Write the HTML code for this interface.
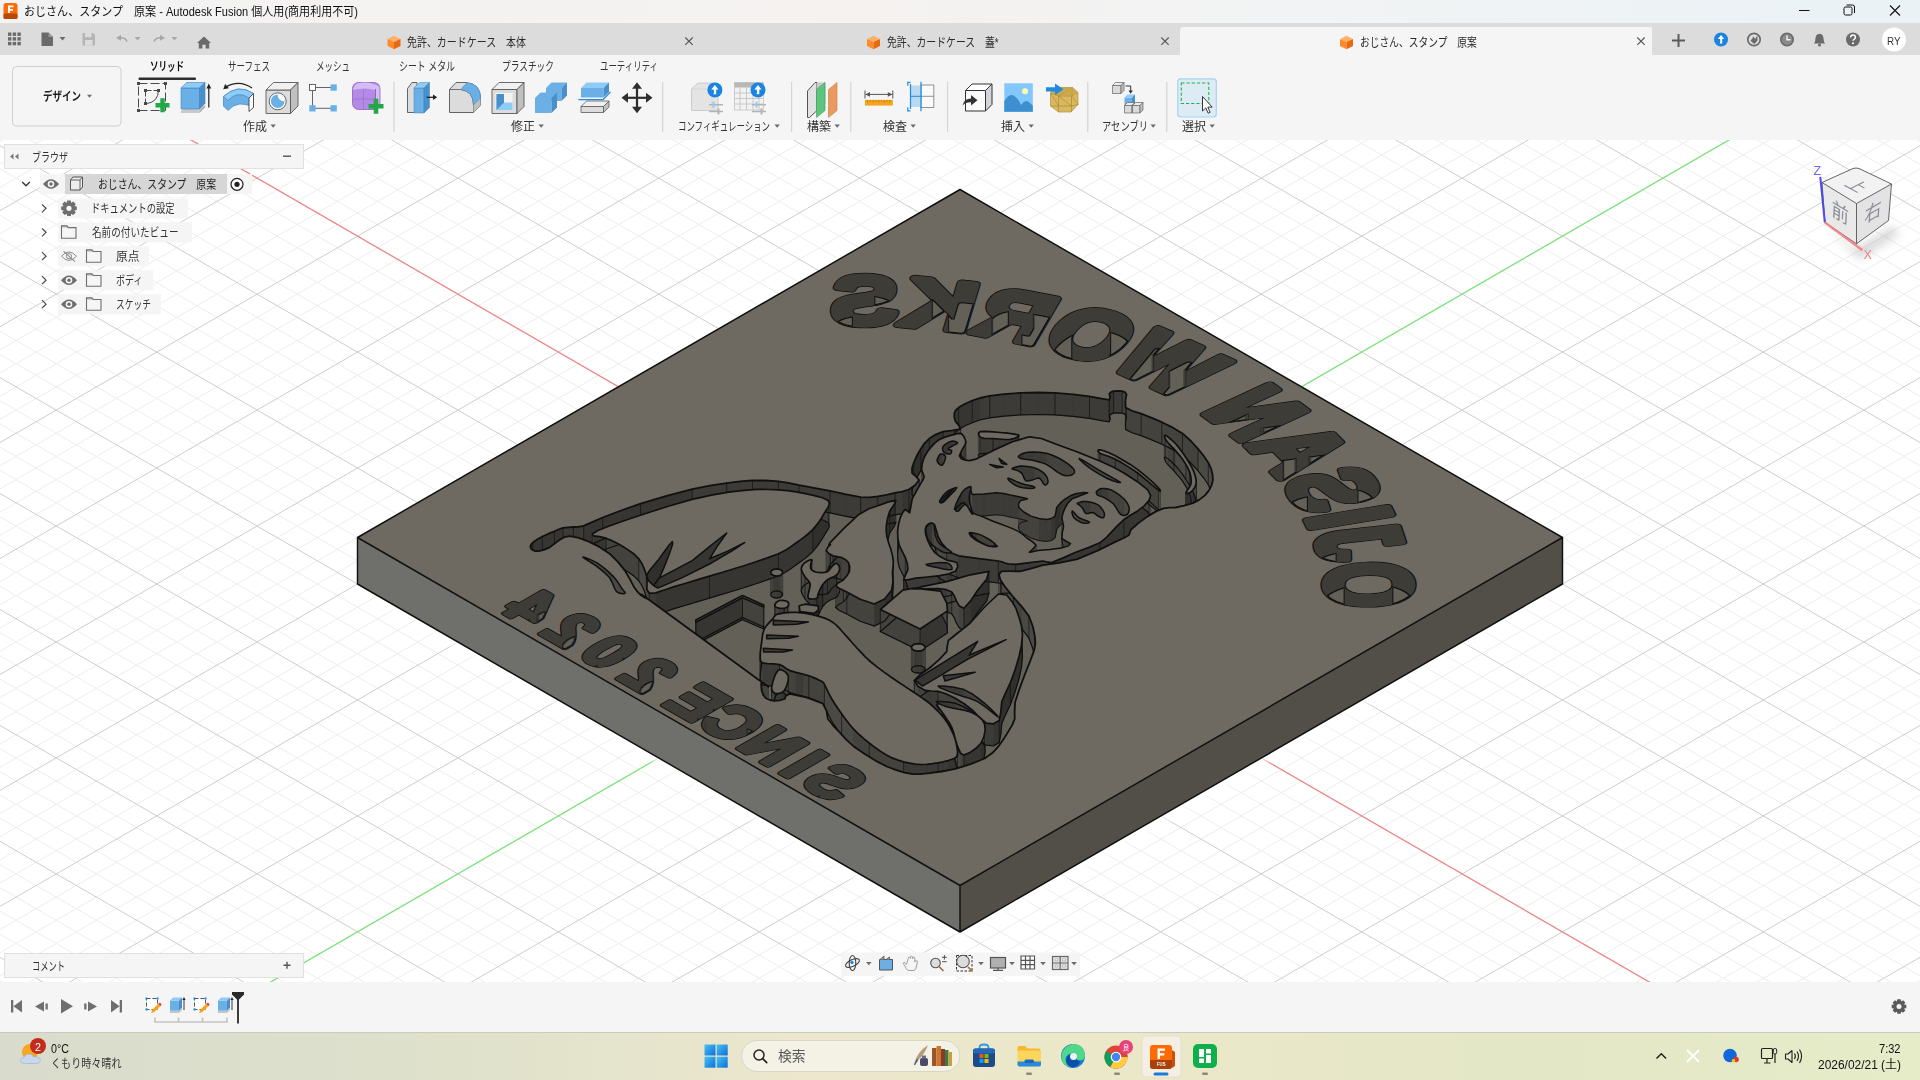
<!DOCTYPE html><html lang="ja"><head><meta charset="utf-8"><title>Autodesk Fusion</title><style>html,body{margin:0;padding:0}body{width:1920px;height:1080px;position:relative;overflow:hidden;background:#f5f5f5;font-family:"Liberation Sans","Noto Sans CJK JP",sans-serif}span{position:absolute;white-space:pre;height:20px;line-height:20px;transform-origin:0 50%;display:block}</style></head><body>
<svg width="1920" height="140" viewBox="0 0 1920 140" style="position:absolute;left:0;top:0">
<defs><linearGradient id="tb" x1="0" x2="1"><stop offset="0" stop-color="#f3f3f3"/><stop offset=".45" stop-color="#f5f2f0"/><stop offset=".7" stop-color="#f1f3f4"/><stop offset="1" stop-color="#eaf2f6"/></linearGradient></defs>
<rect width="1920" height="23" fill="url(#tb)"/>
<rect y="23" width="1920" height="32" fill="#dcdcdc"/>
<rect y="55" width="1920" height="85" fill="#f5f5f5"/>
<path d="M1180 55V31q0-4 4-4H1652V55z" fill="#f5f5f5"/>
<rect x="3.5" y="3" width="14" height="16" rx="2.5" fill="#ff6b00"/><rect x="3.5" y="13.5" width="14" height="5.5" rx="1.5" fill="#b8480a"/><path d="M8 5.5h5.5v1.8H10v1.8h3v1.7h-3v2.2H8z" fill="#fff"/>
<path d="M1799 10.5h10.5" stroke="#111" stroke-width="1"/>
<rect x="1844" y="7" width="8" height="8" rx="1.5" fill="none" stroke="#111" stroke-width="1"/><path d="M1846.5 5H1852.5q2 0 2 2V13" fill="none" stroke="#111" stroke-width="1"/>
<path d="M1890 5.5l10 10M1900 5.5l-10 10" stroke="#111" stroke-width="1.1"/>
<g fill="#6a6a6a"><rect x="8" y="32.5" width="3.4" height="3.4"/><rect x="8" y="37.2" width="3.4" height="3.4"/><rect x="8" y="41.9" width="3.4" height="3.4"/><rect x="12.7" y="32.5" width="3.4" height="3.4"/><rect x="12.7" y="37.2" width="3.4" height="3.4"/><rect x="12.7" y="41.9" width="3.4" height="3.4"/><rect x="17.4" y="32.5" width="3.4" height="3.4"/><rect x="17.4" y="37.2" width="3.4" height="3.4"/><rect x="17.4" y="41.9" width="3.4" height="3.4"/></g>
<path d="M41.5 32.5h7l4.5 4.5v9h-11.5z" fill="#6a6a6a"/><path d="M48.5 32.5v4.5h4.5z" fill="#9a9a9a"/>
<path d="M59.5 37h6l-3 3.5z" fill="#6a6a6a"/>
<path d="M82.5 33h10.5l2 2v10.5h-12.5z" fill="#b5b5b5"/><rect x="85" y="33" width="6.5" height="4.2" fill="#dcdcdc"/><rect x="85" y="40" width="7.5" height="5.5" fill="#dcdcdc"/>
<path d="M127 41.5q-2-4.5-8-3.5" fill="none" stroke="#a8a8a8" stroke-width="1.6"/><path d="M116 38l5-3.2v6z" fill="#a8a8a8"/><path d="M134.5 37h6l-3 3.5z" fill="#a8a8a8"/>
<path d="M154 41.5q2-4.5 8-3.5" fill="none" stroke="#a8a8a8" stroke-width="1.6"/><path d="M165 38l-5-3.2v6z" fill="#a8a8a8"/><path d="M171.5 37h6l-3 3.5z" fill="#a8a8a8"/>
<path d="M197 43l7-6.5l7 6.5h-1.8v5.5h-3.6v-3.8h-3.2v3.8h-3.6v-5.5z" fill="#6a6a6a"/>
<path d="M387.5 38.9l6.5 -3.2l6.5 3.2l-6.5 3.2z" fill="#ffb066"/><path d="M387.5 38.9l6.5 3.2v7.2l-6.5 -3.2z" fill="#ff8a2a"/><path d="M394 42.1l6.5 -3.2v7.2l-6.5 3.2z" fill="#e86a10"/>
<path d="M867 38.9l6.5 -3.2l6.5 3.2l-6.5 3.2z" fill="#ffb066"/><path d="M867 38.9l6.5 3.2v7.2l-6.5 -3.2z" fill="#ff8a2a"/><path d="M873.5 42.1l6.5 -3.2v7.2l-6.5 3.2z" fill="#e86a10"/>
<path d="M1340 38.9l6.5 -3.2l6.5 3.2l-6.5 3.2z" fill="#ffb066"/><path d="M1340 38.9l6.5 3.2v7.2l-6.5 -3.2z" fill="#ff8a2a"/><path d="M1346.5 42.1l6.5 -3.2v7.2l-6.5 3.2z" fill="#e86a10"/>
<path d="M685.3 37.5l7.4 7.4M692.7 37.5l-7.4 7.4" stroke="#5a5a5a" stroke-width="1.2"/>
<path d="M1161.3 37.5l7.4 7.4M1168.7 37.5l-7.4 7.4" stroke="#5a5a5a" stroke-width="1.2"/>
<path d="M1637.3 37.5l7.4 7.4M1644.7 37.5l-7.4 7.4" stroke="#5a5a5a" stroke-width="1.2"/>
<path d="M1672 40.5h13M1678.5 34v13" stroke="#5a5a5a" stroke-width="2"/>
<circle cx="1721" cy="39.5" r="7" fill="#1a84e0"/><path d="M1721 35l3.2 4h-2v4.5h-2.4q1-2 .2-4.5h-2.2z" fill="#fff"/>
<circle cx="1754" cy="39.5" r="6.2" fill="none" stroke="#6a6a6a" stroke-width="1.7"/><path d="M1750.5 41l3-4.5 1.5 2.5 2.5-3.5v5l-3 3.5z" fill="#6a6a6a"/>
<circle cx="1787" cy="39.5" r="6.2" fill="#8a8a8a" stroke="#6a6a6a" stroke-width="1.6"/><path d="M1787 35.5v4.3h3.6" fill="none" stroke="#f0f0f0" stroke-width="1.5"/>
<path d="M1813.8 43.5q1.6-1.4 1.6-4.5 0-4.6 4.1-5.2 4.1 .6 4.1 5.2 0 3.1 1.6 4.5z" fill="#6a6a6a"/><circle cx="1819.5" cy="45" r="1.5" fill="#6a6a6a"/>
<circle cx="1853" cy="39.5" r="7" fill="#6a6a6a"/><path d="M1850.6 37.5q0-2.4 2.4-2.4 2.4 0 2.4 2.2 0 1.3-1.3 2-1 .5-1 1.5" fill="none" stroke="#fff" stroke-width="1.5"/><circle cx="1853" cy="43.3" r="1" fill="#fff"/>
<circle cx="1894" cy="39.5" r="12" fill="#fff"/>
<rect x="12.5" y="66.5" width="108.5" height="59.5" rx="4" fill="#f5f5f5" stroke="#cfcfcf"/>
<path d="M87 94.7h5l-2.5 3z" fill="#6a6a6a"/>
<rect x="138.5" y="77.4" width="57.5" height="2.6" rx="1" fill="#2e2e2e"/>
<rect x="393.4" y="82" width="1.2" height="50" fill="#d4d4d4"/>
<rect x="662.1" y="82" width="1.2" height="50" fill="#d4d4d4"/>
<rect x="791" y="82" width="1.2" height="50" fill="#d4d4d4"/>
<rect x="850.1999999999999" y="82" width="1.2" height="50" fill="#d4d4d4"/>
<rect x="947" y="82" width="1.2" height="50" fill="#d4d4d4"/>
<rect x="1087.2" y="82" width="1.2" height="50" fill="#d4d4d4"/>
<rect x="1166.2" y="82" width="1.2" height="50" fill="#d4d4d4"/>
<path d="M270.5 124.5h5.4l-2.7 3.2z" fill="#6a6a6a"/>
<path d="M538.5 124.5h5.4l-2.7 3.2z" fill="#6a6a6a"/>
<path d="M774.5 124.5h5.4l-2.7 3.2z" fill="#6a6a6a"/>
<path d="M834.5 124.5h5.4l-2.7 3.2z" fill="#6a6a6a"/>
<path d="M910.5 124.5h5.4l-2.7 3.2z" fill="#6a6a6a"/>
<path d="M1028.5 124.5h5.4l-2.7 3.2z" fill="#6a6a6a"/>
<path d="M1150.5 124.5h5.4l-2.7 3.2z" fill="#6a6a6a"/>
<path d="M1209.5 124.5h5.4l-2.7 3.2z" fill="#6a6a6a"/>
<g transform="translate(136 81)"><rect x="2.5" y="2.5" width="27" height="27" fill="none" stroke="#4a4a4a" stroke-width="1" stroke-dasharray="9 3"/><g fill="#4a4a4a"><rect x="1" y="1" width="3" height="3"/><rect x="28" y="1" width="3" height="3"/><rect x="1" y="28" width="3" height="3"/></g><path d="M9.5 9.5H22.5M9.5 9.5V22.5" stroke="#4a4a4a" stroke-width="1" stroke-dasharray="6 2" fill="none"/><path d="M22.5 9.5Q22 21 11 22.5" fill="none" stroke="#4a4a4a" stroke-width="1"/><g fill="#4a4a4a"><rect x="8" y="8" width="3" height="3"/><rect x="21" y="8" width="3" height="3"/><rect x="8" y="21" width="3" height="3"/></g><path d="M19.5 24.2h14M26.5 17.2v14" stroke="#22a846" stroke-width="4.4"/></g>
<g transform="translate(180 81)"><path d="M1 30h18.5v2h-18.5z" fill="#c9c9c9"/><path d="M1 30l5.5 -5.5h18.5l-5.5 5.5z" fill="#c9c9c9"/><path d="M19.5 30l5.5 -5.5v2l-5.5 5.5z" fill="#a9a9a9"/><path d="M1 7h18.5v21h-18.5z" fill="#6ab0e6" stroke="#3f85bd" stroke-width="0.6" stroke-linejoin="round"/><path d="M1 7l5.5 -5.5h18.5l-5.5 5.5z" fill="#8fcbf7" stroke="#3f85bd" stroke-width="0.6" stroke-linejoin="round"/><path d="M19.5 7l5.5 -5.5v21l-5.5 5.5z" fill="#4a90c8" stroke="#3f85bd" stroke-width="0.6" stroke-linejoin="round"/><path d="M28.8 26.5V5" stroke="#222" stroke-width="1.2"/><path d="M26.4 7.5l2.4-5 2.4 5z" fill="#222"/></g>
<g transform="translate(222 81)"><path d="M1.5 15.5Q16 2 31.5 12.5V26.5Q16 18 6 29.5L1.5 25z" fill="#6ab0e6" stroke="#3f85bd" stroke-width=".7"/><path d="M1.5 15.5Q16 2 31.5 12.5L27 17Q16 9 6 19.5z" fill="#8fcbf7" stroke="#3f85bd" stroke-width=".7"/><path d="M27 17l4.5-4.5V26.5L27 30.5z" fill="#fff" stroke="#444" stroke-width=".9"/><path d="M30 7Q17 -2 3 6.5" fill="none" stroke="#222" stroke-width="1.1"/><path d="M1.2 8.3l2-5.3 3.7 4.3z" fill="#222"/></g>
<g transform="translate(265 81)"><path d="M1 9h24.5v23.5h-24.5z" fill="#dcdcdc" stroke="#5a5a5a" stroke-width="0.9" stroke-linejoin="round"/><path d="M1 9l7.5 -7.5h24.5l-7.5 7.5z" fill="#f0f0f0" stroke="#5a5a5a" stroke-width="0.9" stroke-linejoin="round"/><path d="M25.5 9l7.5 -7.5v23.5l-7.5 7.5z" fill="#c0c0c0" stroke="#5a5a5a" stroke-width="0.9" stroke-linejoin="round"/><circle cx="12.7" cy="20.3" r="8.5" fill="#fff" stroke="#555" stroke-width=".9"/><circle cx="12.7" cy="20.3" r="6.8" fill="#6ab0e6"/><path d="M12.7 13.5a6.8 6.8 0 0 1 6.8 6.8q-7-.5-6.8-6.8z" fill="#fff"/></g>
<g transform="translate(307 81)"><path d="M5.5 9.5v17M5.5 6.5h21M5.5 27.3h21" stroke="#555" stroke-width=".9"/><rect x="2.5" y="3.5" width="6" height="6" fill="#fff" stroke="#555" stroke-width=".9"/><rect x="23.5" y="3.4" width="6.3" height="6.3" fill="#6ab0e6"/><rect x="2.3" y="24.2" width="6.3" height="6.3" fill="#6ab0e6"/><rect x="23.5" y="24.2" width="6.3" height="6.3" fill="#6ab0e6"/></g>
<g transform="translate(351 81)"><rect x="1.5" y="1.5" width="27.5" height="27" rx="6" fill="#b48ae6" stroke="#8a62c0" stroke-width=".8"/><path d="M8 2Q20 0 28.5 6V22L24 28V9Q14 6 2 9Q3 3 8 2z" fill="#dcc4f7" opacity=".85"/><path d="M12.5 9v19M2 18h22" stroke="#9a72d0" stroke-width=".8"/><path d="M24.5 8V28" stroke="#7a52b0" stroke-width=".8"/><path d="M17.5 25.2h15M25 17.7v15" stroke="#22a846" stroke-width="4.6"/></g>
<g transform="translate(406 81)"><path d="M1.5 7.5l4.5-6h5v30H1.5z" fill="#dcdcdc" stroke="#555" stroke-width=".9"/><path d="M8 7h10v25h-10z" fill="#6ab0e6" stroke="#3f85bd" stroke-width="0.5" stroke-linejoin="round"/><path d="M8 7l5.5 -5.5h10l-5.5 5.5z" fill="#8fcbf7" stroke="#3f85bd" stroke-width="0.5" stroke-linejoin="round"/><path d="M18 7l5.5 -5.5v25l-5.5 5.5z" fill="#4a90c8" stroke="#3f85bd" stroke-width="0.5" stroke-linejoin="round"/><path d="M20.5 16.3h8" stroke="#222" stroke-width="1.3"/><path d="M27 13.5l4.2 2.8-4.2 2.8z" fill="#222"/></g>
<g transform="translate(448 81)"><path d="M1.5 31.5V8.5L8 1.5H18Q32.5 3 32.5 17V24.5L25.5 31.5z" fill="#dcdcdc" stroke="#555" stroke-width=".9"/><path d="M25.5 31.5V24Q25.5 10 12.5 8.5H1.5" fill="none" stroke="#555" stroke-width=".8"/><path d="M25.5 31.5l7-7V17l-7 7z" fill="#c0c0c0"/><path d="M12.5 8.5L19 1.6Q32.5 3 32.5 17L25.5 24Q25.5 10 12.5 8.5z" fill="#6ab0e6" stroke="#3f85bd" stroke-width=".5"/></g>
<g transform="translate(491 81)"><path d="M1 8.5h25v24h-25z" fill="#dcdcdc" stroke="#5a5a5a" stroke-width="0.9" stroke-linejoin="round"/><path d="M1 8.5l7 -7h25l-7 7z" fill="#f0f0f0" stroke="#5a5a5a" stroke-width="0.9" stroke-linejoin="round"/><path d="M26 8.5l7 -7v24l-7 7z" fill="#c0c0c0" stroke="#5a5a5a" stroke-width="0.9" stroke-linejoin="round"/><rect x="4.5" y="12" width="17" height="17" fill="#f3f3f3"/><path d="M5.5 13h7.5v8.5h8.5v7.5h-16z" fill="#8fcbf7"/><path d="M5.5 13h7.5v8.5l-7.5 7.5z" fill="#4a90c8"/></g>
<g transform="translate(534 81)"><path d="M12 7h15.5v13h-15.5z" fill="#6ab0e6"/><path d="M12 7l5.5 -5.5h15.5l-5.5 5.5z" fill="#6ab0e6"/><path d="M27.5 7l5.5 -5.5v13l-5.5 5.5z" fill="#4a90c8"/><path d="M1 17h16.5v15h-16.5z" fill="#6ab0e6"/><path d="M1 17l5.5 -5.5h16.5l-5.5 5.5z" fill="#6ab0e6"/><path d="M17.5 17l5.5 -5.5v15l-5.5 5.5z" fill="#4a90c8"/><path d="M12 7v10.5M17.5 17.5h10" stroke="#4a90c8" stroke-width="0"/></g>
<g transform="translate(579 81)"><path d="M2 25.5h22.5v6h-22.5z" fill="#dcdcdc" stroke="#5a5a5a" stroke-width="0.8" stroke-linejoin="round"/><path d="M2 25.5l5.5 -5.5h22.5l-5.5 5.5z" fill="#f0f0f0" stroke="#5a5a5a" stroke-width="0.8" stroke-linejoin="round"/><path d="M24.5 25.5l5.5 -5.5v6l-5.5 5.5z" fill="#c0c0c0" stroke="#5a5a5a" stroke-width="0.8" stroke-linejoin="round"/><path d="M2 7h22.5v9.5h-22.5z" fill="#6ab0e6"/><path d="M2 7l5.5 -5.5h22.5l-5.5 5.5z" fill="#8fcbf7"/><path d="M24.5 7l5.5 -5.5v9.5l-5.5 5.5z" fill="#4a90c8"/><path d="M-.5 18.7h24.5l7.5-7.8" fill="none" stroke="#1f8ae0" stroke-width="1.3"/></g>
<g transform="translate(637 97.8)" fill="#2e2e2e"><rect x="-11" y="-1.1" width="22" height="2.2"/><rect x="-1.1" y="-11" width="2.2" height="22"/><path d="M-15.5 0l6.5-5v10zM15.5 0l-6.5-5v10zM0 -15.5l-5 6.5h10zM0 15.5l-5-6.5h10z"/></g>
<g transform="translate(690 81)"><path d="M1.5 8l6.5-6h20v27.5h-26.5z" fill="#e4e4e4" stroke="#c4c4c4" stroke-width=".8"/><path d="M1.5 8h20.5v21.5M22 8l6-6" fill="none" stroke="#d0d0d0" stroke-width=".8"/><circle cx="24.9" cy="8.9" r="7.5" fill="#1a84e0"/><path d="M24.9 3.9000000000000004l3.5 4.6h-2.2v4.8h-2.8q1.2-2.2.2-4.8h-2.4z" fill="#fff"/><path d="M19 23.7h14M19 30.5h14" stroke="#b4b4b4" stroke-width="1.5"/><rect x="22.5" y="20.7" width="2" height="6" fill="#8fcbf7"/><rect x="27.5" y="27.5" width="2" height="6" fill="#b4b4b4"/></g>
<g transform="translate(733 81)"><rect x="1.5" y="1.5" width="29" height="27.5" fill="#f2f2f2" stroke="#c4c4c4" stroke-width=".8"/><rect x="1.5" y="1.5" width="29" height="5" fill="#b8b8b8"/><path d="M1.5 12h29M1.5 17.5h29M1.5 23h29M7 6.5v22.5M13.5 6.5v22.5M20 6.5v22.5M26 6.5v22.5" stroke="#c4c4c4" stroke-width=".9"/><circle cx="25" cy="8.9" r="7.5" fill="#1a84e0"/><path d="M25 3.9000000000000004l3.5 4.6h-2.2v4.8h-2.8q1.2-2.2.2-4.8h-2.4z" fill="#fff"/><path d="M19 23.7h14M19 30.5h14" stroke="#b4b4b4" stroke-width="1.5"/><rect x="22.5" y="20.7" width="2" height="6" fill="#8fcbf7"/><rect x="27.5" y="27.5" width="2" height="6" fill="#b4b4b4"/></g>
<g transform="translate(806 81)"><path d="M1.5 10l7.5-8.5h2v28l-7.5 7h-2z" fill="#e2e2e2" stroke="#444" stroke-width=".9"/><path d="M11 1.5v28l8.5-7V1.5z" fill="#c8c8c8" stroke="#444" stroke-width=".0"/><path d="M10.5 8.5l8.5-7v28l-8.5 7z" fill="#5cc47e" stroke="#3a9a58" stroke-width=".6"/><path d="M22.5 8.5l8.5-7v28l-8.5 7z" fill="#e89a60" stroke="#c87a40" stroke-width=".6"/></g>
<g transform="translate(862 81)"><path d="M3 9.5v8M30.8 9.5v8M3.5 13.4h27" stroke="#555" stroke-width="1"/><path d="M3.5 13.4l4.5-2.3v4.6zM30.3 13.4l-4.5-2.3v4.6z" fill="#555"/><rect x="3" y="18.9" width="27.8" height="5.7" fill="#f5a51d"/><path d="M5.5 18.9v3M8.3 18.9v2M11.1 18.9v3M13.899999999999999 18.9v2M16.7 18.9v3M19.5 18.9v2M22.299999999999997 18.9v3M25.099999999999998 18.9v2M27.9 18.9v3" stroke="#c47e08" stroke-width=".8"/></g>
<g transform="translate(906 81)"><rect x="15" y="4" width="12.8" height="22.5" fill="#fafafa" stroke="#888" stroke-width=".9"/><path d="M15 15.3h12.8" stroke="#888" stroke-width=".9"/><rect x="4.5" y="4.5" width="10.5" height="21.5" fill="#b9d9f3"/><path d="M4.5 15.3h10.5" stroke="#1f8ae0" stroke-width="1"/><path d="M15 .8v29.5M4.5 3v25" stroke="#1f8ae0" stroke-width="1.2"/><path d="M4.5 1.3h-2.7v3.5M4.5 29.8h-2.7v-3.5" fill="none" stroke="#1f8ae0" stroke-width="1.2"/></g>
<g transform="translate(961 81)"><path d="M4.5 9.5h20v20.5h-20z" fill="#fbfbfb" stroke="#333" stroke-width="1" stroke-linejoin="round"/><path d="M4.5 9.5l6.5 -6.5h20l-6.5 6.5z" fill="#fff" stroke="#333" stroke-width="1" stroke-linejoin="round"/><path d="M24.5 9.5l6.5 -6.5v20.5l-6.5 6.5z" fill="#d4d4d8" stroke="#333" stroke-width="1" stroke-linejoin="round"/><path d="M1.5 24.5Q3 17.5 10 17.5V14l6.5 5.3-6.5 5.3v-3.4Q5 21 1.5 24.5z" fill="#333"/></g>
<g transform="translate(1003 81)"><rect x="1.3" y="2.3" width="28.5" height="28.5" fill="#82c8ff"/><path d="M1.3 30.8V20Q6 12 10.5 14.5T18 24Q22 18.5 25 20.5T29.8 25V30.8z" fill="#3d8fcf"/><circle cx="22" cy="10.3" r="3" fill="#ffffb0"/></g>
<g transform="translate(1045 81)"><path d="M5.5 12l5-5.5h17l5.5 5v12l-7 7.5h-12.5l-8-6z" fill="#d9b862" stroke="#b89438" stroke-width=".7"/><path d="M5.5 12l8 3h13l6.5-3.5M13.5 15v16M26.5 15v16M5.5 12l8 13M13.5 15l13 10M26.5 15l6.5 8.5M13.5 25h13l6.5-1.5M5.5 25l8 0M10.5 6.5l3 8.5M27.5 6.5l-1 8.5M13.5 15l14-8.5" fill="none" stroke="#a88428" stroke-width=".6"/><path d="M10 6.5h17.5l5.5 5-6.5 3.5h-13l-8-3z" fill="#c4a248" opacity=".7"/><path d="M1 6.2h9V2.5l8.5 5.8-8.5 5.8v-3.7H1z" fill="#1f8ae0"/></g>
<g transform="translate(1111 81)"><path d="M1.5 4.5h8.5v8h-8.5z" fill="#dadada" stroke="#666" stroke-width="0.7" stroke-linejoin="round"/><path d="M1.5 4.5l3 -3h8.5l-3 3z" fill="#ececec" stroke="#666" stroke-width="0.7" stroke-linejoin="round"/><path d="M10 4.5l3 -3v8l-3 3z" fill="#bdbdbd" stroke="#666" stroke-width="0.7" stroke-linejoin="round"/><path d="M14.5 5h5.2v5" fill="none" stroke="#333" stroke-width="1"/><path d="M17.5 9.5l2.2 3.3 2.2-3.3z" fill="#333"/><path d="M13.5 16.5h7.5v7.5h-7.5z" fill="#6ab0e6"/><path d="M13.5 16.5l3 -3h7.5l-3 3z" fill="#8fcbf7"/><path d="M21 16.5l3 -3v7.5l-3 3z" fill="#4a90c8"/><path d="M13.5 24.5h7.5v7.5h-7.5z" fill="#dadada" stroke="#666" stroke-width="0.7" stroke-linejoin="round"/><path d="M13.5 24.5l3 -3h7.5l-3 3z" fill="#ececec" stroke="#666" stroke-width="0.7" stroke-linejoin="round"/><path d="M21 24.5l3 -3v7.5l-3 3z" fill="#bdbdbd" stroke="#666" stroke-width="0.7" stroke-linejoin="round"/><path d="M21.5 24.5h7.5v7.5h-7.5z" fill="#dadada" stroke="#666" stroke-width="0.7" stroke-linejoin="round"/><path d="M21.5 24.5l3 -3h7.5l-3 3z" fill="#ececec" stroke="#666" stroke-width="0.7" stroke-linejoin="round"/><path d="M29 24.5l3 -3v7.5l-3 3z" fill="#bdbdbd" stroke="#666" stroke-width="0.7" stroke-linejoin="round"/></g>
<rect x="1177.8" y="78.8" width="38.5" height="38.2" rx="3" fill="#ddebf5" stroke="#a6d3f0" stroke-width="1.2"/><rect x="1181.3" y="83" width="27.5" height="20.5" fill="none" stroke="#22b14c" stroke-width="1.1" stroke-dasharray="3.2 2"/><path d="M1202.5 96.5v14.5l3.3-3.1 2.3 5.3 2-.9-2.3-5.2h4.4z" fill="#fff" stroke="#222" stroke-width=".9"/>
</svg>
<svg id="cv" width="1920" height="842" viewBox="0 140 1920 842" style="position:absolute;left:0;top:140px">
<defs><path id="arcp" d="M78.4 312.6A560 560 0 0 1 920.4 308.9"/><filter id="ff" filterUnits="userSpaceOnUse" x="300" y="180" width="1320" height="720" color-interpolation-filters="sRGB"><feMorphology in="SourceAlpha" operator="erode" radius="0.01 11.00" result="e"/><feOffset in="e" dy="11.00" result="f"/><feMorphology in="f" operator="erode" radius="0.9 0.9" result="f2"/><feFlood flood-color="#101010"/><feComposite in2="f" operator="in" result="edge"/><feFlood flood-color="#636058"/><feComposite in2="f2" operator="in" result="fl"/><feMerge><feMergeNode in="edge"/><feMergeNode in="fl"/></feMerge></filter><filter id="sh" x="-10%" y="-10%" width="120%" height="120%"><feGaussianBlur stdDeviation="5"/></filter></defs>
<rect x="0" y="140" width="1920" height="842" fill="#fff"/>
<path d="M0 1096.5L1920 2205.0M0 71.5L1920 -1037.0M0 1050.1L1920 2158.6M0 117.9L1920 -990.6M0 1026.9L1920 2135.4M0 141.1L1920 -967.4M0 1003.7L1920 2112.2M0 164.3L1920 -944.2M0 980.5L1920 2089.0M0 187.5L1920 -921.0M0 934.2L1920 2042.7M0 233.8L1920 -874.7M0 911.0L1920 2019.5M0 257.0L1920 -851.5M0 887.8L1920 1996.3M0 280.2L1920 -828.3M0 864.6L1920 1973.1M0 303.4L1920 -805.1M0 818.2L1920 1926.7M0 349.8L1920 -758.7M0 795.0L1920 1903.5M0 373.0L1920 -735.5M0 771.8L1920 1880.3M0 396.2L1920 -712.3M0 748.6L1920 1857.1M0 419.4L1920 -689.1M0 702.3L1920 1810.8M0 465.7L1920 -642.8M0 679.1L1920 1787.6M0 488.9L1920 -619.6M0 655.9L1920 1764.4M0 512.1L1920 -596.4M0 632.7L1920 1741.2M0 535.3L1920 -573.2M0 586.3L1920 1694.8M0 581.7L1920 -526.8M0 563.1L1920 1671.6M0 604.9L1920 -503.6M0 539.9L1920 1648.4M0 628.1L1920 -480.4M0 516.7L1920 1625.2M0 651.3L1920 -457.2M0 470.4L1920 1578.9M0 697.6L1920 -410.9M0 447.2L1920 1555.7M0 720.8L1920 -387.7M0 424.0L1920 1532.5M0 744.0L1920 -364.5M0 400.8L1920 1509.3M0 767.2L1920 -341.3M0 354.4L1920 1462.9M0 813.6L1920 -294.9M0 331.2L1920 1439.7M0 836.8L1920 -271.7M0 308.0L1920 1416.5M0 860.0L1920 -248.5M0 284.8L1920 1393.3M0 883.2L1920 -225.3M0 238.5L1920 1347.0M0 929.5L1920 -179.0M0 215.3L1920 1323.8M0 952.7L1920 -155.8M0 192.1L1920 1300.6M0 975.9L1920 -132.6M0 168.9L1920 1277.4M0 999.1L1920 -109.4M0 122.5L1920 1231.0M0 1045.5L1920 -63.0M0 99.3L1920 1207.8M0 1068.7L1920 -39.8M0 76.1L1920 1184.6M0 1091.9L1920 -16.6M0 52.9L1920 1161.4M0 1115.1L1920 6.6M0 6.6L1920 1115.1M0 1161.4L1920 52.9M0 -16.6L1920 1091.9M0 1184.6L1920 76.1M0 -39.8L1920 1068.7M0 1207.8L1920 99.3M0 -63.0L1920 1045.5M0 1231.0L1920 122.5M0 -109.4L1920 999.1M0 1277.4L1920 168.9M0 -132.6L1920 975.9M0 1300.6L1920 192.1M0 -155.8L1920 952.7M0 1323.8L1920 215.3M0 -179.0L1920 929.5M0 1347.0L1920 238.5M0 -225.3L1920 883.2M0 1393.3L1920 284.8M0 -248.5L1920 860.0M0 1416.5L1920 308.0M0 -271.7L1920 836.8M0 1439.7L1920 331.2M0 -294.9L1920 813.6M0 1462.9L1920 354.4M0 -341.3L1920 767.2M0 1509.3L1920 400.8M0 -364.5L1920 744.0M0 1532.5L1920 424.0M0 -387.7L1920 720.8M0 1555.7L1920 447.2M0 -410.9L1920 697.6M0 1578.9L1920 470.4M0 -457.2L1920 651.3M0 1625.2L1920 516.7M0 -480.4L1920 628.1M0 1648.4L1920 539.9M0 -503.6L1920 604.9M0 1671.6L1920 563.1M0 -526.8L1920 581.7M0 1694.8L1920 586.3M0 -573.2L1920 535.3M0 1741.2L1920 632.7M0 -596.4L1920 512.1M0 1764.4L1920 655.9M0 -619.6L1920 488.9M0 1787.6L1920 679.1M0 -642.8L1920 465.7M0 1810.8L1920 702.3M0 -689.1L1920 419.4M0 1857.1L1920 748.6M0 -712.3L1920 396.2M0 1880.3L1920 771.8M0 -735.5L1920 373.0M0 1903.5L1920 795.0M0 -758.7L1920 349.8M0 1926.7L1920 818.2M0 -805.1L1920 303.4M0 1973.1L1920 864.6M0 -828.3L1920 280.2M0 1996.3L1920 887.8M0 -851.5L1920 257.0M0 2019.5L1920 911.0M0 -874.7L1920 233.8M0 2042.7L1920 934.2M0 -921.0L1920 187.5M0 2089.0L1920 980.5M0 -944.2L1920 164.3M0 2112.2L1920 1003.7M0 -967.4L1920 141.1M0 2135.4L1920 1026.9M0 -990.6L1920 117.9M0 2158.6L1920 1050.1M0 -1037.0L1920 71.5M0 2205.0L1920 1096.5M0 -1060.2L1920 48.3M0 2228.2L1920 1119.7" stroke="#ededed" stroke-width="1" fill="none"/>
<path d="M0 1073.3L1920 2181.8M0 94.7L1920 -1013.8M0 957.3L1920 2065.9M0 210.7L1920 -897.9M0 841.4L1920 1949.9M0 326.6L1920 -781.9M0 725.4L1920 1834.0M0 442.6L1920 -666.0M0 609.5L1920 1718.0M0 558.5L1920 -550.0M0 493.5L1920 1602.1M0 674.5L1920 -434.1M0 377.6L1920 1486.1M0 790.4L1920 -318.1M0 261.6L1920 1370.2M0 906.4L1920 -202.2M0 145.7L1920 1254.2M0 1022.3L1920 -86.2M0 29.7L1920 1138.3M0 1138.3L1920 29.7M0 -86.2L1920 1022.3M0 1254.2L1920 145.7M0 -202.2L1920 906.4M0 1370.2L1920 261.6M0 -318.1L1920 790.4M0 1486.1L1920 377.6M0 -434.1L1920 674.5M0 1602.1L1920 493.5M0 -550.0L1920 558.5M0 1718.0L1920 609.5M0 -666.0L1920 442.6M0 1834.0L1920 725.4M0 -781.9L1920 326.6M0 1949.9L1920 841.4M0 -897.9L1920 210.7M0 2065.9L1920 957.3M0 -1013.8L1920 94.7M0 2181.8L1920 1073.3" stroke="#cdcdcd" stroke-width="1" fill="none"/>
<path d="M0 29.7L1920 1138.3" stroke="#f08a8a" stroke-width="1.3"/>
<path d="M0 1138.3L1920 29.7" stroke="#7ee67e" stroke-width="1.3"/>
<polygon points="351.5,584.0 960.0,940.0 1568.5,584.0 960.0,872.0" fill="#fff" opacity=".9" filter="url(#sh)"/>
<polygon points="357.5,537.5 960.0,885.5 960.0,932.0 357.5,584.0" fill="#6f706b"/>
<polygon points="960.0,885.5 1562.5,537.5 1562.5,584.0 960.0,932.0" fill="#524f48"/>
<polygon points="960.0,189.5 1562.5,537.5 960.0,885.5 357.5,537.5" fill="#6e6a61"/>
<path d="M960.0 189.5 L1562.5 537.5 L960.0 885.5 L357.5 537.5 Z M357.5 537.5V584.0L960.0 932.0L1562.5 584.0V537.5 M960.0 885.5V932.0" fill="none" stroke="#101010" stroke-width="1.45" stroke-linejoin="round"/>
<g transform="matrix(-0.6025 -0.348 -0.6025 0.348 1562.5 537.5)" font-family="Liberation Sans, sans-serif" font-weight="bold" text-anchor="middle">
<g fill="#101010" stroke="#101010" stroke-linejoin="round"><g font-size="140" stroke-width="14.0"><text text-anchor="start"><textPath href="#arcp" startOffset="22.0" textLength="921.0" lengthAdjust="spacingAndGlyphs">OJISAN WORKS</textPath></text></g><g font-size="93" stroke-width="9.0"><text transform="scale(0.900 1)" x="280.7 338.0 395.9 469.1 534.2 578.7 623.4 696.7 766.2 837.4" y="987.0">SINCE 2024</text></g></g>
<g fill="#3d3c37" stroke="#3d3c37" stroke-linejoin="round"><g font-size="140" stroke-width="11.0"><text text-anchor="start"><textPath href="#arcp" startOffset="22.0" textLength="921.0" lengthAdjust="spacingAndGlyphs">OJISAN WORKS</textPath></text></g><g font-size="93" stroke-width="6.0"><text transform="scale(0.900 1)" x="280.7 338.0 395.9 469.1 534.2 578.7 623.4 696.7 766.2 837.4" y="987.0">SINCE 2024</text></g></g>
</g><g filter="url(#ff)"><g transform="matrix(-0.6025 -0.348 -0.6025 0.348 1562.5 537.5)" font-family="Liberation Sans, sans-serif" font-weight="bold" text-anchor="middle"><g fill="#fff" stroke="#fff" stroke-linejoin="round"><g font-size="140" stroke-width="11.0"><text text-anchor="start"><textPath href="#arcp" startOffset="22.0" textLength="921.0" lengthAdjust="spacingAndGlyphs">OJISAN WORKS</textPath></text></g><g font-size="93" stroke-width="6.0"><text transform="scale(0.900 1)" x="280.7 338.0 395.9 469.1 534.2 578.7 623.4 696.7 766.2 837.4" y="987.0">SINCE 2024</text></g></g></g>
</g>
<defs><clipPath id="fo"><path d="M532.9 550.2L531.1 548.7L530.3 546.8L530.9 544.8L532.9 542.5L537.1 539.5L542.4 536.5L548.5 533.7L554.4 531.3L558.9 529.3L563.1 527.8L568.1 527.3L573.4 527.0L578.0 526.8L583.7 525.8L591.5 522.4L602.7 517.5L619.6 511.0L640.6 503.7L666.6 495.9L692.2 489.1L711.1 485.3L726.7 483.1L740.1 481.3L752.5 480.5L765.8 480.5L778.4 481.3L788.4 482.9L799.0 485.1L813.9 487.8L830.0 490.8L846.2 494.4L860.6 497.2L870.0 497.4L877.8 496.4L886.6 494.8L895.0 492.9L902.3 491.6L908.8 489.5L915.3 485.0L919.1 480.0L916.1 476.6L912.1 473.0L912.0 468.3L913.8 462.7L916.8 455.8L920.7 448.9L924.5 443.3L929.3 438.6L935.6 434.6L943.1 431.7L952.8 430.4L960.3 429.1L959.0 425.5L955.5 421.3L954.3 417.4L954.3 413.6L955.5 410.5L958.6 407.6L964.6 404.0L972.3 400.7L979.9 398.0L989.6 395.8L1004.0 394.1L1020.6 392.9L1037.6 392.5L1055.0 392.9L1073.2 394.4L1089.5 396.4L1101.5 398.7L1109.3 399.8L1110.2 397.2L1109.3 393.8L1110.9 392.1L1113.6 391.2L1117.9 390.8L1122.2 391.2L1124.9 392.1L1126.5 394.6L1125.4 400.9L1125.6 407.6L1132.0 410.8L1141.1 413.6L1151.1 417.6L1161.8 422.2L1172.5 427.4L1182.5 433.4L1190.9 441.0L1198.0 448.9L1203.8 456.0L1208.3 462.7L1211.2 468.9L1212.6 474.7L1212.9 480.0L1211.7 485.1L1209.0 490.4L1204.9 495.4L1199.5 499.6L1192.8 503.1L1184.2 505.7L1175.6 507.5L1169.4 507.7L1163.5 508.3L1156.1 511.4L1148.0 516.1L1138.5 523.1L1130.8 529.8L1129.7 532.9L1129.1 535.0L1124.4 537.7L1115.3 541.9L1097.6 550.6L1077.4 559.1L1059.2 562.8L1043.0 565.2L1030.7 568.6L1020.3 571.3L1009.4 571.2L1001.3 571.3L998.9 574.6L1000.5 579.9L1005.9 587.9L1013.4 597.2L1021.6 606.4L1028.9 616.1L1032.9 626.8L1034.9 636.8L1035.4 643.6L1034.1 650.6L1030.3 660.8L1025.4 673.0L1019.8 688.0L1015.1 702.2L1014.6 711.6L1014.7 718.8L1012.3 724.9L1008.7 730.9L1004.0 738.6L998.4 746.4L992.6 752.8L984.6 758.5L970.7 764.1L955.3 768.8L941.6 771.5L929.5 773.1L920.3 774.1L912.2 774.0L903.6 772.3L895.0 769.7L886.8 766.5L877.8 761.9L865.5 754.5L853.7 746.4L846.0 739.4L839.9 732.6L833.3 725.8L827.8 718.8L826.5 710.8L822.7 703.3L806.3 697.3L789.9 693.9L786.0 695.8L784.8 699.0L779.8 700.4L774.4 700.8L769.8 700.0L765.8 698.2L763.2 694.9L761.7 690.8L761.2 685.8L761.3 681.7L761.3 681.1L761.3 681.7L768.4 686.8L761.3 681.7L704.8 640.5L648.3 599.3L641.3 594.2L648.3 599.3L648.8 599.6L648.3 599.3L644.9 597.7L640.6 595.0L637.2 591.4L633.7 586.4L629.9 579.2L625.1 570.9L618.1 562.1L609.6 553.7L599.4 546.9L588.9 541.6L578.8 537.9L569.9 536.1L564.2 537.2L559.6 539.9L554.4 543.8L549.3 547.6L543.8 549.9L538.9 551.1L535.4 551.1Z"/></clipPath></defs>
<path d="M532.9 550.2L531.1 548.7L530.3 546.8L530.9 544.8L532.9 542.5L537.1 539.5L542.4 536.5L548.5 533.7L554.4 531.3L558.9 529.3L563.1 527.8L568.1 527.3L573.4 527.0L578.0 526.8L583.7 525.8L591.5 522.4L602.7 517.5L619.6 511.0L640.6 503.7L666.6 495.9L692.2 489.1L711.1 485.3L726.7 483.1L740.1 481.3L752.5 480.5L765.8 480.5L778.4 481.3L788.4 482.9L799.0 485.1L813.9 487.8L830.0 490.8L846.2 494.4L860.6 497.2L870.0 497.4L877.8 496.4L886.6 494.8L895.0 492.9L902.3 491.6L908.8 489.5L915.3 485.0L919.1 480.0L916.1 476.6L912.1 473.0L912.0 468.3L913.8 462.7L916.8 455.8L920.7 448.9L924.5 443.3L929.3 438.6L935.6 434.6L943.1 431.7L952.8 430.4L960.3 429.1L959.0 425.5L955.5 421.3L954.3 417.4L954.3 413.6L955.5 410.5L958.6 407.6L964.6 404.0L972.3 400.7L979.9 398.0L989.6 395.8L1004.0 394.1L1020.6 392.9L1037.6 392.5L1055.0 392.9L1073.2 394.4L1089.5 396.4L1101.5 398.7L1109.3 399.8L1110.2 397.2L1109.3 393.8L1110.9 392.1L1113.6 391.2L1117.9 390.8L1122.2 391.2L1124.9 392.1L1126.5 394.6L1125.4 400.9L1125.6 407.6L1132.0 410.8L1141.1 413.6L1151.1 417.6L1161.8 422.2L1172.5 427.4L1182.5 433.4L1190.9 441.0L1198.0 448.9L1203.8 456.0L1208.3 462.7L1211.2 468.9L1212.6 474.7L1212.9 480.0L1211.7 485.1L1209.0 490.4L1204.9 495.4L1199.5 499.6L1192.8 503.1L1184.2 505.7L1175.6 507.5L1169.4 507.7L1163.5 508.3L1156.1 511.4L1148.0 516.1L1138.5 523.1L1130.8 529.8L1129.7 532.9L1129.1 535.0L1124.4 537.7L1115.3 541.9L1097.6 550.6L1077.4 559.1L1059.2 562.8L1043.0 565.2L1030.7 568.6L1020.3 571.3L1009.4 571.2L1001.3 571.3L998.9 574.6L1000.5 579.9L1005.9 587.9L1013.4 597.2L1021.6 606.4L1028.9 616.1L1032.9 626.8L1034.9 636.8L1035.4 643.6L1034.1 650.6L1030.3 660.8L1025.4 673.0L1019.8 688.0L1015.1 702.2L1014.6 711.6L1014.7 718.8L1012.3 724.9L1008.7 730.9L1004.0 738.6L998.4 746.4L992.6 752.8L984.6 758.5L970.7 764.1L955.3 768.8L941.6 771.5L929.5 773.1L920.3 774.1L912.2 774.0L903.6 772.3L895.0 769.7L886.8 766.5L877.8 761.9L865.5 754.5L853.7 746.4L846.0 739.4L839.9 732.6L833.3 725.8L827.8 718.8L826.5 710.8L822.7 703.3L806.3 697.3L789.9 693.9L786.0 695.8L784.8 699.0L779.8 700.4L774.4 700.8L769.8 700.0L765.8 698.2L763.2 694.9L761.7 690.8L761.2 685.8L761.3 681.7L761.3 681.1L761.3 681.7L768.4 686.8L761.3 681.7L704.8 640.5L648.3 599.3L641.3 594.2L648.3 599.3L648.8 599.6L648.3 599.3L644.9 597.7L640.6 595.0L637.2 591.4L633.7 586.4L629.9 579.2L625.1 570.9L618.1 562.1L609.6 553.7L599.4 546.9L588.9 541.6L578.8 537.9L569.9 536.1L564.2 537.2L559.6 539.9L554.4 543.8L549.3 547.6L543.8 549.9L538.9 551.1L535.4 551.1Z" fill="#636058"/>
<g clip-path="url(#fo)">
<path d="M592.3 555.9L598.0 552.5L608.5 548.2L623.3 543.0L644.1 536.0L669.1 528.0L692.2 521.4L711.4 517.1L728.6 514.2L743.9 512.3L757.0 511.4L768.1 511.5L778.4 511.9L787.7 512.7L796.0 513.8L804.2 515.4L813.4 517.4L822.4 519.7L828.3 522.6L829.5 526.0L827.7 529.9L824.9 534.3L821.7 539.8L817.5 545.9L812.8 551.6L807.4 556.5L801.5 561.1L795.6 565.3L790.5 569.0L785.4 572.2L778.4 575.7L768.1 579.6L756.0 583.8L743.9 587.7L732.4 591.3L720.9 594.7L709.5 598.1L697.7 601.6L685.9 605.2L675.0 608.4L664.9 611.8L655.7 614.9L649.2 615.3L646.8 611.3L647.0 604.7L646.6 598.1L644.7 592.1L642.2 586.2L638.8 580.8L634.3 576.3L628.9 572.4L623.3 568.8L617.6 565.5L611.7 562.6L606.1 560.2L599.6 558.7L593.5 557.8ZM695.8 642.0L742.5 617.5L763.7 627.0L763.7 629.0L742.5 619.7L695.8 644.2ZM782.7 594.5L781.9 596.3L779.7 597.7L776.7 598.2L773.7 597.7L771.5 596.3L770.7 594.5L771.5 592.7L773.7 591.3L776.7 590.8L779.7 591.3L781.9 592.7ZM775.0 626.2L776.1 624.7L777.9 623.2L780.0 622.3L782.6 622.3L785.4 622.8L787.5 623.7L788.5 624.9L788.7 626.5L788.3 627.8L787.4 628.9L786.0 629.8L784.2 630.3L781.7 630.4L778.9 630.1L776.7 629.5L775.4 628.6L774.8 627.4ZM801.3 591.2L801.6 589.0L802.6 587.1L804.2 585.3L806.6 583.6L809.6 582.1L811.7 581.7L811.8 582.8L811.0 584.9L810.5 587.0L810.5 588.8L810.8 590.5L811.7 592.0L813.4 593.1L815.7 594.0L818.3 594.5L821.4 594.6L824.7 594.4L827.5 593.7L829.2 592.2L830.4 590.4L831.7 588.7L833.3 587.1L835.1 585.8L836.7 585.3L838.0 586.3L839.2 588.2L839.7 590.3L839.3 592.5L838.3 594.9L836.7 597.0L834.2 598.5L831.1 599.7L828.3 601.2L826.1 602.9L824.2 604.8L822.5 607.0L820.9 609.7L819.5 612.7L818.3 615.3L817.8 617.4L817.6 619.2L816.7 620.3L814.0 621.0L810.7 621.1L808.3 620.3L807.9 618.1L808.5 615.0L809.2 612.0L809.7 609.7L810.2 607.5L810.0 605.3L808.7 603.1L806.8 601.0L805.0 598.7L803.4 596.2L802.0 593.6ZM799.2 627.8L805.0 626.2L818.3 627.8L818.3 632.0L814.2 635.3L800.0 633.7ZM771.7 708.7L773.0 703.0L775.5 696.3L778.3 692.0L781.9 691.9L785.9 694.4L788.3 697.8L788.2 702.6L786.5 708.4L784.2 712.8L781.3 714.9L777.8 715.6L775.0 715.3L773.1 714.2L771.8 712.0ZM772.7 640.9L774.2 638.8L775.3 637.3L777.9 636.1L783.1 635.1L789.8 634.4L796.8 634.4L804.4 635.2L812.3 636.7L819.2 638.4L824.6 640.1L829.0 642.0L833.0 644.4L836.6 647.3L839.8 650.7L843.3 654.7L847.7 659.6L852.4 665.0L857.1 670.2L861.5 674.9L865.8 679.3L870.9 684.0L877.3 689.1L884.4 694.4L891.6 699.5L898.6 704.3L905.6 708.9L912.2 713.3L918.4 717.4L924.1 721.3L929.5 725.3L934.5 729.8L939.2 734.5L943.2 739.1L946.7 743.8L949.5 748.4L951.8 752.9L953.7 757.0L955.1 761.0L956.2 765.0L957.0 769.3L957.6 773.6L957.4 777.0L956.3 779.1L954.5 780.2L951.8 781.3L948.0 782.6L943.2 783.8L938.1 784.8L932.6 785.6L926.7 786.3L920.8 786.5L915.1 786.1L909.4 785.2L903.6 783.9L897.9 782.1L892.1 779.9L886.4 777.0L880.6 773.4L874.8 769.3L869.2 765.0L863.8 760.6L858.5 756.0L853.7 751.2L849.3 746.1L845.4 740.9L841.6 735.7L837.9 730.4L834.4 725.2L831.3 720.2L828.6 715.1L826.3 710.2L824.4 706.4L823.3 704.5L822.6 703.8L821.0 703.0L817.8 701.4L813.7 699.6L808.9 697.8L802.8 696.1L795.9 694.4L789.9 692.6L786.1 690.5L783.3 688.3L779.6 686.6L773.8 685.9L767.3 685.7L762.4 684.9L760.5 682.9L760.2 680.2L760.3 677.1L760.4 673.5L760.9 669.4L761.5 665.1L762.1 660.5L762.8 655.7L764.1 651.3L766.7 647.4L769.9 643.9ZM830.4 564.3L843.4 550.8L858.8 536.4L869.0 530.7L877.8 527.8L888.4 523.9L895.9 522.3L894.2 526.5L889.8 533.0L887.7 539.8L886.4 546.8L886.2 552.9L886.9 558.8L888.7 564.9L890.7 570.9L892.3 576.9L893.3 583.0L893.1 588.7L892.4 595.0L893.0 603.5L891.6 612.2L884.6 621.0L874.3 626.0L860.2 621.3L846.8 614.0L839.0 610.3L835.6 607.4L838.4 604.8L843.3 601.9L846.9 597.8L849.4 593.3L849.7 588.8L848.5 584.7L845.5 581.7L841.6 579.5L837.3 578.6L833.0 577.8L828.8 575.5L826.1 572.6L827.8 569.4L830.4 566.6L828.9 566.8ZM880.4 631.5L902.8 612.2L914.0 610.2L940.7 613.1L946.7 625.1L947.5 632.9L920.0 651.0ZM925.2 669.4L924.2 671.3L921.7 672.7L918.3 673.2L914.8 672.7L912.3 671.3L911.4 669.4L912.3 667.5L914.8 666.1L918.3 665.6L921.7 666.1L924.2 667.5ZM913.1 610.9L925.7 607.9L946.7 603.6L970.6 596.8L988.9 593.3L986.8 601.0L977.7 612.2L970.6 622.9L963.9 630.3L959.4 628.1L956.2 622.6L954.4 618.0L951.8 614.0L946.3 611.7L938.1 610.5L922.6 610.9ZM914.3 702.6L920.1 696.7L929.5 690.0L938.9 681.8L946.7 673.7L947.3 668.1L948.4 662.5L957.0 655.5L969.1 646.1L984.1 629.5L998.4 616.0L1006.6 617.0L1012.1 623.7L1016.2 630.9L1019.0 639.2L1021.4 647.4L1022.5 656.4L1021.5 667.1L1019.0 678.8L1015.0 692.0L1010.4 704.7L1005.7 714.6L1001.8 723.6L1000.8 734.1L999.2 742.6L993.5 745.8L986.3 745.1L979.7 739.6L972.5 732.2L964.1 725.8L955.3 720.2L946.4 716.0L938.1 713.3L931.2 713.0L925.2 712.4L918.0 708.2ZM938.1 725.3L946.9 726.7L959.9 730.1L970.8 734.0L977.4 737.5L982.0 741.4L984.6 746.0L985.2 752.1L983.9 758.9L981.1 765.0L976.0 770.3L969.4 774.9L963.9 777.0L960.8 775.5L958.8 771.5L957.0 766.7L955.3 761.3L953.8 755.2L951.8 749.5L949.1 744.5L946.0 739.9L943.2 735.7L939.9 731.3L936.9 727.3ZM965.4 482.1L969.7 482.6L975.8 481.2L984.7 476.8L996.5 470.9L1012.5 463.8L1029.2 458.8L1041.3 460.5L1055.0 465.7L1077.5 474.0L1099.8 483.0L1113.1 489.0L1123.9 495.0L1137.4 503.7L1148.0 512.2L1150.7 517.8L1148.9 522.6L1144.2 527.8L1137.7 532.9L1130.8 537.1L1123.9 541.5L1117.8 547.4L1111.8 553.6L1106.6 559.3L1099.8 564.8L1088.5 569.6L1075.7 574.2L1062.6 580.1L1051.6 584.6L1047.6 584.2L1043.1 583.0L1029.6 584.7L1015.6 586.4L1008.1 585.9L1003.5 584.7L1002.7 584.0L998.4 583.0L979.0 580.7L958.7 577.8L950.8 574.8L946.7 570.9L941.8 565.2L938.1 558.8L936.2 552.1L934.6 546.8L931.6 545.2L928.6 545.9L926.3 548.2L925.2 551.9L925.8 556.7L927.7 562.3L930.6 568.5L934.6 574.3L940.4 578.8L946.7 582.1L952.7 583.3L957.0 584.7L957.8 588.9L955.3 593.3L948.9 595.8L939.8 597.6L927.5 599.0L915.7 600.2L907.9 601.8L903.6 601.9L905.2 597.6L907.9 591.6L907.3 585.6L905.3 579.5L902.3 573.6L899.3 567.4L897.9 560.7L897.6 553.7L898.5 546.5L900.2 539.9L902.7 534.5L905.3 531.3L907.7 533.3L909.7 534.7L910.7 529.0L912.2 520.9L916.5 512.8L920.8 505.4L923.2 501.4L924.1 498.5L922.9 495.3L921.5 491.6L922.2 485.7L924.1 479.5L927.2 474.1L931.0 469.2L935.0 464.9L939.6 461.4L945.6 458.9L951.7 457.1L956.9 455.6L961.1 455.4L963.9 458.5L965.4 462.3L965.9 464.2L965.1 466.6L961.9 472.2L959.4 477.8L961.4 480.7ZM980.1 453.7L985.2 453.4L992.6 453.9L999.9 454.5L1007.3 455.2L1014.6 456.1L1018.8 457.1L1018.3 458.6L1014.8 460.3L1010.2 461.4L1004.9 461.5L998.7 461.0L993.0 460.6L988.2 460.5L983.9 460.4L981.0 459.7L979.1 457.8L978.4 455.4ZM1165.2 457.1L1167.9 458.8L1171.7 462.0L1175.6 465.7L1179.1 469.9L1182.7 474.7L1185.9 479.5L1188.9 484.2L1191.6 488.8L1193.7 493.3L1195.2 497.6L1196.1 501.6L1196.2 505.3L1195.1 508.8L1193.1 511.8L1191.1 514.0L1189.0 515.2L1186.9 515.6L1185.9 514.8L1187.1 512.5L1189.5 509.1L1191.1 505.3L1191.2 501.5L1190.6 497.4L1189.4 493.3L1187.5 489.2L1185.1 485.1L1182.5 481.2L1179.7 477.6L1176.7 474.1L1173.9 470.9L1171.0 467.8L1168.1 464.8L1166.1 462.3L1164.9 459.8L1164.4 457.7ZM1099.8 471.8L1103.6 472.8L1109.0 474.8L1115.3 477.8L1122.3 481.7L1130.2 486.4L1137.7 491.6L1145.2 497.6L1152.4 503.9L1157.5 508.8L1160.0 511.7L1160.4 513.1L1158.4 512.2L1153.1 507.9L1145.5 501.3L1137.7 495.0L1130.1 489.9L1122.3 485.1L1115.3 481.2L1109.0 478.5L1103.6 476.7L1099.8 475.2L1098.1 473.5L1098.1 472.1Z" fill="#3c3b37"/>
<path d="M531.1 548.7L532.9 550.2L532.9 572.2L531.1 570.7ZM912.1 473.0L916.1 476.6L916.1 498.6L912.1 495.0ZM1122.2 391.2L1124.9 392.1L1124.9 414.1L1122.2 413.2ZM1125.6 407.6L1132.0 410.8L1132.0 432.8L1125.6 429.6ZM1132.0 410.8L1141.1 413.6L1141.1 435.6L1132.0 432.8ZM1141.1 413.6L1151.1 417.6L1151.1 439.6L1141.1 435.6ZM1151.1 417.6L1161.8 422.2L1161.8 444.2L1151.1 439.6ZM1161.8 422.2L1172.5 427.4L1172.5 449.4L1161.8 444.2ZM1172.5 427.4L1182.5 433.4L1182.5 455.4L1172.5 449.4ZM1182.5 433.4L1190.9 441.0L1190.9 463.0L1182.5 455.4ZM1190.9 441.0L1198.0 448.9L1198.0 470.9L1190.9 463.0ZM1013.4 597.2L1021.6 606.4L1021.6 628.4L1013.4 619.2ZM895.0 769.7L903.6 772.3L903.6 794.3L895.0 791.7ZM886.8 766.5L895.0 769.7L895.0 791.7L886.8 788.5ZM877.8 761.9L886.8 766.5L886.8 788.5L877.8 783.9ZM865.5 754.5L877.8 761.9L877.8 783.9L865.5 776.5ZM853.7 746.4L865.5 754.5L865.5 776.5L853.7 768.4ZM846.0 739.4L853.7 746.4L853.7 768.4L846.0 761.4ZM839.9 732.6L846.0 739.4L846.0 761.4L839.9 754.6ZM833.3 725.8L839.9 732.6L839.9 754.6L833.3 747.8ZM806.3 697.3L822.7 703.3L822.7 725.3L806.3 719.3ZM765.8 698.2L769.8 700.0L769.8 722.0L765.8 720.2ZM761.3 681.7L768.4 686.8L768.4 708.8L761.3 703.7ZM761.3 681.7L768.4 686.8L768.4 708.8L761.3 703.7ZM704.8 640.5L761.3 681.7L761.3 703.7L704.8 662.5ZM648.3 599.3L704.8 640.5L704.8 662.5L648.3 621.3ZM641.3 594.2L648.3 599.3L648.3 621.3L641.3 616.2ZM641.3 594.2L648.3 599.3L648.3 621.3L641.3 616.2ZM648.3 599.3L648.8 599.6L648.8 621.6L648.3 621.3ZM648.3 599.3L648.8 599.6L648.8 621.6L648.3 621.3ZM644.9 597.7L648.3 599.3L648.3 621.3L644.9 619.7ZM640.6 595.0L644.9 597.7L644.9 619.7L640.6 617.0ZM637.2 591.4L640.6 595.0L640.6 617.0L637.2 613.4ZM609.6 553.7L618.1 562.1L618.1 584.1L609.6 575.7ZM599.4 546.9L609.6 553.7L609.6 575.7L599.4 568.9ZM588.9 541.6L599.4 546.9L599.4 568.9L588.9 563.6ZM578.8 537.9L588.9 541.6L588.9 563.6L578.8 559.9ZM532.9 550.2L535.4 551.1L535.4 573.1L532.9 572.2ZM813.4 495.4L822.4 497.7L822.4 519.7L813.4 517.4ZM822.4 497.7L828.3 500.6L828.3 522.6L822.4 519.7ZM634.3 554.3L638.8 558.8L638.8 580.8L634.3 576.3ZM628.9 550.4L634.3 554.3L634.3 576.3L628.9 572.4ZM623.3 546.8L628.9 550.4L628.9 572.4L623.3 568.8ZM617.6 543.5L623.3 546.8L623.3 568.8L617.6 565.5ZM611.7 540.6L617.6 543.5L617.6 565.5L611.7 562.6ZM606.1 538.2L611.7 540.6L611.7 562.6L606.1 560.2ZM742.5 595.5L763.7 605.0L763.7 627.0L742.5 617.5ZM742.5 597.7L763.7 607.0L763.7 629.0L742.5 619.7ZM771.5 574.3L773.7 575.7L773.7 597.7L771.5 596.3ZM779.7 569.3L781.9 570.7L781.9 592.7L779.7 591.3ZM785.4 600.8L787.5 601.7L787.5 623.7L785.4 622.8ZM776.7 607.5L778.9 608.1L778.9 630.1L776.7 629.5ZM775.4 606.6L776.7 607.5L776.7 629.5L775.4 628.6ZM811.7 570.0L813.4 571.1L813.4 593.1L811.7 592.0ZM813.4 571.1L815.7 572.0L815.7 594.0L813.4 593.1ZM836.7 563.3L838.0 564.3L838.0 586.3L836.7 585.3ZM808.3 598.3L810.7 599.1L810.7 621.1L808.3 620.3ZM781.9 669.9L785.9 672.4L785.9 694.4L781.9 691.9ZM773.1 692.2L775.0 693.3L775.0 715.3L773.1 714.2ZM819.2 616.4L824.6 618.1L824.6 640.1L819.2 638.4ZM824.6 618.1L829.0 620.0L829.0 642.0L824.6 640.1ZM829.0 620.0L833.0 622.4L833.0 644.4L829.0 642.0ZM833.0 622.4L836.6 625.3L836.6 647.3L833.0 644.4ZM836.6 625.3L839.8 628.7L839.8 650.7L836.6 647.3ZM839.8 628.7L843.3 632.7L843.3 654.7L839.8 650.7ZM843.3 632.7L847.7 637.6L847.7 659.6L843.3 654.7ZM852.4 643.0L857.1 648.2L857.1 670.2L852.4 665.0ZM857.1 648.2L861.5 652.9L861.5 674.9L857.1 670.2ZM861.5 652.9L865.8 657.3L865.8 679.3L861.5 674.9ZM865.8 657.3L870.9 662.0L870.9 684.0L865.8 679.3ZM870.9 662.0L877.3 667.1L877.3 689.1L870.9 684.0ZM877.3 667.1L884.4 672.4L884.4 694.4L877.3 689.1ZM884.4 672.4L891.6 677.5L891.6 699.5L884.4 694.4ZM891.6 677.5L898.6 682.3L898.6 704.3L891.6 699.5ZM898.6 682.3L905.6 686.9L905.6 708.9L898.6 704.3ZM905.6 686.9L912.2 691.3L912.2 713.3L905.6 708.9ZM912.2 691.3L918.4 695.4L918.4 717.4L912.2 713.3ZM918.4 695.4L924.1 699.3L924.1 721.3L918.4 717.4ZM924.1 699.3L929.5 703.3L929.5 725.3L924.1 721.3ZM929.5 703.3L934.5 707.8L934.5 729.8L929.5 725.3ZM934.5 707.8L939.2 712.5L939.2 734.5L934.5 729.8ZM897.9 760.1L903.6 761.9L903.6 783.9L897.9 782.1ZM892.1 757.9L897.9 760.1L897.9 782.1L892.1 779.9ZM886.4 755.0L892.1 757.9L892.1 779.9L886.4 777.0ZM880.6 751.4L886.4 755.0L886.4 777.0L880.6 773.4ZM874.8 747.3L880.6 751.4L880.6 773.4L874.8 769.3ZM869.2 743.0L874.8 747.3L874.8 769.3L869.2 765.0ZM863.8 738.6L869.2 743.0L869.2 765.0L863.8 760.6ZM858.5 734.0L863.8 738.6L863.8 760.6L858.5 756.0ZM853.7 729.2L858.5 734.0L858.5 756.0L853.7 751.2ZM822.6 681.8L823.3 682.5L823.3 704.5L822.6 703.8ZM821.0 681.0L822.6 681.8L822.6 703.8L821.0 703.0ZM817.8 679.4L821.0 681.0L821.0 703.0L817.8 701.4ZM813.7 677.6L817.8 679.4L817.8 701.4L813.7 699.6ZM808.9 675.8L813.7 677.6L813.7 699.6L808.9 697.8ZM802.8 674.1L808.9 675.8L808.9 697.8L802.8 696.1ZM789.9 670.6L795.9 672.4L795.9 694.4L789.9 692.6ZM786.1 668.5L789.9 670.6L789.9 692.6L786.1 690.5ZM783.3 666.3L786.1 668.5L786.1 690.5L783.3 688.3ZM779.6 664.6L783.3 666.3L783.3 688.3L779.6 686.6ZM760.5 660.9L762.4 662.9L762.4 684.9L760.5 682.9ZM860.2 599.3L874.3 604.0L874.3 626.0L860.2 621.3ZM846.8 592.0L860.2 599.3L860.2 621.3L846.8 614.0ZM839.0 588.3L846.8 592.0L846.8 614.0L839.0 610.3ZM835.6 585.4L839.0 588.3L839.0 610.3L835.6 607.4ZM845.5 559.7L848.5 562.7L848.5 584.7L845.5 581.7ZM841.6 557.5L845.5 559.7L845.5 581.7L841.6 579.5ZM828.8 553.5L833.0 555.8L833.0 577.8L828.8 575.5ZM826.1 550.6L828.8 553.5L828.8 575.5L826.1 572.6ZM880.4 609.5L920.0 629.0L920.0 651.0L880.4 631.5ZM912.3 649.3L914.8 650.7L914.8 672.7L912.3 671.3ZM921.7 644.1L924.2 645.5L924.2 667.5L921.7 666.1ZM959.4 606.1L963.9 608.3L963.9 630.3L959.4 628.1ZM946.3 589.7L951.8 592.0L951.8 614.0L946.3 611.7ZM979.7 717.6L986.3 723.1L986.3 745.1L979.7 739.6ZM972.5 710.2L979.7 717.6L979.7 739.6L972.5 732.2ZM964.1 703.8L972.5 710.2L972.5 732.2L964.1 725.8ZM955.3 698.2L964.1 703.8L964.1 725.8L955.3 720.2ZM946.4 694.0L955.3 698.2L955.3 720.2L946.4 716.0ZM938.1 691.3L946.4 694.0L946.4 716.0L938.1 713.3ZM918.0 686.2L925.2 690.4L925.2 712.4L918.0 708.2ZM946.9 704.7L959.9 708.1L959.9 730.1L946.9 726.7ZM959.9 708.1L970.8 712.0L970.8 734.0L959.9 730.1ZM970.8 712.0L977.4 715.5L977.4 737.5L970.8 734.0ZM977.4 715.5L982.0 719.4L982.0 741.4L977.4 737.5ZM960.8 753.5L963.9 755.0L963.9 777.0L960.8 775.5ZM1041.3 438.5L1055.0 443.7L1055.0 465.7L1041.3 460.5ZM1055.0 443.7L1077.5 452.0L1077.5 474.0L1055.0 465.7ZM1077.5 452.0L1099.8 461.0L1099.8 483.0L1077.5 474.0ZM1099.8 461.0L1113.1 467.0L1113.1 489.0L1099.8 483.0ZM1113.1 467.0L1123.9 473.0L1123.9 495.0L1113.1 489.0ZM1123.9 473.0L1137.4 481.7L1137.4 503.7L1123.9 495.0ZM1137.4 481.7L1148.0 490.2L1148.0 512.2L1137.4 503.7ZM1043.1 561.0L1047.6 562.2L1047.6 584.2L1043.1 583.0ZM1002.7 562.0L1003.5 562.7L1003.5 584.7L1002.7 584.0ZM950.8 552.8L958.7 555.8L958.7 577.8L950.8 574.8ZM946.7 548.9L950.8 552.8L950.8 574.8L946.7 570.9ZM931.6 523.2L934.6 524.8L934.6 546.8L931.6 545.2ZM934.6 552.3L940.4 556.8L940.4 578.8L934.6 574.3ZM940.4 556.8L946.7 560.1L946.7 582.1L940.4 578.8ZM952.7 561.3L957.0 562.7L957.0 584.7L952.7 583.3ZM905.3 509.3L907.7 511.3L907.7 533.3L905.3 531.3ZM907.7 511.3L909.7 512.7L909.7 534.7L907.7 533.3ZM961.1 433.4L963.9 436.5L963.9 458.5L961.1 455.4ZM961.4 458.7L965.4 460.1L965.4 482.1L961.4 480.7ZM979.1 435.8L981.0 437.7L981.0 459.7L979.1 457.8ZM1165.2 435.1L1167.9 436.8L1167.9 458.8L1165.2 457.1ZM1167.9 436.8L1171.7 440.0L1171.7 462.0L1167.9 458.8ZM1171.7 440.0L1175.6 443.7L1175.6 465.7L1171.7 462.0ZM1185.9 492.8L1186.9 493.6L1186.9 515.6L1185.9 514.8ZM1173.9 448.9L1176.7 452.1L1176.7 474.1L1173.9 470.9ZM1171.0 445.8L1173.9 448.9L1173.9 470.9L1171.0 467.8ZM1168.1 442.8L1171.0 445.8L1171.0 467.8L1168.1 464.8ZM1099.8 449.8L1103.6 450.8L1103.6 472.8L1099.8 471.8ZM1103.6 450.8L1109.0 452.8L1109.0 474.8L1103.6 472.8ZM1109.0 452.8L1115.3 455.8L1115.3 477.8L1109.0 474.8ZM1115.3 455.8L1122.3 459.7L1122.3 481.7L1115.3 477.8ZM1122.3 459.7L1130.2 464.4L1130.2 486.4L1122.3 481.7ZM1130.2 464.4L1137.7 469.6L1137.7 491.6L1130.2 486.4ZM1137.7 469.6L1145.2 475.6L1145.2 497.6L1137.7 491.6ZM1145.2 475.6L1152.4 481.9L1152.4 503.9L1145.2 497.6ZM1152.4 481.9L1157.5 486.8L1157.5 508.8L1152.4 503.9ZM1158.4 490.2L1160.4 491.1L1160.4 513.1L1158.4 512.2ZM1153.1 485.9L1158.4 490.2L1158.4 512.2L1153.1 507.9ZM1145.5 479.3L1153.1 485.9L1153.1 507.9L1145.5 501.3ZM1137.7 473.0L1145.5 479.3L1145.5 501.3L1137.7 495.0ZM1130.1 467.9L1137.7 473.0L1137.7 495.0L1130.1 489.9ZM1122.3 463.1L1130.1 467.9L1130.1 489.9L1122.3 485.1ZM1115.3 459.2L1122.3 463.1L1122.3 485.1L1115.3 481.2ZM1109.0 456.5L1115.3 459.2L1115.3 481.2L1109.0 478.5ZM1103.6 454.7L1109.0 456.5L1109.0 478.5L1103.6 476.7ZM1099.8 453.2L1103.6 454.7L1103.6 476.7L1099.8 475.2ZM1098.1 451.5L1099.8 453.2L1099.8 475.2L1098.1 473.5ZM530.3 546.8L531.1 548.7L531.1 570.7L530.3 568.8ZM916.1 476.6L919.1 480.0L919.1 502.0L916.1 498.6ZM959.0 425.5L960.3 429.1L960.3 451.1L959.0 447.5ZM955.5 421.3L959.0 425.5L959.0 447.5L955.5 443.3ZM954.3 417.4L955.5 421.3L955.5 443.3L954.3 439.4ZM1109.3 393.8L1110.2 397.2L1110.2 419.2L1109.3 415.8ZM1124.9 392.1L1126.5 394.6L1126.5 416.6L1124.9 414.1ZM1125.4 400.9L1125.6 407.6L1125.6 429.6L1125.4 422.9ZM1198.0 448.9L1203.8 456.0L1203.8 478.0L1198.0 470.9ZM1203.8 456.0L1208.3 462.7L1208.3 484.7L1203.8 478.0ZM1208.3 462.7L1211.2 468.9L1211.2 490.9L1208.3 484.7ZM1211.2 468.9L1212.6 474.7L1212.6 496.7L1211.2 490.9ZM1212.6 474.7L1212.9 480.0L1212.9 502.0L1212.6 496.7ZM998.9 574.6L1000.5 579.9L1000.5 601.9L998.9 596.6ZM1000.5 579.9L1005.9 587.9L1005.9 609.9L1000.5 601.9ZM1005.9 587.9L1013.4 597.2L1013.4 619.2L1005.9 609.9ZM1021.6 606.4L1028.9 616.1L1028.9 638.1L1021.6 628.4ZM1028.9 616.1L1032.9 626.8L1032.9 648.8L1028.9 638.1ZM1032.9 626.8L1034.9 636.8L1034.9 658.8L1032.9 648.8ZM1034.9 636.8L1035.4 643.6L1035.4 665.6L1034.9 658.8ZM1014.6 711.6L1014.7 718.8L1014.7 740.8L1014.6 733.6ZM827.8 718.8L833.3 725.8L833.3 747.8L827.8 740.8ZM826.5 710.8L827.8 718.8L827.8 740.8L826.5 732.8ZM822.7 703.3L826.5 710.8L826.5 732.8L822.7 725.3ZM763.2 694.9L765.8 698.2L765.8 720.2L763.2 716.9ZM761.7 690.8L763.2 694.9L763.2 716.9L761.7 712.8ZM761.2 685.8L761.7 690.8L761.7 712.8L761.2 707.8ZM633.7 586.4L637.2 591.4L637.2 613.4L633.7 608.4ZM629.9 579.2L633.7 586.4L633.7 608.4L629.9 601.2ZM625.1 570.9L629.9 579.2L629.9 601.2L625.1 592.9ZM618.1 562.1L625.1 570.9L625.1 592.9L618.1 584.1ZM828.3 500.6L829.5 504.0L829.5 526.0L828.3 522.6ZM646.8 589.3L649.2 593.3L649.2 615.3L646.8 611.3ZM646.6 576.1L647.0 582.7L647.0 604.7L646.6 598.1ZM644.7 570.1L646.6 576.1L646.6 598.1L644.7 592.1ZM642.2 564.2L644.7 570.1L644.7 592.1L642.2 586.2ZM638.8 558.8L642.2 564.2L642.2 586.2L638.8 580.8ZM592.3 533.9L593.5 535.8L593.5 557.8L592.3 555.9ZM770.7 572.5L771.5 574.3L771.5 596.3L770.7 594.5ZM781.9 570.7L782.7 572.5L782.7 594.5L781.9 592.7ZM787.5 601.7L788.5 602.9L788.5 624.9L787.5 623.7ZM788.5 602.9L788.7 604.5L788.7 626.5L788.5 624.9ZM774.8 605.4L775.4 606.6L775.4 628.6L774.8 627.4ZM811.7 559.7L811.8 560.8L811.8 582.8L811.7 581.7ZM810.5 566.8L810.8 568.5L810.8 590.5L810.5 588.8ZM810.8 568.5L811.7 570.0L811.7 592.0L810.8 590.5ZM838.0 564.3L839.2 566.2L839.2 588.2L838.0 586.3ZM839.2 566.2L839.7 568.3L839.7 590.3L839.2 588.2ZM807.9 596.1L808.3 598.3L808.3 620.3L807.9 618.1ZM810.0 583.3L810.2 585.5L810.2 607.5L810.0 605.3ZM808.7 581.1L810.0 583.3L810.0 605.3L808.7 603.1ZM806.8 579.0L808.7 581.1L808.7 603.1L806.8 601.0ZM805.0 576.7L806.8 579.0L806.8 601.0L805.0 598.7ZM803.4 574.2L805.0 576.7L805.0 598.7L803.4 596.2ZM802.0 571.6L803.4 574.2L803.4 596.2L802.0 593.6ZM801.3 569.2L802.0 571.6L802.0 593.6L801.3 591.2ZM799.2 605.8L800.0 611.7L800.0 633.7L799.2 627.8ZM785.9 672.4L788.3 675.8L788.3 697.8L785.9 694.4ZM771.8 690.0L773.1 692.2L773.1 714.2L771.8 712.0ZM771.7 686.7L771.8 690.0L771.8 712.0L771.7 708.7ZM847.7 637.6L852.4 643.0L852.4 665.0L847.7 659.6ZM939.2 712.5L943.2 717.1L943.2 739.1L939.2 734.5ZM943.2 717.1L946.7 721.8L946.7 743.8L943.2 739.1ZM946.7 721.8L949.5 726.4L949.5 748.4L946.7 743.8ZM949.5 726.4L951.8 730.9L951.8 752.9L949.5 748.4ZM951.8 730.9L953.7 735.0L953.7 757.0L951.8 752.9ZM953.7 735.0L955.1 739.0L955.1 761.0L953.7 757.0ZM955.1 739.0L956.2 743.0L956.2 765.0L955.1 761.0ZM956.2 743.0L957.0 747.3L957.0 769.3L956.2 765.0ZM957.0 747.3L957.6 751.6L957.6 773.6L957.0 769.3ZM849.3 724.1L853.7 729.2L853.7 751.2L849.3 746.1ZM845.4 718.9L849.3 724.1L849.3 746.1L845.4 740.9ZM841.6 713.7L845.4 718.9L845.4 740.9L841.6 735.7ZM837.9 708.4L841.6 713.7L841.6 735.7L837.9 730.4ZM834.4 703.2L837.9 708.4L837.9 730.4L834.4 725.2ZM831.3 698.2L834.4 703.2L834.4 725.2L831.3 720.2ZM828.6 693.1L831.3 698.2L831.3 720.2L828.6 715.1ZM826.3 688.2L828.6 693.1L828.6 715.1L826.3 710.2ZM824.4 684.4L826.3 688.2L826.3 710.2L824.4 706.4ZM823.3 682.5L824.4 684.4L824.4 706.4L823.3 704.5ZM760.2 658.2L760.5 660.9L760.5 682.9L760.2 680.2ZM886.2 530.9L886.9 536.8L886.9 558.8L886.2 552.9ZM886.9 536.8L888.7 542.9L888.7 564.9L886.9 558.8ZM888.7 542.9L890.7 548.9L890.7 570.9L888.7 564.9ZM890.7 548.9L892.3 554.9L892.3 576.9L890.7 570.9ZM892.3 554.9L893.3 561.0L893.3 583.0L892.3 576.9ZM892.4 573.0L893.0 581.5L893.0 603.5L892.4 595.0ZM848.5 562.7L849.7 566.8L849.7 588.8L848.5 584.7ZM940.7 591.1L946.7 603.1L946.7 625.1L940.7 613.1ZM946.7 603.1L947.5 610.9L947.5 632.9L946.7 625.1ZM911.4 647.4L912.3 649.3L912.3 671.3L911.4 669.4ZM924.2 645.5L925.2 647.4L925.2 669.4L924.2 667.5ZM956.2 600.6L959.4 606.1L959.4 628.1L956.2 622.6ZM954.4 596.0L956.2 600.6L956.2 622.6L954.4 618.0ZM951.8 592.0L954.4 596.0L954.4 618.0L951.8 614.0ZM1006.6 595.0L1012.1 601.7L1012.1 623.7L1006.6 617.0ZM1012.1 601.7L1016.2 608.9L1016.2 630.9L1012.1 623.7ZM1016.2 608.9L1019.0 617.2L1019.0 639.2L1016.2 630.9ZM1019.0 617.2L1021.4 625.4L1021.4 647.4L1019.0 639.2ZM1021.4 625.4L1022.5 634.4L1022.5 656.4L1021.4 647.4ZM914.3 680.6L918.0 686.2L918.0 708.2L914.3 702.6ZM982.0 719.4L984.6 724.0L984.6 746.0L982.0 741.4ZM984.6 724.0L985.2 730.1L985.2 752.1L984.6 746.0ZM958.8 749.5L960.8 753.5L960.8 775.5L958.8 771.5ZM957.0 744.7L958.8 749.5L958.8 771.5L957.0 766.7ZM955.3 739.3L957.0 744.7L957.0 766.7L955.3 761.3ZM953.8 733.2L955.3 739.3L955.3 761.3L953.8 755.2ZM951.8 727.5L953.8 733.2L953.8 755.2L951.8 749.5ZM949.1 722.5L951.8 727.5L951.8 749.5L949.1 744.5ZM946.0 717.9L949.1 722.5L949.1 744.5L946.0 739.9ZM943.2 713.7L946.0 717.9L946.0 739.9L943.2 735.7ZM939.9 709.3L943.2 713.7L943.2 735.7L939.9 731.3ZM936.9 705.3L939.9 709.3L939.9 731.3L936.9 727.3ZM1148.0 490.2L1150.7 495.8L1150.7 517.8L1148.0 512.2ZM941.8 543.2L946.7 548.9L946.7 570.9L941.8 565.2ZM938.1 536.8L941.8 543.2L941.8 565.2L938.1 558.8ZM936.2 530.1L938.1 536.8L938.1 558.8L936.2 552.1ZM934.6 524.8L936.2 530.1L936.2 552.1L934.6 546.8ZM925.2 529.9L925.8 534.7L925.8 556.7L925.2 551.9ZM925.8 534.7L927.7 540.3L927.7 562.3L925.8 556.7ZM927.7 540.3L930.6 546.5L930.6 568.5L927.7 562.3ZM930.6 546.5L934.6 552.3L934.6 574.3L930.6 568.5ZM957.0 562.7L957.8 566.9L957.8 588.9L957.0 584.7ZM907.3 563.6L907.9 569.6L907.9 591.6L907.3 585.6ZM905.3 557.5L907.3 563.6L907.3 585.6L905.3 579.5ZM902.3 551.6L905.3 557.5L905.3 579.5L902.3 573.6ZM899.3 545.4L902.3 551.6L902.3 573.6L899.3 567.4ZM897.9 538.7L899.3 545.4L899.3 567.4L897.9 560.7ZM897.6 531.7L897.9 538.7L897.9 560.7L897.6 553.7ZM922.9 473.3L924.1 476.5L924.1 498.5L922.9 495.3ZM921.5 469.6L922.9 473.3L922.9 495.3L921.5 491.6ZM963.9 436.5L965.4 440.3L965.4 462.3L963.9 458.5ZM965.4 440.3L965.9 442.2L965.9 464.2L965.4 462.3ZM959.4 455.8L961.4 458.7L961.4 480.7L959.4 477.8ZM978.4 433.4L979.1 435.8L979.1 457.8L978.4 455.4ZM1175.6 443.7L1179.1 447.9L1179.1 469.9L1175.6 465.7ZM1179.1 447.9L1182.7 452.7L1182.7 474.7L1179.1 469.9ZM1182.7 452.7L1185.9 457.5L1185.9 479.5L1182.7 474.7ZM1185.9 457.5L1188.9 462.2L1188.9 484.2L1185.9 479.5ZM1188.9 462.2L1191.6 466.8L1191.6 488.8L1188.9 484.2ZM1191.6 466.8L1193.7 471.3L1193.7 493.3L1191.6 488.8ZM1193.7 471.3L1195.2 475.6L1195.2 497.6L1193.7 493.3ZM1195.2 475.6L1196.1 479.6L1196.1 501.6L1195.2 497.6ZM1196.1 479.6L1196.2 483.3L1196.2 505.3L1196.1 501.6ZM1190.6 475.4L1191.2 479.5L1191.2 501.5L1190.6 497.4ZM1189.4 471.3L1190.6 475.4L1190.6 497.4L1189.4 493.3ZM1187.5 467.2L1189.4 471.3L1189.4 493.3L1187.5 489.2ZM1185.1 463.1L1187.5 467.2L1187.5 489.2L1185.1 485.1ZM1182.5 459.2L1185.1 463.1L1185.1 485.1L1182.5 481.2ZM1179.7 455.6L1182.5 459.2L1182.5 481.2L1179.7 477.6ZM1176.7 452.1L1179.7 455.6L1179.7 477.6L1176.7 474.1ZM1166.1 440.3L1168.1 442.8L1168.1 464.8L1166.1 462.3ZM1164.9 437.8L1166.1 440.3L1166.1 462.3L1164.9 459.8ZM1164.4 435.7L1164.9 437.8L1164.9 459.8L1164.4 457.7ZM1157.5 486.8L1160.0 489.7L1160.0 511.7L1157.5 508.8ZM1160.0 489.7L1160.4 491.1L1160.4 513.1L1160.0 511.7ZM530.3 546.8L530.9 544.8L530.9 566.8L530.3 568.8ZM915.3 485.0L919.1 480.0L919.1 502.0L915.3 507.0ZM912.0 468.3L913.8 462.7L913.8 484.7L912.0 490.3ZM913.8 462.7L916.8 455.8L916.8 477.8L913.8 484.7ZM916.8 455.8L920.7 448.9L920.7 470.9L916.8 477.8ZM920.7 448.9L924.5 443.3L924.5 465.3L920.7 470.9ZM954.3 413.6L955.5 410.5L955.5 432.5L954.3 435.6ZM1109.3 399.8L1110.2 397.2L1110.2 419.2L1109.3 421.8ZM1125.4 400.9L1126.5 394.6L1126.5 416.6L1125.4 422.9ZM1211.7 485.1L1212.9 480.0L1212.9 502.0L1211.7 507.1ZM1209.0 490.4L1211.7 485.1L1211.7 507.1L1209.0 512.4ZM1204.9 495.4L1209.0 490.4L1209.0 512.4L1204.9 517.4ZM1129.7 532.9L1130.8 529.8L1130.8 551.8L1129.7 554.9ZM1129.1 535.0L1129.7 532.9L1129.7 554.9L1129.1 557.0ZM998.9 574.6L1001.3 571.3L1001.3 593.3L998.9 596.6ZM1034.1 650.6L1035.4 643.6L1035.4 665.6L1034.1 672.6ZM1030.3 660.8L1034.1 650.6L1034.1 672.6L1030.3 682.8ZM1025.4 673.0L1030.3 660.8L1030.3 682.8L1025.4 695.0ZM1019.8 688.0L1025.4 673.0L1025.4 695.0L1019.8 710.0ZM1015.1 702.2L1019.8 688.0L1019.8 710.0L1015.1 724.2ZM1014.6 711.6L1015.1 702.2L1015.1 724.2L1014.6 733.6ZM1012.3 724.9L1014.7 718.8L1014.7 740.8L1012.3 746.9ZM1008.7 730.9L1012.3 724.9L1012.3 746.9L1008.7 752.9ZM1004.0 738.6L1008.7 730.9L1008.7 752.9L1004.0 760.6ZM998.4 746.4L1004.0 738.6L1004.0 760.6L998.4 768.4ZM784.8 699.0L786.0 695.8L786.0 717.8L784.8 721.0ZM761.2 685.8L761.3 681.7L761.3 703.7L761.2 707.8ZM827.7 507.9L829.5 504.0L829.5 526.0L827.7 529.9ZM824.9 512.3L827.7 507.9L827.7 529.9L824.9 534.3ZM821.7 517.8L824.9 512.3L824.9 534.3L821.7 539.8ZM817.5 523.9L821.7 517.8L821.7 539.8L817.5 545.9ZM812.8 529.6L817.5 523.9L817.5 545.9L812.8 551.6ZM646.8 589.3L647.0 582.7L647.0 604.7L646.8 611.3ZM781.9 574.3L782.7 572.5L782.7 594.5L781.9 596.3ZM770.7 572.5L771.5 570.7L771.5 592.7L770.7 594.5ZM775.0 604.2L776.1 602.7L776.1 624.7L775.0 626.2ZM788.3 605.8L788.7 604.5L788.7 626.5L788.3 627.8ZM787.4 606.9L788.3 605.8L788.3 627.8L787.4 628.9ZM774.8 605.4L775.0 604.2L775.0 626.2L774.8 627.4ZM801.3 569.2L801.6 567.0L801.6 589.0L801.3 591.2ZM801.6 567.0L802.6 565.1L802.6 587.1L801.6 589.0ZM811.0 562.9L811.8 560.8L811.8 582.8L811.0 584.9ZM810.5 565.0L811.0 562.9L811.0 584.9L810.5 587.0ZM829.2 570.2L830.4 568.4L830.4 590.4L829.2 592.2ZM830.4 568.4L831.7 566.7L831.7 588.7L830.4 590.4ZM839.3 570.5L839.7 568.3L839.7 590.3L839.3 592.5ZM838.3 572.9L839.3 570.5L839.3 592.5L838.3 594.9ZM836.7 575.0L838.3 572.9L838.3 594.9L836.7 597.0ZM822.5 585.0L824.2 582.8L824.2 604.8L822.5 607.0ZM820.9 587.7L822.5 585.0L822.5 607.0L820.9 609.7ZM819.5 590.7L820.9 587.7L820.9 609.7L819.5 612.7ZM818.3 593.3L819.5 590.7L819.5 612.7L818.3 615.3ZM817.8 595.4L818.3 593.3L818.3 615.3L817.8 617.4ZM817.6 597.2L817.8 595.4L817.8 617.4L817.6 619.2ZM816.7 598.3L817.6 597.2L817.6 619.2L816.7 620.3ZM807.9 596.1L808.5 593.0L808.5 615.0L807.9 618.1ZM808.5 593.0L809.2 590.0L809.2 612.0L808.5 615.0ZM809.2 590.0L809.7 587.7L809.7 609.7L809.2 612.0ZM809.7 587.7L810.2 585.5L810.2 607.5L809.7 609.7ZM771.7 686.7L773.0 681.0L773.0 703.0L771.7 708.7ZM773.0 681.0L775.5 674.3L775.5 696.3L773.0 703.0ZM775.5 674.3L778.3 670.0L778.3 692.0L775.5 696.3ZM788.2 680.6L788.3 675.8L788.3 697.8L788.2 702.6ZM786.5 686.4L788.2 680.6L788.2 702.6L786.5 708.4ZM784.2 690.8L786.5 686.4L786.5 708.4L784.2 712.8ZM772.7 618.9L774.2 616.8L774.2 638.8L772.7 640.9ZM774.2 616.8L775.3 615.3L775.3 637.3L774.2 638.8ZM957.4 755.0L957.6 751.6L957.6 773.6L957.4 777.0ZM956.3 757.1L957.4 755.0L957.4 777.0L956.3 779.1ZM760.2 658.2L760.3 655.1L760.3 677.1L760.2 680.2ZM760.3 655.1L760.4 651.5L760.4 673.5L760.3 677.1ZM760.4 651.5L760.9 647.4L760.9 669.4L760.4 673.5ZM760.9 647.4L761.5 643.1L761.5 665.1L760.9 669.4ZM761.5 643.1L762.1 638.5L762.1 660.5L761.5 665.1ZM762.1 638.5L762.8 633.7L762.8 655.7L762.1 660.5ZM762.8 633.7L764.1 629.3L764.1 651.3L762.8 655.7ZM764.1 629.3L766.7 625.4L766.7 647.4L764.1 651.3ZM894.2 504.5L895.9 500.3L895.9 522.3L894.2 526.5ZM889.8 511.0L894.2 504.5L894.2 526.5L889.8 533.0ZM887.7 517.8L889.8 511.0L889.8 533.0L887.7 539.8ZM886.4 524.8L887.7 517.8L887.7 539.8L886.4 546.8ZM886.2 530.9L886.4 524.8L886.4 546.8L886.2 552.9ZM893.1 566.7L893.3 561.0L893.3 583.0L893.1 588.7ZM892.4 573.0L893.1 566.7L893.1 588.7L892.4 595.0ZM891.6 590.2L893.0 581.5L893.0 603.5L891.6 612.2ZM884.6 599.0L891.6 590.2L891.6 612.2L884.6 621.0ZM843.3 579.9L846.9 575.8L846.9 597.8L843.3 601.9ZM846.9 575.8L849.4 571.3L849.4 593.3L846.9 597.8ZM849.4 571.3L849.7 566.8L849.7 588.8L849.4 593.3ZM826.1 550.6L827.8 547.4L827.8 569.4L826.1 572.6ZM828.9 544.8L830.4 542.3L830.4 564.3L828.9 566.8ZM924.2 649.3L925.2 647.4L925.2 669.4L924.2 671.3ZM911.4 647.4L912.3 645.5L912.3 667.5L911.4 669.4ZM986.8 579.0L988.9 571.3L988.9 593.3L986.8 601.0ZM977.7 590.2L986.8 579.0L986.8 601.0L977.7 612.2ZM970.6 600.9L977.7 590.2L977.7 612.2L970.6 622.9ZM946.7 651.7L947.3 646.1L947.3 668.1L946.7 673.7ZM947.3 646.1L948.4 640.5L948.4 662.5L947.3 668.1ZM1021.5 645.1L1022.5 634.4L1022.5 656.4L1021.5 667.1ZM1019.0 656.8L1021.5 645.1L1021.5 667.1L1019.0 678.8ZM1015.0 670.0L1019.0 656.8L1019.0 678.8L1015.0 692.0ZM1010.4 682.7L1015.0 670.0L1015.0 692.0L1010.4 704.7ZM1005.7 692.6L1010.4 682.7L1010.4 704.7L1005.7 714.6ZM1001.8 701.6L1005.7 692.6L1005.7 714.6L1001.8 723.6ZM1000.8 712.1L1001.8 701.6L1001.8 723.6L1000.8 734.1ZM999.2 720.6L1000.8 712.1L1000.8 734.1L999.2 742.6ZM983.9 736.9L985.2 730.1L985.2 752.1L983.9 758.9ZM981.1 743.0L983.9 736.9L983.9 758.9L981.1 765.0ZM936.9 705.3L938.1 703.3L938.1 725.3L936.9 727.3ZM1148.9 500.6L1150.7 495.8L1150.7 517.8L1148.9 522.6ZM925.2 529.9L926.3 526.2L926.3 548.2L925.2 551.9ZM955.3 571.3L957.8 566.9L957.8 588.9L955.3 593.3ZM903.6 579.9L905.2 575.6L905.2 597.6L903.6 601.9ZM905.2 575.6L907.9 569.6L907.9 591.6L905.2 597.6ZM897.6 531.7L898.5 524.5L898.5 546.5L897.6 553.7ZM898.5 524.5L900.2 517.9L900.2 539.9L898.5 546.5ZM900.2 517.9L902.7 512.5L902.7 534.5L900.2 539.9ZM902.7 512.5L905.3 509.3L905.3 531.3L902.7 534.5ZM909.7 512.7L910.7 507.0L910.7 529.0L909.7 534.7ZM910.7 507.0L912.2 498.9L912.2 520.9L910.7 529.0ZM912.2 498.9L916.5 490.8L916.5 512.8L912.2 520.9ZM916.5 490.8L920.8 483.4L920.8 505.4L916.5 512.8ZM920.8 483.4L923.2 479.4L923.2 501.4L920.8 505.4ZM923.2 479.4L924.1 476.5L924.1 498.5L923.2 501.4ZM921.5 469.6L922.2 463.7L922.2 485.7L921.5 491.6ZM922.2 463.7L924.1 457.5L924.1 479.5L922.2 485.7ZM924.1 457.5L927.2 452.1L927.2 474.1L924.1 479.5ZM927.2 452.1L931.0 447.2L931.0 469.2L927.2 474.1ZM965.1 444.6L965.9 442.2L965.9 464.2L965.1 466.6ZM961.9 450.2L965.1 444.6L965.1 466.6L961.9 472.2ZM959.4 455.8L961.9 450.2L961.9 472.2L959.4 477.8ZM1018.3 436.6L1018.8 435.1L1018.8 457.1L1018.3 458.6ZM1195.1 486.8L1196.2 483.3L1196.2 505.3L1195.1 508.8ZM1193.1 489.8L1195.1 486.8L1195.1 508.8L1193.1 511.8ZM1185.9 492.8L1187.1 490.5L1187.1 512.5L1185.9 514.8ZM1187.1 490.5L1189.5 487.1L1189.5 509.1L1187.1 512.5ZM1189.5 487.1L1191.1 483.3L1191.1 505.3L1189.5 509.1ZM1191.1 483.3L1191.2 479.5L1191.2 501.5L1191.1 505.3ZM530.9 544.8L532.9 542.5L532.9 564.5L530.9 566.8ZM532.9 542.5L537.1 539.5L537.1 561.5L532.9 564.5ZM537.1 539.5L542.4 536.5L542.4 558.5L537.1 561.5ZM542.4 536.5L548.5 533.7L548.5 555.7L542.4 558.5ZM548.5 533.7L554.4 531.3L554.4 553.3L548.5 555.7ZM554.4 531.3L558.9 529.3L558.9 551.3L554.4 553.3ZM558.9 529.3L563.1 527.8L563.1 549.8L558.9 551.3ZM583.7 525.8L591.5 522.4L591.5 544.4L583.7 547.8ZM591.5 522.4L602.7 517.5L602.7 539.5L591.5 544.4ZM602.7 517.5L619.6 511.0L619.6 533.0L602.7 539.5ZM619.6 511.0L640.6 503.7L640.6 525.7L619.6 533.0ZM640.6 503.7L666.6 495.9L666.6 517.9L640.6 525.7ZM666.6 495.9L692.2 489.1L692.2 511.1L666.6 517.9ZM902.3 491.6L908.8 489.5L908.8 511.5L902.3 513.6ZM908.8 489.5L915.3 485.0L915.3 507.0L908.8 511.5ZM924.5 443.3L929.3 438.6L929.3 460.6L924.5 465.3ZM929.3 438.6L935.6 434.6L935.6 456.6L929.3 460.6ZM935.6 434.6L943.1 431.7L943.1 453.7L935.6 456.6ZM955.5 410.5L958.6 407.6L958.6 429.6L955.5 432.5ZM958.6 407.6L964.6 404.0L964.6 426.0L958.6 429.6ZM964.6 404.0L972.3 400.7L972.3 422.7L964.6 426.0ZM972.3 400.7L979.9 398.0L979.9 420.0L972.3 422.7ZM1109.3 393.8L1110.9 392.1L1110.9 414.1L1109.3 415.8ZM1110.9 392.1L1113.6 391.2L1113.6 413.2L1110.9 414.1ZM1199.5 499.6L1204.9 495.4L1204.9 517.4L1199.5 521.6ZM1192.8 503.1L1199.5 499.6L1199.5 521.6L1192.8 525.1ZM1184.2 505.7L1192.8 503.1L1192.8 525.1L1184.2 527.7ZM1156.1 511.4L1163.5 508.3L1163.5 530.3L1156.1 533.4ZM1148.0 516.1L1156.1 511.4L1156.1 533.4L1148.0 538.1ZM1138.5 523.1L1148.0 516.1L1148.0 538.1L1138.5 545.1ZM1130.8 529.8L1138.5 523.1L1138.5 545.1L1130.8 551.8ZM1124.4 537.7L1129.1 535.0L1129.1 557.0L1124.4 559.7ZM1115.3 541.9L1124.4 537.7L1124.4 559.7L1115.3 563.9ZM1097.6 550.6L1115.3 541.9L1115.3 563.9L1097.6 572.6ZM1077.4 559.1L1097.6 550.6L1097.6 572.6L1077.4 581.1ZM1030.7 568.6L1043.0 565.2L1043.0 587.2L1030.7 590.6ZM1020.3 571.3L1030.7 568.6L1030.7 590.6L1020.3 593.3ZM992.6 752.8L998.4 746.4L998.4 768.4L992.6 774.8ZM984.6 758.5L992.6 752.8L992.6 774.8L984.6 780.5ZM970.7 764.1L984.6 758.5L984.6 780.5L970.7 786.1ZM955.3 768.8L970.7 764.1L970.7 786.1L955.3 790.8ZM786.0 695.8L789.9 693.9L789.9 715.9L786.0 717.8ZM779.8 700.4L784.8 699.0L784.8 721.0L779.8 722.4ZM559.6 539.9L564.2 537.2L564.2 559.2L559.6 561.9ZM554.4 543.8L559.6 539.9L559.6 561.9L554.4 565.8ZM549.3 547.6L554.4 543.8L554.4 565.8L549.3 569.6ZM543.8 549.9L549.3 547.6L549.3 569.6L543.8 571.9ZM592.3 533.9L598.0 530.5L598.0 552.5L592.3 555.9ZM598.0 530.5L608.5 526.2L608.5 548.2L598.0 552.5ZM608.5 526.2L623.3 521.0L623.3 543.0L608.5 548.2ZM623.3 521.0L644.1 514.0L644.1 536.0L623.3 543.0ZM644.1 514.0L669.1 506.0L669.1 528.0L644.1 536.0ZM669.1 506.0L692.2 499.4L692.2 521.4L669.1 528.0ZM807.4 534.5L812.8 529.6L812.8 551.6L807.4 556.5ZM801.5 539.1L807.4 534.5L807.4 556.5L801.5 561.1ZM795.6 543.3L801.5 539.1L801.5 561.1L795.6 565.3ZM790.5 547.0L795.6 543.3L795.6 565.3L790.5 569.0ZM785.4 550.2L790.5 547.0L790.5 569.0L785.4 572.2ZM778.4 553.7L785.4 550.2L785.4 572.2L778.4 575.7ZM768.1 557.6L778.4 553.7L778.4 575.7L768.1 579.6ZM756.0 561.8L768.1 557.6L768.1 579.6L756.0 583.8ZM743.9 565.7L756.0 561.8L756.0 583.8L743.9 587.7ZM732.4 569.3L743.9 565.7L743.9 587.7L732.4 591.3ZM720.9 572.7L732.4 569.3L732.4 591.3L720.9 594.7ZM709.5 576.1L720.9 572.7L720.9 594.7L709.5 598.1ZM697.7 579.6L709.5 576.1L709.5 598.1L697.7 601.6ZM685.9 583.2L697.7 579.6L697.7 601.6L685.9 605.2ZM675.0 586.4L685.9 583.2L685.9 605.2L675.0 608.4ZM664.9 589.8L675.0 586.4L675.0 608.4L664.9 611.8ZM655.7 592.9L664.9 589.8L664.9 611.8L655.7 614.9ZM695.8 620.0L742.5 595.5L742.5 617.5L695.8 642.0ZM695.8 622.2L742.5 597.7L742.5 619.7L695.8 644.2ZM779.7 575.7L781.9 574.3L781.9 596.3L779.7 597.7ZM771.5 570.7L773.7 569.3L773.7 591.3L771.5 592.7ZM776.1 602.7L777.9 601.2L777.9 623.2L776.1 624.7ZM777.9 601.2L780.0 600.3L780.0 622.3L777.9 623.2ZM786.0 607.8L787.4 606.9L787.4 628.9L786.0 629.8ZM784.2 608.3L786.0 607.8L786.0 629.8L784.2 630.3ZM802.6 565.1L804.2 563.3L804.2 585.3L802.6 587.1ZM804.2 563.3L806.6 561.6L806.6 583.6L804.2 585.3ZM806.6 561.6L809.6 560.1L809.6 582.1L806.6 583.6ZM827.5 571.7L829.2 570.2L829.2 592.2L827.5 593.7ZM831.7 566.7L833.3 565.1L833.3 587.1L831.7 588.7ZM833.3 565.1L835.1 563.8L835.1 585.8L833.3 587.1ZM835.1 563.8L836.7 563.3L836.7 585.3L835.1 585.8ZM834.2 576.5L836.7 575.0L836.7 597.0L834.2 598.5ZM831.1 577.7L834.2 576.5L834.2 598.5L831.1 599.7ZM828.3 579.2L831.1 577.7L831.1 599.7L828.3 601.2ZM826.1 580.9L828.3 579.2L828.3 601.2L826.1 602.9ZM824.2 582.8L826.1 580.9L826.1 602.9L824.2 604.8ZM814.0 599.0L816.7 598.3L816.7 620.3L814.0 621.0ZM799.2 605.8L805.0 604.2L805.0 626.2L799.2 627.8ZM814.2 613.3L818.3 610.0L818.3 632.0L814.2 635.3ZM781.3 692.9L784.2 690.8L784.2 712.8L781.3 714.9ZM775.3 615.3L777.9 614.1L777.9 636.1L775.3 637.3ZM954.5 758.2L956.3 757.1L956.3 779.1L954.5 780.2ZM951.8 759.3L954.5 758.2L954.5 780.2L951.8 781.3ZM948.0 760.6L951.8 759.3L951.8 781.3L948.0 782.6ZM766.7 625.4L769.9 621.9L769.9 643.9L766.7 647.4ZM769.9 621.9L772.7 618.9L772.7 640.9L769.9 643.9ZM830.4 542.3L843.4 528.8L843.4 550.8L830.4 564.3ZM843.4 528.8L858.8 514.4L858.8 536.4L843.4 550.8ZM858.8 514.4L869.0 508.7L869.0 530.7L858.8 536.4ZM869.0 508.7L877.8 505.8L877.8 527.8L869.0 530.7ZM877.8 505.8L888.4 501.9L888.4 523.9L877.8 527.8ZM874.3 604.0L884.6 599.0L884.6 621.0L874.3 626.0ZM835.6 585.4L838.4 582.8L838.4 604.8L835.6 607.4ZM838.4 582.8L843.3 579.9L843.3 601.9L838.4 604.8ZM827.8 547.4L830.4 544.6L830.4 566.6L827.8 569.4ZM880.4 609.5L902.8 590.2L902.8 612.2L880.4 631.5ZM920.0 629.0L947.5 610.9L947.5 632.9L920.0 651.0ZM921.7 650.7L924.2 649.3L924.2 671.3L921.7 672.7ZM912.3 645.5L914.8 644.1L914.8 666.1L912.3 667.5ZM946.7 581.6L970.6 574.8L970.6 596.8L946.7 603.6ZM963.9 608.3L970.6 600.9L970.6 622.9L963.9 630.3ZM914.3 680.6L920.1 674.7L920.1 696.7L914.3 702.6ZM920.1 674.7L929.5 668.0L929.5 690.0L920.1 696.7ZM929.5 668.0L938.9 659.8L938.9 681.8L929.5 690.0ZM938.9 659.8L946.7 651.7L946.7 673.7L938.9 681.8ZM948.4 640.5L957.0 633.5L957.0 655.5L948.4 662.5ZM957.0 633.5L969.1 624.1L969.1 646.1L957.0 655.5ZM969.1 624.1L984.1 607.5L984.1 629.5L969.1 646.1ZM984.1 607.5L998.4 594.0L998.4 616.0L984.1 629.5ZM993.5 723.8L999.2 720.6L999.2 742.6L993.5 745.8ZM976.0 748.3L981.1 743.0L981.1 765.0L976.0 770.3ZM969.4 752.9L976.0 748.3L976.0 770.3L969.4 774.9ZM963.9 755.0L969.4 752.9L969.4 774.9L963.9 777.0ZM975.8 459.2L984.7 454.8L984.7 476.8L975.8 481.2ZM984.7 454.8L996.5 448.9L996.5 470.9L984.7 476.8ZM996.5 448.9L1012.5 441.8L1012.5 463.8L996.5 470.9ZM1012.5 441.8L1029.2 436.8L1029.2 458.8L1012.5 463.8ZM1144.2 505.8L1148.9 500.6L1148.9 522.6L1144.2 527.8ZM1137.7 510.9L1144.2 505.8L1144.2 527.8L1137.7 532.9ZM1130.8 515.1L1137.7 510.9L1137.7 532.9L1130.8 537.1ZM1123.9 519.5L1130.8 515.1L1130.8 537.1L1123.9 541.5ZM1117.8 525.4L1123.9 519.5L1123.9 541.5L1117.8 547.4ZM1111.8 531.6L1117.8 525.4L1117.8 547.4L1111.8 553.6ZM1106.6 537.3L1111.8 531.6L1111.8 553.6L1106.6 559.3ZM1099.8 542.8L1106.6 537.3L1106.6 559.3L1099.8 564.8ZM1088.5 547.6L1099.8 542.8L1099.8 564.8L1088.5 569.6ZM1075.7 552.2L1088.5 547.6L1088.5 569.6L1075.7 574.2ZM1062.6 558.1L1075.7 552.2L1075.7 574.2L1062.6 580.1ZM1051.6 562.6L1062.6 558.1L1062.6 580.1L1051.6 584.6ZM926.3 526.2L928.6 523.9L928.6 545.9L926.3 548.2ZM948.9 573.8L955.3 571.3L955.3 593.3L948.9 595.8ZM931.0 447.2L935.0 442.9L935.0 464.9L931.0 469.2ZM935.0 442.9L939.6 439.4L939.6 461.4L935.0 464.9ZM939.6 439.4L945.6 436.9L945.6 458.9L939.6 461.4ZM945.6 436.9L951.7 435.1L951.7 457.1L945.6 458.9ZM951.7 435.1L956.9 433.6L956.9 455.6L951.7 457.1ZM1014.8 438.3L1018.3 436.6L1018.3 458.6L1014.8 460.3ZM978.4 433.4L980.1 431.7L980.1 453.7L978.4 455.4ZM1191.1 492.0L1193.1 489.8L1193.1 511.8L1191.1 514.0ZM1189.0 493.2L1191.1 492.0L1191.1 514.0L1189.0 515.2ZM1164.4 435.7L1165.2 435.1L1165.2 457.1L1164.4 457.7ZM563.1 527.8L568.1 527.3L568.1 549.3L563.1 549.8ZM568.1 527.3L573.4 527.0L573.4 549.0L568.1 549.3ZM573.4 527.0L578.0 526.8L578.0 548.8L573.4 549.0ZM578.0 526.8L583.7 525.8L583.7 547.8L578.0 548.8ZM692.2 489.1L711.1 485.3L711.1 507.3L692.2 511.1ZM711.1 485.3L726.7 483.1L726.7 505.1L711.1 507.3ZM726.7 483.1L740.1 481.3L740.1 503.3L726.7 505.1ZM740.1 481.3L752.5 480.5L752.5 502.5L740.1 503.3ZM752.5 480.5L765.8 480.5L765.8 502.5L752.5 502.5ZM765.8 480.5L778.4 481.3L778.4 503.3L765.8 502.5ZM778.4 481.3L788.4 482.9L788.4 504.9L778.4 503.3ZM788.4 482.9L799.0 485.1L799.0 507.1L788.4 504.9ZM799.0 485.1L813.9 487.8L813.9 509.8L799.0 507.1ZM813.9 487.8L830.0 490.8L830.0 512.8L813.9 509.8ZM830.0 490.8L846.2 494.4L846.2 516.4L830.0 512.8ZM846.2 494.4L860.6 497.2L860.6 519.2L846.2 516.4ZM860.6 497.2L870.0 497.4L870.0 519.4L860.6 519.2ZM870.0 497.4L877.8 496.4L877.8 518.4L870.0 519.4ZM877.8 496.4L886.6 494.8L886.6 516.8L877.8 518.4ZM886.6 494.8L895.0 492.9L895.0 514.9L886.6 516.8ZM895.0 492.9L902.3 491.6L902.3 513.6L895.0 514.9ZM943.1 431.7L952.8 430.4L952.8 452.4L943.1 453.7ZM952.8 430.4L960.3 429.1L960.3 451.1L952.8 452.4ZM979.9 398.0L989.6 395.8L989.6 417.8L979.9 420.0ZM989.6 395.8L1004.0 394.1L1004.0 416.1L989.6 417.8ZM1004.0 394.1L1020.6 392.9L1020.6 414.9L1004.0 416.1ZM1020.6 392.9L1037.6 392.5L1037.6 414.5L1020.6 414.9ZM1037.6 392.5L1055.0 392.9L1055.0 414.9L1037.6 414.5ZM1055.0 392.9L1073.2 394.4L1073.2 416.4L1055.0 414.9ZM1073.2 394.4L1089.5 396.4L1089.5 418.4L1073.2 416.4ZM1089.5 396.4L1101.5 398.7L1101.5 420.7L1089.5 418.4ZM1101.5 398.7L1109.3 399.8L1109.3 421.8L1101.5 420.7ZM1113.6 391.2L1117.9 390.8L1117.9 412.8L1113.6 413.2ZM1117.9 390.8L1122.2 391.2L1122.2 413.2L1117.9 412.8ZM1175.6 507.5L1184.2 505.7L1184.2 527.7L1175.6 529.5ZM1169.4 507.7L1175.6 507.5L1175.6 529.5L1169.4 529.7ZM1163.5 508.3L1169.4 507.7L1169.4 529.7L1163.5 530.3ZM1059.2 562.8L1077.4 559.1L1077.4 581.1L1059.2 584.8ZM1043.0 565.2L1059.2 562.8L1059.2 584.8L1043.0 587.2ZM1009.4 571.2L1020.3 571.3L1020.3 593.3L1009.4 593.2ZM1001.3 571.3L1009.4 571.2L1009.4 593.2L1001.3 593.3ZM941.6 771.5L955.3 768.8L955.3 790.8L941.6 793.5ZM929.5 773.1L941.6 771.5L941.6 793.5L929.5 795.1ZM920.3 774.1L929.5 773.1L929.5 795.1L920.3 796.1ZM912.2 774.0L920.3 774.1L920.3 796.1L912.2 796.0ZM903.6 772.3L912.2 774.0L912.2 796.0L903.6 794.3ZM789.9 693.9L806.3 697.3L806.3 719.3L789.9 715.9ZM774.4 700.8L779.8 700.4L779.8 722.4L774.4 722.8ZM769.8 700.0L774.4 700.8L774.4 722.8L769.8 722.0ZM569.9 536.1L578.8 537.9L578.8 559.9L569.9 558.1ZM564.2 537.2L569.9 536.1L569.9 558.1L564.2 559.2ZM538.9 551.1L543.8 549.9L543.8 571.9L538.9 573.1ZM535.4 551.1L538.9 551.1L538.9 573.1L535.4 573.1ZM692.2 499.4L711.4 495.1L711.4 517.1L692.2 521.4ZM711.4 495.1L728.6 492.2L728.6 514.2L711.4 517.1ZM728.6 492.2L743.9 490.3L743.9 512.3L728.6 514.2ZM743.9 490.3L757.0 489.4L757.0 511.4L743.9 512.3ZM757.0 489.4L768.1 489.5L768.1 511.5L757.0 511.4ZM768.1 489.5L778.4 489.9L778.4 511.9L768.1 511.5ZM778.4 489.9L787.7 490.7L787.7 512.7L778.4 511.9ZM787.7 490.7L796.0 491.8L796.0 513.8L787.7 512.7ZM796.0 491.8L804.2 493.4L804.2 515.4L796.0 513.8ZM804.2 493.4L813.4 495.4L813.4 517.4L804.2 515.4ZM649.2 593.3L655.7 592.9L655.7 614.9L649.2 615.3ZM599.6 536.7L606.1 538.2L606.1 560.2L599.6 558.7ZM593.5 535.8L599.6 536.7L599.6 558.7L593.5 557.8ZM776.7 576.2L779.7 575.7L779.7 597.7L776.7 598.2ZM773.7 575.7L776.7 576.2L776.7 598.2L773.7 597.7ZM773.7 569.3L776.7 568.8L776.7 590.8L773.7 591.3ZM776.7 568.8L779.7 569.3L779.7 591.3L776.7 590.8ZM780.0 600.3L782.6 600.3L782.6 622.3L780.0 622.3ZM782.6 600.3L785.4 600.8L785.4 622.8L782.6 622.3ZM781.7 608.4L784.2 608.3L784.2 630.3L781.7 630.4ZM778.9 608.1L781.7 608.4L781.7 630.4L778.9 630.1ZM809.6 560.1L811.7 559.7L811.7 581.7L809.6 582.1ZM815.7 572.0L818.3 572.5L818.3 594.5L815.7 594.0ZM818.3 572.5L821.4 572.6L821.4 594.6L818.3 594.5ZM821.4 572.6L824.7 572.4L824.7 594.4L821.4 594.6ZM824.7 572.4L827.5 571.7L827.5 593.7L824.7 594.4ZM810.7 599.1L814.0 599.0L814.0 621.0L810.7 621.1ZM805.0 604.2L818.3 605.8L818.3 627.8L805.0 626.2ZM800.0 611.7L814.2 613.3L814.2 635.3L800.0 633.7ZM778.3 670.0L781.9 669.9L781.9 691.9L778.3 692.0ZM777.8 693.6L781.3 692.9L781.3 714.9L777.8 715.6ZM775.0 693.3L777.8 693.6L777.8 715.6L775.0 715.3ZM777.9 614.1L783.1 613.1L783.1 635.1L777.9 636.1ZM783.1 613.1L789.8 612.4L789.8 634.4L783.1 635.1ZM789.8 612.4L796.8 612.4L796.8 634.4L789.8 634.4ZM796.8 612.4L804.4 613.2L804.4 635.2L796.8 634.4ZM804.4 613.2L812.3 614.7L812.3 636.7L804.4 635.2ZM812.3 614.7L819.2 616.4L819.2 638.4L812.3 636.7ZM943.2 761.8L948.0 760.6L948.0 782.6L943.2 783.8ZM938.1 762.8L943.2 761.8L943.2 783.8L938.1 784.8ZM932.6 763.6L938.1 762.8L938.1 784.8L932.6 785.6ZM926.7 764.3L932.6 763.6L932.6 785.6L926.7 786.3ZM920.8 764.5L926.7 764.3L926.7 786.3L920.8 786.5ZM915.1 764.1L920.8 764.5L920.8 786.5L915.1 786.1ZM909.4 763.2L915.1 764.1L915.1 786.1L909.4 785.2ZM903.6 761.9L909.4 763.2L909.4 785.2L903.6 783.9ZM795.9 672.4L802.8 674.1L802.8 696.1L795.9 694.4ZM773.8 663.9L779.6 664.6L779.6 686.6L773.8 685.9ZM767.3 663.7L773.8 663.9L773.8 685.9L767.3 685.7ZM762.4 662.9L767.3 663.7L767.3 685.7L762.4 684.9ZM888.4 501.9L895.9 500.3L895.9 522.3L888.4 523.9ZM837.3 556.6L841.6 557.5L841.6 579.5L837.3 578.6ZM833.0 555.8L837.3 556.6L837.3 578.6L833.0 577.8ZM828.9 544.8L830.4 544.6L830.4 566.6L828.9 566.8ZM902.8 590.2L914.0 588.2L914.0 610.2L902.8 612.2ZM914.0 588.2L940.7 591.1L940.7 613.1L914.0 610.2ZM918.3 651.2L921.7 650.7L921.7 672.7L918.3 673.2ZM914.8 650.7L918.3 651.2L918.3 673.2L914.8 672.7ZM914.8 644.1L918.3 643.6L918.3 665.6L914.8 666.1ZM918.3 643.6L921.7 644.1L921.7 666.1L918.3 665.6ZM913.1 588.9L925.7 585.9L925.7 607.9L913.1 610.9ZM925.7 585.9L946.7 581.6L946.7 603.6L925.7 607.9ZM970.6 574.8L988.9 571.3L988.9 593.3L970.6 596.8ZM938.1 588.5L946.3 589.7L946.3 611.7L938.1 610.5ZM922.6 588.9L938.1 588.5L938.1 610.5L922.6 610.9ZM913.1 588.9L922.6 588.9L922.6 610.9L913.1 610.9ZM998.4 594.0L1006.6 595.0L1006.6 617.0L998.4 616.0ZM986.3 723.1L993.5 723.8L993.5 745.8L986.3 745.1ZM931.2 691.0L938.1 691.3L938.1 713.3L931.2 713.0ZM925.2 690.4L931.2 691.0L931.2 713.0L925.2 712.4ZM938.1 703.3L946.9 704.7L946.9 726.7L938.1 725.3ZM965.4 460.1L969.7 460.6L969.7 482.6L965.4 482.1ZM969.7 460.6L975.8 459.2L975.8 481.2L969.7 482.6ZM1029.2 436.8L1041.3 438.5L1041.3 460.5L1029.2 458.8ZM1047.6 562.2L1051.6 562.6L1051.6 584.6L1047.6 584.2ZM1029.6 562.7L1043.1 561.0L1043.1 583.0L1029.6 584.7ZM1015.6 564.4L1029.6 562.7L1029.6 584.7L1015.6 586.4ZM1008.1 563.9L1015.6 564.4L1015.6 586.4L1008.1 585.9ZM1003.5 562.7L1008.1 563.9L1008.1 585.9L1003.5 584.7ZM998.4 561.0L1002.7 562.0L1002.7 584.0L998.4 583.0ZM979.0 558.7L998.4 561.0L998.4 583.0L979.0 580.7ZM958.7 555.8L979.0 558.7L979.0 580.7L958.7 577.8ZM928.6 523.9L931.6 523.2L931.6 545.2L928.6 545.9ZM946.7 560.1L952.7 561.3L952.7 583.3L946.7 582.1ZM939.8 575.6L948.9 573.8L948.9 595.8L939.8 597.6ZM927.5 577.0L939.8 575.6L939.8 597.6L927.5 599.0ZM915.7 578.2L927.5 577.0L927.5 599.0L915.7 600.2ZM907.9 579.8L915.7 578.2L915.7 600.2L907.9 601.8ZM903.6 579.9L907.9 579.8L907.9 601.8L903.6 601.9ZM956.9 433.6L961.1 433.4L961.1 455.4L956.9 455.6ZM980.1 431.7L985.2 431.4L985.2 453.4L980.1 453.7ZM985.2 431.4L992.6 431.9L992.6 453.9L985.2 453.4ZM992.6 431.9L999.9 432.5L999.9 454.5L992.6 453.9ZM999.9 432.5L1007.3 433.2L1007.3 455.2L999.9 454.5ZM1007.3 433.2L1014.6 434.1L1014.6 456.1L1007.3 455.2ZM1014.6 434.1L1018.8 435.1L1018.8 457.1L1014.6 456.1ZM1010.2 439.4L1014.8 438.3L1014.8 460.3L1010.2 461.4ZM1004.9 439.5L1010.2 439.4L1010.2 461.4L1004.9 461.5ZM998.7 439.0L1004.9 439.5L1004.9 461.5L998.7 461.0ZM993.0 438.6L998.7 439.0L998.7 461.0L993.0 460.6ZM988.2 438.5L993.0 438.6L993.0 460.6L988.2 460.5ZM983.9 438.4L988.2 438.5L988.2 460.5L983.9 460.4ZM981.0 437.7L983.9 438.4L983.9 460.4L981.0 459.7ZM1186.9 493.6L1189.0 493.2L1189.0 515.2L1186.9 515.6ZM1098.1 450.1L1099.8 449.8L1099.8 471.8L1098.1 472.1Z" fill="#3c3b37" stroke="#3c3b37" stroke-width=".6"/>
<path d="M530.3 546.8L530.9 544.8L530.9 566.8L530.3 568.8ZM915.3 485.0L919.1 480.0L919.1 502.0L915.3 507.0ZM912.0 468.3L913.8 462.7L913.8 484.7L912.0 490.3ZM913.8 462.7L916.8 455.8L916.8 477.8L913.8 484.7ZM916.8 455.8L920.7 448.9L920.7 470.9L916.8 477.8ZM920.7 448.9L924.5 443.3L924.5 465.3L920.7 470.9ZM954.3 413.6L955.5 410.5L955.5 432.5L954.3 435.6ZM1109.3 399.8L1110.2 397.2L1110.2 419.2L1109.3 421.8ZM1125.4 400.9L1126.5 394.6L1126.5 416.6L1125.4 422.9ZM1211.7 485.1L1212.9 480.0L1212.9 502.0L1211.7 507.1ZM1209.0 490.4L1211.7 485.1L1211.7 507.1L1209.0 512.4ZM1204.9 495.4L1209.0 490.4L1209.0 512.4L1204.9 517.4ZM1129.7 532.9L1130.8 529.8L1130.8 551.8L1129.7 554.9ZM1129.1 535.0L1129.7 532.9L1129.7 554.9L1129.1 557.0ZM998.9 574.6L1001.3 571.3L1001.3 593.3L998.9 596.6ZM1034.1 650.6L1035.4 643.6L1035.4 665.6L1034.1 672.6ZM1030.3 660.8L1034.1 650.6L1034.1 672.6L1030.3 682.8ZM1025.4 673.0L1030.3 660.8L1030.3 682.8L1025.4 695.0ZM1019.8 688.0L1025.4 673.0L1025.4 695.0L1019.8 710.0ZM1015.1 702.2L1019.8 688.0L1019.8 710.0L1015.1 724.2ZM1014.6 711.6L1015.1 702.2L1015.1 724.2L1014.6 733.6ZM1012.3 724.9L1014.7 718.8L1014.7 740.8L1012.3 746.9ZM1008.7 730.9L1012.3 724.9L1012.3 746.9L1008.7 752.9ZM1004.0 738.6L1008.7 730.9L1008.7 752.9L1004.0 760.6ZM998.4 746.4L1004.0 738.6L1004.0 760.6L998.4 768.4ZM784.8 699.0L786.0 695.8L786.0 717.8L784.8 721.0ZM761.2 685.8L761.3 681.7L761.3 703.7L761.2 707.8ZM827.7 507.9L829.5 504.0L829.5 526.0L827.7 529.9ZM824.9 512.3L827.7 507.9L827.7 529.9L824.9 534.3ZM821.7 517.8L824.9 512.3L824.9 534.3L821.7 539.8ZM817.5 523.9L821.7 517.8L821.7 539.8L817.5 545.9ZM812.8 529.6L817.5 523.9L817.5 545.9L812.8 551.6ZM646.8 589.3L647.0 582.7L647.0 604.7L646.8 611.3ZM781.9 574.3L782.7 572.5L782.7 594.5L781.9 596.3ZM770.7 572.5L771.5 570.7L771.5 592.7L770.7 594.5ZM775.0 604.2L776.1 602.7L776.1 624.7L775.0 626.2ZM788.3 605.8L788.7 604.5L788.7 626.5L788.3 627.8ZM787.4 606.9L788.3 605.8L788.3 627.8L787.4 628.9ZM774.8 605.4L775.0 604.2L775.0 626.2L774.8 627.4ZM801.3 569.2L801.6 567.0L801.6 589.0L801.3 591.2ZM801.6 567.0L802.6 565.1L802.6 587.1L801.6 589.0ZM811.0 562.9L811.8 560.8L811.8 582.8L811.0 584.9ZM810.5 565.0L811.0 562.9L811.0 584.9L810.5 587.0ZM829.2 570.2L830.4 568.4L830.4 590.4L829.2 592.2ZM830.4 568.4L831.7 566.7L831.7 588.7L830.4 590.4ZM839.3 570.5L839.7 568.3L839.7 590.3L839.3 592.5ZM838.3 572.9L839.3 570.5L839.3 592.5L838.3 594.9ZM836.7 575.0L838.3 572.9L838.3 594.9L836.7 597.0ZM822.5 585.0L824.2 582.8L824.2 604.8L822.5 607.0ZM820.9 587.7L822.5 585.0L822.5 607.0L820.9 609.7ZM819.5 590.7L820.9 587.7L820.9 609.7L819.5 612.7ZM818.3 593.3L819.5 590.7L819.5 612.7L818.3 615.3ZM817.8 595.4L818.3 593.3L818.3 615.3L817.8 617.4ZM817.6 597.2L817.8 595.4L817.8 617.4L817.6 619.2ZM816.7 598.3L817.6 597.2L817.6 619.2L816.7 620.3ZM807.9 596.1L808.5 593.0L808.5 615.0L807.9 618.1ZM808.5 593.0L809.2 590.0L809.2 612.0L808.5 615.0ZM809.2 590.0L809.7 587.7L809.7 609.7L809.2 612.0ZM809.7 587.7L810.2 585.5L810.2 607.5L809.7 609.7ZM771.7 686.7L773.0 681.0L773.0 703.0L771.7 708.7ZM773.0 681.0L775.5 674.3L775.5 696.3L773.0 703.0ZM775.5 674.3L778.3 670.0L778.3 692.0L775.5 696.3ZM788.2 680.6L788.3 675.8L788.3 697.8L788.2 702.6ZM786.5 686.4L788.2 680.6L788.2 702.6L786.5 708.4ZM784.2 690.8L786.5 686.4L786.5 708.4L784.2 712.8ZM772.7 618.9L774.2 616.8L774.2 638.8L772.7 640.9ZM774.2 616.8L775.3 615.3L775.3 637.3L774.2 638.8ZM957.4 755.0L957.6 751.6L957.6 773.6L957.4 777.0ZM956.3 757.1L957.4 755.0L957.4 777.0L956.3 779.1ZM760.2 658.2L760.3 655.1L760.3 677.1L760.2 680.2ZM760.3 655.1L760.4 651.5L760.4 673.5L760.3 677.1ZM760.4 651.5L760.9 647.4L760.9 669.4L760.4 673.5ZM760.9 647.4L761.5 643.1L761.5 665.1L760.9 669.4ZM761.5 643.1L762.1 638.5L762.1 660.5L761.5 665.1ZM762.1 638.5L762.8 633.7L762.8 655.7L762.1 660.5ZM762.8 633.7L764.1 629.3L764.1 651.3L762.8 655.7ZM764.1 629.3L766.7 625.4L766.7 647.4L764.1 651.3ZM894.2 504.5L895.9 500.3L895.9 522.3L894.2 526.5ZM889.8 511.0L894.2 504.5L894.2 526.5L889.8 533.0ZM887.7 517.8L889.8 511.0L889.8 533.0L887.7 539.8ZM886.4 524.8L887.7 517.8L887.7 539.8L886.4 546.8ZM886.2 530.9L886.4 524.8L886.4 546.8L886.2 552.9ZM893.1 566.7L893.3 561.0L893.3 583.0L893.1 588.7ZM892.4 573.0L893.1 566.7L893.1 588.7L892.4 595.0ZM891.6 590.2L893.0 581.5L893.0 603.5L891.6 612.2ZM884.6 599.0L891.6 590.2L891.6 612.2L884.6 621.0ZM843.3 579.9L846.9 575.8L846.9 597.8L843.3 601.9ZM846.9 575.8L849.4 571.3L849.4 593.3L846.9 597.8ZM849.4 571.3L849.7 566.8L849.7 588.8L849.4 593.3ZM826.1 550.6L827.8 547.4L827.8 569.4L826.1 572.6ZM828.9 544.8L830.4 542.3L830.4 564.3L828.9 566.8ZM924.2 649.3L925.2 647.4L925.2 669.4L924.2 671.3ZM911.4 647.4L912.3 645.5L912.3 667.5L911.4 669.4ZM986.8 579.0L988.9 571.3L988.9 593.3L986.8 601.0ZM977.7 590.2L986.8 579.0L986.8 601.0L977.7 612.2ZM970.6 600.9L977.7 590.2L977.7 612.2L970.6 622.9ZM946.7 651.7L947.3 646.1L947.3 668.1L946.7 673.7ZM947.3 646.1L948.4 640.5L948.4 662.5L947.3 668.1ZM1021.5 645.1L1022.5 634.4L1022.5 656.4L1021.5 667.1ZM1019.0 656.8L1021.5 645.1L1021.5 667.1L1019.0 678.8ZM1015.0 670.0L1019.0 656.8L1019.0 678.8L1015.0 692.0ZM1010.4 682.7L1015.0 670.0L1015.0 692.0L1010.4 704.7ZM1005.7 692.6L1010.4 682.7L1010.4 704.7L1005.7 714.6ZM1001.8 701.6L1005.7 692.6L1005.7 714.6L1001.8 723.6ZM1000.8 712.1L1001.8 701.6L1001.8 723.6L1000.8 734.1ZM999.2 720.6L1000.8 712.1L1000.8 734.1L999.2 742.6ZM983.9 736.9L985.2 730.1L985.2 752.1L983.9 758.9ZM981.1 743.0L983.9 736.9L983.9 758.9L981.1 765.0ZM936.9 705.3L938.1 703.3L938.1 725.3L936.9 727.3ZM1148.9 500.6L1150.7 495.8L1150.7 517.8L1148.9 522.6ZM925.2 529.9L926.3 526.2L926.3 548.2L925.2 551.9ZM955.3 571.3L957.8 566.9L957.8 588.9L955.3 593.3ZM903.6 579.9L905.2 575.6L905.2 597.6L903.6 601.9ZM905.2 575.6L907.9 569.6L907.9 591.6L905.2 597.6ZM897.6 531.7L898.5 524.5L898.5 546.5L897.6 553.7ZM898.5 524.5L900.2 517.9L900.2 539.9L898.5 546.5ZM900.2 517.9L902.7 512.5L902.7 534.5L900.2 539.9ZM902.7 512.5L905.3 509.3L905.3 531.3L902.7 534.5ZM909.7 512.7L910.7 507.0L910.7 529.0L909.7 534.7ZM910.7 507.0L912.2 498.9L912.2 520.9L910.7 529.0ZM912.2 498.9L916.5 490.8L916.5 512.8L912.2 520.9ZM916.5 490.8L920.8 483.4L920.8 505.4L916.5 512.8ZM920.8 483.4L923.2 479.4L923.2 501.4L920.8 505.4ZM923.2 479.4L924.1 476.5L924.1 498.5L923.2 501.4ZM921.5 469.6L922.2 463.7L922.2 485.7L921.5 491.6ZM922.2 463.7L924.1 457.5L924.1 479.5L922.2 485.7ZM924.1 457.5L927.2 452.1L927.2 474.1L924.1 479.5ZM927.2 452.1L931.0 447.2L931.0 469.2L927.2 474.1ZM965.1 444.6L965.9 442.2L965.9 464.2L965.1 466.6ZM961.9 450.2L965.1 444.6L965.1 466.6L961.9 472.2ZM959.4 455.8L961.9 450.2L961.9 472.2L959.4 477.8ZM1018.3 436.6L1018.8 435.1L1018.8 457.1L1018.3 458.6ZM1195.1 486.8L1196.2 483.3L1196.2 505.3L1195.1 508.8ZM1193.1 489.8L1195.1 486.8L1195.1 508.8L1193.1 511.8ZM1185.9 492.8L1187.1 490.5L1187.1 512.5L1185.9 514.8ZM1187.1 490.5L1189.5 487.1L1189.5 509.1L1187.1 512.5ZM1189.5 487.1L1191.1 483.3L1191.1 505.3L1189.5 509.1ZM1191.1 483.3L1191.2 479.5L1191.2 501.5L1191.1 505.3Z" fill="#302f2b"/>
<path d="M530.9 544.8L532.9 542.5L532.9 564.5L530.9 566.8ZM532.9 542.5L537.1 539.5L537.1 561.5L532.9 564.5ZM537.1 539.5L542.4 536.5L542.4 558.5L537.1 561.5ZM542.4 536.5L548.5 533.7L548.5 555.7L542.4 558.5ZM548.5 533.7L554.4 531.3L554.4 553.3L548.5 555.7ZM554.4 531.3L558.9 529.3L558.9 551.3L554.4 553.3ZM558.9 529.3L563.1 527.8L563.1 549.8L558.9 551.3ZM583.7 525.8L591.5 522.4L591.5 544.4L583.7 547.8ZM591.5 522.4L602.7 517.5L602.7 539.5L591.5 544.4ZM602.7 517.5L619.6 511.0L619.6 533.0L602.7 539.5ZM619.6 511.0L640.6 503.7L640.6 525.7L619.6 533.0ZM640.6 503.7L666.6 495.9L666.6 517.9L640.6 525.7ZM666.6 495.9L692.2 489.1L692.2 511.1L666.6 517.9ZM902.3 491.6L908.8 489.5L908.8 511.5L902.3 513.6ZM908.8 489.5L915.3 485.0L915.3 507.0L908.8 511.5ZM924.5 443.3L929.3 438.6L929.3 460.6L924.5 465.3ZM929.3 438.6L935.6 434.6L935.6 456.6L929.3 460.6ZM935.6 434.6L943.1 431.7L943.1 453.7L935.6 456.6ZM955.5 410.5L958.6 407.6L958.6 429.6L955.5 432.5ZM958.6 407.6L964.6 404.0L964.6 426.0L958.6 429.6ZM964.6 404.0L972.3 400.7L972.3 422.7L964.6 426.0ZM972.3 400.7L979.9 398.0L979.9 420.0L972.3 422.7ZM1109.3 393.8L1110.9 392.1L1110.9 414.1L1109.3 415.8ZM1110.9 392.1L1113.6 391.2L1113.6 413.2L1110.9 414.1ZM1199.5 499.6L1204.9 495.4L1204.9 517.4L1199.5 521.6ZM1192.8 503.1L1199.5 499.6L1199.5 521.6L1192.8 525.1ZM1184.2 505.7L1192.8 503.1L1192.8 525.1L1184.2 527.7ZM1156.1 511.4L1163.5 508.3L1163.5 530.3L1156.1 533.4ZM1148.0 516.1L1156.1 511.4L1156.1 533.4L1148.0 538.1ZM1138.5 523.1L1148.0 516.1L1148.0 538.1L1138.5 545.1ZM1130.8 529.8L1138.5 523.1L1138.5 545.1L1130.8 551.8ZM1124.4 537.7L1129.1 535.0L1129.1 557.0L1124.4 559.7ZM1115.3 541.9L1124.4 537.7L1124.4 559.7L1115.3 563.9ZM1097.6 550.6L1115.3 541.9L1115.3 563.9L1097.6 572.6ZM1077.4 559.1L1097.6 550.6L1097.6 572.6L1077.4 581.1ZM1030.7 568.6L1043.0 565.2L1043.0 587.2L1030.7 590.6ZM1020.3 571.3L1030.7 568.6L1030.7 590.6L1020.3 593.3ZM992.6 752.8L998.4 746.4L998.4 768.4L992.6 774.8ZM984.6 758.5L992.6 752.8L992.6 774.8L984.6 780.5ZM970.7 764.1L984.6 758.5L984.6 780.5L970.7 786.1ZM955.3 768.8L970.7 764.1L970.7 786.1L955.3 790.8ZM786.0 695.8L789.9 693.9L789.9 715.9L786.0 717.8ZM779.8 700.4L784.8 699.0L784.8 721.0L779.8 722.4ZM559.6 539.9L564.2 537.2L564.2 559.2L559.6 561.9ZM554.4 543.8L559.6 539.9L559.6 561.9L554.4 565.8ZM549.3 547.6L554.4 543.8L554.4 565.8L549.3 569.6ZM543.8 549.9L549.3 547.6L549.3 569.6L543.8 571.9ZM592.3 533.9L598.0 530.5L598.0 552.5L592.3 555.9ZM598.0 530.5L608.5 526.2L608.5 548.2L598.0 552.5ZM608.5 526.2L623.3 521.0L623.3 543.0L608.5 548.2ZM623.3 521.0L644.1 514.0L644.1 536.0L623.3 543.0ZM644.1 514.0L669.1 506.0L669.1 528.0L644.1 536.0ZM669.1 506.0L692.2 499.4L692.2 521.4L669.1 528.0ZM807.4 534.5L812.8 529.6L812.8 551.6L807.4 556.5ZM801.5 539.1L807.4 534.5L807.4 556.5L801.5 561.1ZM795.6 543.3L801.5 539.1L801.5 561.1L795.6 565.3ZM790.5 547.0L795.6 543.3L795.6 565.3L790.5 569.0ZM785.4 550.2L790.5 547.0L790.5 569.0L785.4 572.2ZM778.4 553.7L785.4 550.2L785.4 572.2L778.4 575.7ZM768.1 557.6L778.4 553.7L778.4 575.7L768.1 579.6ZM756.0 561.8L768.1 557.6L768.1 579.6L756.0 583.8ZM743.9 565.7L756.0 561.8L756.0 583.8L743.9 587.7ZM732.4 569.3L743.9 565.7L743.9 587.7L732.4 591.3ZM720.9 572.7L732.4 569.3L732.4 591.3L720.9 594.7ZM709.5 576.1L720.9 572.7L720.9 594.7L709.5 598.1ZM697.7 579.6L709.5 576.1L709.5 598.1L697.7 601.6ZM685.9 583.2L697.7 579.6L697.7 601.6L685.9 605.2ZM675.0 586.4L685.9 583.2L685.9 605.2L675.0 608.4ZM664.9 589.8L675.0 586.4L675.0 608.4L664.9 611.8ZM655.7 592.9L664.9 589.8L664.9 611.8L655.7 614.9ZM695.8 620.0L742.5 595.5L742.5 617.5L695.8 642.0ZM695.8 622.2L742.5 597.7L742.5 619.7L695.8 644.2ZM779.7 575.7L781.9 574.3L781.9 596.3L779.7 597.7ZM771.5 570.7L773.7 569.3L773.7 591.3L771.5 592.7ZM776.1 602.7L777.9 601.2L777.9 623.2L776.1 624.7ZM777.9 601.2L780.0 600.3L780.0 622.3L777.9 623.2ZM786.0 607.8L787.4 606.9L787.4 628.9L786.0 629.8ZM784.2 608.3L786.0 607.8L786.0 629.8L784.2 630.3ZM802.6 565.1L804.2 563.3L804.2 585.3L802.6 587.1ZM804.2 563.3L806.6 561.6L806.6 583.6L804.2 585.3ZM806.6 561.6L809.6 560.1L809.6 582.1L806.6 583.6ZM827.5 571.7L829.2 570.2L829.2 592.2L827.5 593.7ZM831.7 566.7L833.3 565.1L833.3 587.1L831.7 588.7ZM833.3 565.1L835.1 563.8L835.1 585.8L833.3 587.1ZM835.1 563.8L836.7 563.3L836.7 585.3L835.1 585.8ZM834.2 576.5L836.7 575.0L836.7 597.0L834.2 598.5ZM831.1 577.7L834.2 576.5L834.2 598.5L831.1 599.7ZM828.3 579.2L831.1 577.7L831.1 599.7L828.3 601.2ZM826.1 580.9L828.3 579.2L828.3 601.2L826.1 602.9ZM824.2 582.8L826.1 580.9L826.1 602.9L824.2 604.8ZM814.0 599.0L816.7 598.3L816.7 620.3L814.0 621.0ZM799.2 605.8L805.0 604.2L805.0 626.2L799.2 627.8ZM814.2 613.3L818.3 610.0L818.3 632.0L814.2 635.3ZM781.3 692.9L784.2 690.8L784.2 712.8L781.3 714.9ZM775.3 615.3L777.9 614.1L777.9 636.1L775.3 637.3ZM954.5 758.2L956.3 757.1L956.3 779.1L954.5 780.2ZM951.8 759.3L954.5 758.2L954.5 780.2L951.8 781.3ZM948.0 760.6L951.8 759.3L951.8 781.3L948.0 782.6ZM766.7 625.4L769.9 621.9L769.9 643.9L766.7 647.4ZM769.9 621.9L772.7 618.9L772.7 640.9L769.9 643.9ZM830.4 542.3L843.4 528.8L843.4 550.8L830.4 564.3ZM843.4 528.8L858.8 514.4L858.8 536.4L843.4 550.8ZM858.8 514.4L869.0 508.7L869.0 530.7L858.8 536.4ZM869.0 508.7L877.8 505.8L877.8 527.8L869.0 530.7ZM877.8 505.8L888.4 501.9L888.4 523.9L877.8 527.8ZM874.3 604.0L884.6 599.0L884.6 621.0L874.3 626.0ZM835.6 585.4L838.4 582.8L838.4 604.8L835.6 607.4ZM838.4 582.8L843.3 579.9L843.3 601.9L838.4 604.8ZM827.8 547.4L830.4 544.6L830.4 566.6L827.8 569.4ZM880.4 609.5L902.8 590.2L902.8 612.2L880.4 631.5ZM920.0 629.0L947.5 610.9L947.5 632.9L920.0 651.0ZM921.7 650.7L924.2 649.3L924.2 671.3L921.7 672.7ZM912.3 645.5L914.8 644.1L914.8 666.1L912.3 667.5ZM946.7 581.6L970.6 574.8L970.6 596.8L946.7 603.6ZM963.9 608.3L970.6 600.9L970.6 622.9L963.9 630.3ZM914.3 680.6L920.1 674.7L920.1 696.7L914.3 702.6ZM920.1 674.7L929.5 668.0L929.5 690.0L920.1 696.7ZM929.5 668.0L938.9 659.8L938.9 681.8L929.5 690.0ZM938.9 659.8L946.7 651.7L946.7 673.7L938.9 681.8ZM948.4 640.5L957.0 633.5L957.0 655.5L948.4 662.5ZM957.0 633.5L969.1 624.1L969.1 646.1L957.0 655.5ZM969.1 624.1L984.1 607.5L984.1 629.5L969.1 646.1ZM984.1 607.5L998.4 594.0L998.4 616.0L984.1 629.5ZM993.5 723.8L999.2 720.6L999.2 742.6L993.5 745.8ZM976.0 748.3L981.1 743.0L981.1 765.0L976.0 770.3ZM969.4 752.9L976.0 748.3L976.0 770.3L969.4 774.9ZM963.9 755.0L969.4 752.9L969.4 774.9L963.9 777.0ZM975.8 459.2L984.7 454.8L984.7 476.8L975.8 481.2ZM984.7 454.8L996.5 448.9L996.5 470.9L984.7 476.8ZM996.5 448.9L1012.5 441.8L1012.5 463.8L996.5 470.9ZM1012.5 441.8L1029.2 436.8L1029.2 458.8L1012.5 463.8ZM1144.2 505.8L1148.9 500.6L1148.9 522.6L1144.2 527.8ZM1137.7 510.9L1144.2 505.8L1144.2 527.8L1137.7 532.9ZM1130.8 515.1L1137.7 510.9L1137.7 532.9L1130.8 537.1ZM1123.9 519.5L1130.8 515.1L1130.8 537.1L1123.9 541.5ZM1117.8 525.4L1123.9 519.5L1123.9 541.5L1117.8 547.4ZM1111.8 531.6L1117.8 525.4L1117.8 547.4L1111.8 553.6ZM1106.6 537.3L1111.8 531.6L1111.8 553.6L1106.6 559.3ZM1099.8 542.8L1106.6 537.3L1106.6 559.3L1099.8 564.8ZM1088.5 547.6L1099.8 542.8L1099.8 564.8L1088.5 569.6ZM1075.7 552.2L1088.5 547.6L1088.5 569.6L1075.7 574.2ZM1062.6 558.1L1075.7 552.2L1075.7 574.2L1062.6 580.1ZM1051.6 562.6L1062.6 558.1L1062.6 580.1L1051.6 584.6ZM926.3 526.2L928.6 523.9L928.6 545.9L926.3 548.2ZM948.9 573.8L955.3 571.3L955.3 593.3L948.9 595.8ZM931.0 447.2L935.0 442.9L935.0 464.9L931.0 469.2ZM935.0 442.9L939.6 439.4L939.6 461.4L935.0 464.9ZM939.6 439.4L945.6 436.9L945.6 458.9L939.6 461.4ZM945.6 436.9L951.7 435.1L951.7 457.1L945.6 458.9ZM951.7 435.1L956.9 433.6L956.9 455.6L951.7 457.1ZM1014.8 438.3L1018.3 436.6L1018.3 458.6L1014.8 460.3ZM978.4 433.4L980.1 431.7L980.1 453.7L978.4 455.4ZM1191.1 492.0L1193.1 489.8L1193.1 511.8L1191.1 514.0ZM1189.0 493.2L1191.1 492.0L1191.1 514.0L1189.0 515.2ZM1164.4 435.7L1165.2 435.1L1165.2 457.1L1164.4 457.7Z" fill="#363531"/>
<path d="M531.1 548.7L532.9 550.2L532.9 572.2L531.1 570.7ZM912.1 473.0L916.1 476.6L916.1 498.6L912.1 495.0ZM1122.2 391.2L1124.9 392.1L1124.9 414.1L1122.2 413.2ZM1125.6 407.6L1132.0 410.8L1132.0 432.8L1125.6 429.6ZM1132.0 410.8L1141.1 413.6L1141.1 435.6L1132.0 432.8ZM1141.1 413.6L1151.1 417.6L1151.1 439.6L1141.1 435.6ZM1151.1 417.6L1161.8 422.2L1161.8 444.2L1151.1 439.6ZM1161.8 422.2L1172.5 427.4L1172.5 449.4L1161.8 444.2ZM1172.5 427.4L1182.5 433.4L1182.5 455.4L1172.5 449.4ZM1182.5 433.4L1190.9 441.0L1190.9 463.0L1182.5 455.4ZM1190.9 441.0L1198.0 448.9L1198.0 470.9L1190.9 463.0ZM1013.4 597.2L1021.6 606.4L1021.6 628.4L1013.4 619.2ZM895.0 769.7L903.6 772.3L903.6 794.3L895.0 791.7ZM886.8 766.5L895.0 769.7L895.0 791.7L886.8 788.5ZM877.8 761.9L886.8 766.5L886.8 788.5L877.8 783.9ZM865.5 754.5L877.8 761.9L877.8 783.9L865.5 776.5ZM853.7 746.4L865.5 754.5L865.5 776.5L853.7 768.4ZM846.0 739.4L853.7 746.4L853.7 768.4L846.0 761.4ZM839.9 732.6L846.0 739.4L846.0 761.4L839.9 754.6ZM833.3 725.8L839.9 732.6L839.9 754.6L833.3 747.8ZM806.3 697.3L822.7 703.3L822.7 725.3L806.3 719.3ZM765.8 698.2L769.8 700.0L769.8 722.0L765.8 720.2ZM761.3 681.7L768.4 686.8L768.4 708.8L761.3 703.7ZM761.3 681.7L768.4 686.8L768.4 708.8L761.3 703.7ZM704.8 640.5L761.3 681.7L761.3 703.7L704.8 662.5ZM648.3 599.3L704.8 640.5L704.8 662.5L648.3 621.3ZM641.3 594.2L648.3 599.3L648.3 621.3L641.3 616.2ZM641.3 594.2L648.3 599.3L648.3 621.3L641.3 616.2ZM648.3 599.3L648.8 599.6L648.8 621.6L648.3 621.3ZM648.3 599.3L648.8 599.6L648.8 621.6L648.3 621.3ZM644.9 597.7L648.3 599.3L648.3 621.3L644.9 619.7ZM640.6 595.0L644.9 597.7L644.9 619.7L640.6 617.0ZM637.2 591.4L640.6 595.0L640.6 617.0L637.2 613.4ZM609.6 553.7L618.1 562.1L618.1 584.1L609.6 575.7ZM599.4 546.9L609.6 553.7L609.6 575.7L599.4 568.9ZM588.9 541.6L599.4 546.9L599.4 568.9L588.9 563.6ZM578.8 537.9L588.9 541.6L588.9 563.6L578.8 559.9ZM532.9 550.2L535.4 551.1L535.4 573.1L532.9 572.2ZM813.4 495.4L822.4 497.7L822.4 519.7L813.4 517.4ZM822.4 497.7L828.3 500.6L828.3 522.6L822.4 519.7ZM634.3 554.3L638.8 558.8L638.8 580.8L634.3 576.3ZM628.9 550.4L634.3 554.3L634.3 576.3L628.9 572.4ZM623.3 546.8L628.9 550.4L628.9 572.4L623.3 568.8ZM617.6 543.5L623.3 546.8L623.3 568.8L617.6 565.5ZM611.7 540.6L617.6 543.5L617.6 565.5L611.7 562.6ZM606.1 538.2L611.7 540.6L611.7 562.6L606.1 560.2ZM742.5 595.5L763.7 605.0L763.7 627.0L742.5 617.5ZM742.5 597.7L763.7 607.0L763.7 629.0L742.5 619.7ZM771.5 574.3L773.7 575.7L773.7 597.7L771.5 596.3ZM779.7 569.3L781.9 570.7L781.9 592.7L779.7 591.3ZM785.4 600.8L787.5 601.7L787.5 623.7L785.4 622.8ZM776.7 607.5L778.9 608.1L778.9 630.1L776.7 629.5ZM775.4 606.6L776.7 607.5L776.7 629.5L775.4 628.6ZM811.7 570.0L813.4 571.1L813.4 593.1L811.7 592.0ZM813.4 571.1L815.7 572.0L815.7 594.0L813.4 593.1ZM836.7 563.3L838.0 564.3L838.0 586.3L836.7 585.3ZM808.3 598.3L810.7 599.1L810.7 621.1L808.3 620.3ZM781.9 669.9L785.9 672.4L785.9 694.4L781.9 691.9ZM773.1 692.2L775.0 693.3L775.0 715.3L773.1 714.2ZM819.2 616.4L824.6 618.1L824.6 640.1L819.2 638.4ZM824.6 618.1L829.0 620.0L829.0 642.0L824.6 640.1ZM829.0 620.0L833.0 622.4L833.0 644.4L829.0 642.0ZM833.0 622.4L836.6 625.3L836.6 647.3L833.0 644.4ZM836.6 625.3L839.8 628.7L839.8 650.7L836.6 647.3ZM839.8 628.7L843.3 632.7L843.3 654.7L839.8 650.7ZM843.3 632.7L847.7 637.6L847.7 659.6L843.3 654.7ZM852.4 643.0L857.1 648.2L857.1 670.2L852.4 665.0ZM857.1 648.2L861.5 652.9L861.5 674.9L857.1 670.2ZM861.5 652.9L865.8 657.3L865.8 679.3L861.5 674.9ZM865.8 657.3L870.9 662.0L870.9 684.0L865.8 679.3ZM870.9 662.0L877.3 667.1L877.3 689.1L870.9 684.0ZM877.3 667.1L884.4 672.4L884.4 694.4L877.3 689.1ZM884.4 672.4L891.6 677.5L891.6 699.5L884.4 694.4ZM891.6 677.5L898.6 682.3L898.6 704.3L891.6 699.5ZM898.6 682.3L905.6 686.9L905.6 708.9L898.6 704.3ZM905.6 686.9L912.2 691.3L912.2 713.3L905.6 708.9ZM912.2 691.3L918.4 695.4L918.4 717.4L912.2 713.3ZM918.4 695.4L924.1 699.3L924.1 721.3L918.4 717.4ZM924.1 699.3L929.5 703.3L929.5 725.3L924.1 721.3ZM929.5 703.3L934.5 707.8L934.5 729.8L929.5 725.3ZM934.5 707.8L939.2 712.5L939.2 734.5L934.5 729.8ZM897.9 760.1L903.6 761.9L903.6 783.9L897.9 782.1ZM892.1 757.9L897.9 760.1L897.9 782.1L892.1 779.9ZM886.4 755.0L892.1 757.9L892.1 779.9L886.4 777.0ZM880.6 751.4L886.4 755.0L886.4 777.0L880.6 773.4ZM874.8 747.3L880.6 751.4L880.6 773.4L874.8 769.3ZM869.2 743.0L874.8 747.3L874.8 769.3L869.2 765.0ZM863.8 738.6L869.2 743.0L869.2 765.0L863.8 760.6ZM858.5 734.0L863.8 738.6L863.8 760.6L858.5 756.0ZM853.7 729.2L858.5 734.0L858.5 756.0L853.7 751.2ZM822.6 681.8L823.3 682.5L823.3 704.5L822.6 703.8ZM821.0 681.0L822.6 681.8L822.6 703.8L821.0 703.0ZM817.8 679.4L821.0 681.0L821.0 703.0L817.8 701.4ZM813.7 677.6L817.8 679.4L817.8 701.4L813.7 699.6ZM808.9 675.8L813.7 677.6L813.7 699.6L808.9 697.8ZM802.8 674.1L808.9 675.8L808.9 697.8L802.8 696.1ZM789.9 670.6L795.9 672.4L795.9 694.4L789.9 692.6ZM786.1 668.5L789.9 670.6L789.9 692.6L786.1 690.5ZM783.3 666.3L786.1 668.5L786.1 690.5L783.3 688.3ZM779.6 664.6L783.3 666.3L783.3 688.3L779.6 686.6ZM760.5 660.9L762.4 662.9L762.4 684.9L760.5 682.9ZM860.2 599.3L874.3 604.0L874.3 626.0L860.2 621.3ZM846.8 592.0L860.2 599.3L860.2 621.3L846.8 614.0ZM839.0 588.3L846.8 592.0L846.8 614.0L839.0 610.3ZM835.6 585.4L839.0 588.3L839.0 610.3L835.6 607.4ZM845.5 559.7L848.5 562.7L848.5 584.7L845.5 581.7ZM841.6 557.5L845.5 559.7L845.5 581.7L841.6 579.5ZM828.8 553.5L833.0 555.8L833.0 577.8L828.8 575.5ZM826.1 550.6L828.8 553.5L828.8 575.5L826.1 572.6ZM880.4 609.5L920.0 629.0L920.0 651.0L880.4 631.5ZM912.3 649.3L914.8 650.7L914.8 672.7L912.3 671.3ZM921.7 644.1L924.2 645.5L924.2 667.5L921.7 666.1ZM959.4 606.1L963.9 608.3L963.9 630.3L959.4 628.1ZM946.3 589.7L951.8 592.0L951.8 614.0L946.3 611.7ZM979.7 717.6L986.3 723.1L986.3 745.1L979.7 739.6ZM972.5 710.2L979.7 717.6L979.7 739.6L972.5 732.2ZM964.1 703.8L972.5 710.2L972.5 732.2L964.1 725.8ZM955.3 698.2L964.1 703.8L964.1 725.8L955.3 720.2ZM946.4 694.0L955.3 698.2L955.3 720.2L946.4 716.0ZM938.1 691.3L946.4 694.0L946.4 716.0L938.1 713.3ZM918.0 686.2L925.2 690.4L925.2 712.4L918.0 708.2ZM946.9 704.7L959.9 708.1L959.9 730.1L946.9 726.7ZM959.9 708.1L970.8 712.0L970.8 734.0L959.9 730.1ZM970.8 712.0L977.4 715.5L977.4 737.5L970.8 734.0ZM977.4 715.5L982.0 719.4L982.0 741.4L977.4 737.5ZM960.8 753.5L963.9 755.0L963.9 777.0L960.8 775.5ZM1041.3 438.5L1055.0 443.7L1055.0 465.7L1041.3 460.5ZM1055.0 443.7L1077.5 452.0L1077.5 474.0L1055.0 465.7ZM1077.5 452.0L1099.8 461.0L1099.8 483.0L1077.5 474.0ZM1099.8 461.0L1113.1 467.0L1113.1 489.0L1099.8 483.0ZM1113.1 467.0L1123.9 473.0L1123.9 495.0L1113.1 489.0ZM1123.9 473.0L1137.4 481.7L1137.4 503.7L1123.9 495.0ZM1137.4 481.7L1148.0 490.2L1148.0 512.2L1137.4 503.7ZM1043.1 561.0L1047.6 562.2L1047.6 584.2L1043.1 583.0ZM1002.7 562.0L1003.5 562.7L1003.5 584.7L1002.7 584.0ZM950.8 552.8L958.7 555.8L958.7 577.8L950.8 574.8ZM946.7 548.9L950.8 552.8L950.8 574.8L946.7 570.9ZM931.6 523.2L934.6 524.8L934.6 546.8L931.6 545.2ZM934.6 552.3L940.4 556.8L940.4 578.8L934.6 574.3ZM940.4 556.8L946.7 560.1L946.7 582.1L940.4 578.8ZM952.7 561.3L957.0 562.7L957.0 584.7L952.7 583.3ZM905.3 509.3L907.7 511.3L907.7 533.3L905.3 531.3ZM907.7 511.3L909.7 512.7L909.7 534.7L907.7 533.3ZM961.1 433.4L963.9 436.5L963.9 458.5L961.1 455.4ZM961.4 458.7L965.4 460.1L965.4 482.1L961.4 480.7ZM979.1 435.8L981.0 437.7L981.0 459.7L979.1 457.8ZM1165.2 435.1L1167.9 436.8L1167.9 458.8L1165.2 457.1ZM1167.9 436.8L1171.7 440.0L1171.7 462.0L1167.9 458.8ZM1171.7 440.0L1175.6 443.7L1175.6 465.7L1171.7 462.0ZM1185.9 492.8L1186.9 493.6L1186.9 515.6L1185.9 514.8ZM1173.9 448.9L1176.7 452.1L1176.7 474.1L1173.9 470.9ZM1171.0 445.8L1173.9 448.9L1173.9 470.9L1171.0 467.8ZM1168.1 442.8L1171.0 445.8L1171.0 467.8L1168.1 464.8ZM1099.8 449.8L1103.6 450.8L1103.6 472.8L1099.8 471.8ZM1103.6 450.8L1109.0 452.8L1109.0 474.8L1103.6 472.8ZM1109.0 452.8L1115.3 455.8L1115.3 477.8L1109.0 474.8ZM1115.3 455.8L1122.3 459.7L1122.3 481.7L1115.3 477.8ZM1122.3 459.7L1130.2 464.4L1130.2 486.4L1122.3 481.7ZM1130.2 464.4L1137.7 469.6L1137.7 491.6L1130.2 486.4ZM1137.7 469.6L1145.2 475.6L1145.2 497.6L1137.7 491.6ZM1145.2 475.6L1152.4 481.9L1152.4 503.9L1145.2 497.6ZM1152.4 481.9L1157.5 486.8L1157.5 508.8L1152.4 503.9ZM1158.4 490.2L1160.4 491.1L1160.4 513.1L1158.4 512.2ZM1153.1 485.9L1158.4 490.2L1158.4 512.2L1153.1 507.9ZM1145.5 479.3L1153.1 485.9L1153.1 507.9L1145.5 501.3ZM1137.7 473.0L1145.5 479.3L1145.5 501.3L1137.7 495.0ZM1130.1 467.9L1137.7 473.0L1137.7 495.0L1130.1 489.9ZM1122.3 463.1L1130.1 467.9L1130.1 489.9L1122.3 485.1ZM1115.3 459.2L1122.3 463.1L1122.3 485.1L1115.3 481.2ZM1109.0 456.5L1115.3 459.2L1115.3 481.2L1109.0 478.5ZM1103.6 454.7L1109.0 456.5L1109.0 478.5L1103.6 476.7ZM1099.8 453.2L1103.6 454.7L1103.6 476.7L1099.8 475.2ZM1098.1 451.5L1099.8 453.2L1099.8 475.2L1098.1 473.5Z" fill="#43423d"/>
<path d="M530.3 546.8L531.1 548.7L531.1 570.7L530.3 568.8ZM916.1 476.6L919.1 480.0L919.1 502.0L916.1 498.6ZM959.0 425.5L960.3 429.1L960.3 451.1L959.0 447.5ZM955.5 421.3L959.0 425.5L959.0 447.5L955.5 443.3ZM954.3 417.4L955.5 421.3L955.5 443.3L954.3 439.4ZM1109.3 393.8L1110.2 397.2L1110.2 419.2L1109.3 415.8ZM1124.9 392.1L1126.5 394.6L1126.5 416.6L1124.9 414.1ZM1125.4 400.9L1125.6 407.6L1125.6 429.6L1125.4 422.9ZM1198.0 448.9L1203.8 456.0L1203.8 478.0L1198.0 470.9ZM1203.8 456.0L1208.3 462.7L1208.3 484.7L1203.8 478.0ZM1208.3 462.7L1211.2 468.9L1211.2 490.9L1208.3 484.7ZM1211.2 468.9L1212.6 474.7L1212.6 496.7L1211.2 490.9ZM1212.6 474.7L1212.9 480.0L1212.9 502.0L1212.6 496.7ZM998.9 574.6L1000.5 579.9L1000.5 601.9L998.9 596.6ZM1000.5 579.9L1005.9 587.9L1005.9 609.9L1000.5 601.9ZM1005.9 587.9L1013.4 597.2L1013.4 619.2L1005.9 609.9ZM1021.6 606.4L1028.9 616.1L1028.9 638.1L1021.6 628.4ZM1028.9 616.1L1032.9 626.8L1032.9 648.8L1028.9 638.1ZM1032.9 626.8L1034.9 636.8L1034.9 658.8L1032.9 648.8ZM1034.9 636.8L1035.4 643.6L1035.4 665.6L1034.9 658.8ZM1014.6 711.6L1014.7 718.8L1014.7 740.8L1014.6 733.6ZM827.8 718.8L833.3 725.8L833.3 747.8L827.8 740.8ZM826.5 710.8L827.8 718.8L827.8 740.8L826.5 732.8ZM822.7 703.3L826.5 710.8L826.5 732.8L822.7 725.3ZM763.2 694.9L765.8 698.2L765.8 720.2L763.2 716.9ZM761.7 690.8L763.2 694.9L763.2 716.9L761.7 712.8ZM761.2 685.8L761.7 690.8L761.7 712.8L761.2 707.8ZM633.7 586.4L637.2 591.4L637.2 613.4L633.7 608.4ZM629.9 579.2L633.7 586.4L633.7 608.4L629.9 601.2ZM625.1 570.9L629.9 579.2L629.9 601.2L625.1 592.9ZM618.1 562.1L625.1 570.9L625.1 592.9L618.1 584.1ZM828.3 500.6L829.5 504.0L829.5 526.0L828.3 522.6ZM646.8 589.3L649.2 593.3L649.2 615.3L646.8 611.3ZM646.6 576.1L647.0 582.7L647.0 604.7L646.6 598.1ZM644.7 570.1L646.6 576.1L646.6 598.1L644.7 592.1ZM642.2 564.2L644.7 570.1L644.7 592.1L642.2 586.2ZM638.8 558.8L642.2 564.2L642.2 586.2L638.8 580.8ZM592.3 533.9L593.5 535.8L593.5 557.8L592.3 555.9ZM770.7 572.5L771.5 574.3L771.5 596.3L770.7 594.5ZM781.9 570.7L782.7 572.5L782.7 594.5L781.9 592.7ZM787.5 601.7L788.5 602.9L788.5 624.9L787.5 623.7ZM788.5 602.9L788.7 604.5L788.7 626.5L788.5 624.9ZM774.8 605.4L775.4 606.6L775.4 628.6L774.8 627.4ZM811.7 559.7L811.8 560.8L811.8 582.8L811.7 581.7ZM810.5 566.8L810.8 568.5L810.8 590.5L810.5 588.8ZM810.8 568.5L811.7 570.0L811.7 592.0L810.8 590.5ZM838.0 564.3L839.2 566.2L839.2 588.2L838.0 586.3ZM839.2 566.2L839.7 568.3L839.7 590.3L839.2 588.2ZM807.9 596.1L808.3 598.3L808.3 620.3L807.9 618.1ZM810.0 583.3L810.2 585.5L810.2 607.5L810.0 605.3ZM808.7 581.1L810.0 583.3L810.0 605.3L808.7 603.1ZM806.8 579.0L808.7 581.1L808.7 603.1L806.8 601.0ZM805.0 576.7L806.8 579.0L806.8 601.0L805.0 598.7ZM803.4 574.2L805.0 576.7L805.0 598.7L803.4 596.2ZM802.0 571.6L803.4 574.2L803.4 596.2L802.0 593.6ZM801.3 569.2L802.0 571.6L802.0 593.6L801.3 591.2ZM799.2 605.8L800.0 611.7L800.0 633.7L799.2 627.8ZM785.9 672.4L788.3 675.8L788.3 697.8L785.9 694.4ZM771.8 690.0L773.1 692.2L773.1 714.2L771.8 712.0ZM771.7 686.7L771.8 690.0L771.8 712.0L771.7 708.7ZM847.7 637.6L852.4 643.0L852.4 665.0L847.7 659.6ZM939.2 712.5L943.2 717.1L943.2 739.1L939.2 734.5ZM943.2 717.1L946.7 721.8L946.7 743.8L943.2 739.1ZM946.7 721.8L949.5 726.4L949.5 748.4L946.7 743.8ZM949.5 726.4L951.8 730.9L951.8 752.9L949.5 748.4ZM951.8 730.9L953.7 735.0L953.7 757.0L951.8 752.9ZM953.7 735.0L955.1 739.0L955.1 761.0L953.7 757.0ZM955.1 739.0L956.2 743.0L956.2 765.0L955.1 761.0ZM956.2 743.0L957.0 747.3L957.0 769.3L956.2 765.0ZM957.0 747.3L957.6 751.6L957.6 773.6L957.0 769.3ZM849.3 724.1L853.7 729.2L853.7 751.2L849.3 746.1ZM845.4 718.9L849.3 724.1L849.3 746.1L845.4 740.9ZM841.6 713.7L845.4 718.9L845.4 740.9L841.6 735.7ZM837.9 708.4L841.6 713.7L841.6 735.7L837.9 730.4ZM834.4 703.2L837.9 708.4L837.9 730.4L834.4 725.2ZM831.3 698.2L834.4 703.2L834.4 725.2L831.3 720.2ZM828.6 693.1L831.3 698.2L831.3 720.2L828.6 715.1ZM826.3 688.2L828.6 693.1L828.6 715.1L826.3 710.2ZM824.4 684.4L826.3 688.2L826.3 710.2L824.4 706.4ZM823.3 682.5L824.4 684.4L824.4 706.4L823.3 704.5ZM760.2 658.2L760.5 660.9L760.5 682.9L760.2 680.2ZM886.2 530.9L886.9 536.8L886.9 558.8L886.2 552.9ZM886.9 536.8L888.7 542.9L888.7 564.9L886.9 558.8ZM888.7 542.9L890.7 548.9L890.7 570.9L888.7 564.9ZM890.7 548.9L892.3 554.9L892.3 576.9L890.7 570.9ZM892.3 554.9L893.3 561.0L893.3 583.0L892.3 576.9ZM892.4 573.0L893.0 581.5L893.0 603.5L892.4 595.0ZM848.5 562.7L849.7 566.8L849.7 588.8L848.5 584.7ZM940.7 591.1L946.7 603.1L946.7 625.1L940.7 613.1ZM946.7 603.1L947.5 610.9L947.5 632.9L946.7 625.1ZM911.4 647.4L912.3 649.3L912.3 671.3L911.4 669.4ZM924.2 645.5L925.2 647.4L925.2 669.4L924.2 667.5ZM956.2 600.6L959.4 606.1L959.4 628.1L956.2 622.6ZM954.4 596.0L956.2 600.6L956.2 622.6L954.4 618.0ZM951.8 592.0L954.4 596.0L954.4 618.0L951.8 614.0ZM1006.6 595.0L1012.1 601.7L1012.1 623.7L1006.6 617.0ZM1012.1 601.7L1016.2 608.9L1016.2 630.9L1012.1 623.7ZM1016.2 608.9L1019.0 617.2L1019.0 639.2L1016.2 630.9ZM1019.0 617.2L1021.4 625.4L1021.4 647.4L1019.0 639.2ZM1021.4 625.4L1022.5 634.4L1022.5 656.4L1021.4 647.4ZM914.3 680.6L918.0 686.2L918.0 708.2L914.3 702.6ZM982.0 719.4L984.6 724.0L984.6 746.0L982.0 741.4ZM984.6 724.0L985.2 730.1L985.2 752.1L984.6 746.0ZM958.8 749.5L960.8 753.5L960.8 775.5L958.8 771.5ZM957.0 744.7L958.8 749.5L958.8 771.5L957.0 766.7ZM955.3 739.3L957.0 744.7L957.0 766.7L955.3 761.3ZM953.8 733.2L955.3 739.3L955.3 761.3L953.8 755.2ZM951.8 727.5L953.8 733.2L953.8 755.2L951.8 749.5ZM949.1 722.5L951.8 727.5L951.8 749.5L949.1 744.5ZM946.0 717.9L949.1 722.5L949.1 744.5L946.0 739.9ZM943.2 713.7L946.0 717.9L946.0 739.9L943.2 735.7ZM939.9 709.3L943.2 713.7L943.2 735.7L939.9 731.3ZM936.9 705.3L939.9 709.3L939.9 731.3L936.9 727.3ZM1148.0 490.2L1150.7 495.8L1150.7 517.8L1148.0 512.2ZM941.8 543.2L946.7 548.9L946.7 570.9L941.8 565.2ZM938.1 536.8L941.8 543.2L941.8 565.2L938.1 558.8ZM936.2 530.1L938.1 536.8L938.1 558.8L936.2 552.1ZM934.6 524.8L936.2 530.1L936.2 552.1L934.6 546.8ZM925.2 529.9L925.8 534.7L925.8 556.7L925.2 551.9ZM925.8 534.7L927.7 540.3L927.7 562.3L925.8 556.7ZM927.7 540.3L930.6 546.5L930.6 568.5L927.7 562.3ZM930.6 546.5L934.6 552.3L934.6 574.3L930.6 568.5ZM957.0 562.7L957.8 566.9L957.8 588.9L957.0 584.7ZM907.3 563.6L907.9 569.6L907.9 591.6L907.3 585.6ZM905.3 557.5L907.3 563.6L907.3 585.6L905.3 579.5ZM902.3 551.6L905.3 557.5L905.3 579.5L902.3 573.6ZM899.3 545.4L902.3 551.6L902.3 573.6L899.3 567.4ZM897.9 538.7L899.3 545.4L899.3 567.4L897.9 560.7ZM897.6 531.7L897.9 538.7L897.9 560.7L897.6 553.7ZM922.9 473.3L924.1 476.5L924.1 498.5L922.9 495.3ZM921.5 469.6L922.9 473.3L922.9 495.3L921.5 491.6ZM963.9 436.5L965.4 440.3L965.4 462.3L963.9 458.5ZM965.4 440.3L965.9 442.2L965.9 464.2L965.4 462.3ZM959.4 455.8L961.4 458.7L961.4 480.7L959.4 477.8ZM978.4 433.4L979.1 435.8L979.1 457.8L978.4 455.4ZM1175.6 443.7L1179.1 447.9L1179.1 469.9L1175.6 465.7ZM1179.1 447.9L1182.7 452.7L1182.7 474.7L1179.1 469.9ZM1182.7 452.7L1185.9 457.5L1185.9 479.5L1182.7 474.7ZM1185.9 457.5L1188.9 462.2L1188.9 484.2L1185.9 479.5ZM1188.9 462.2L1191.6 466.8L1191.6 488.8L1188.9 484.2ZM1191.6 466.8L1193.7 471.3L1193.7 493.3L1191.6 488.8ZM1193.7 471.3L1195.2 475.6L1195.2 497.6L1193.7 493.3ZM1195.2 475.6L1196.1 479.6L1196.1 501.6L1195.2 497.6ZM1196.1 479.6L1196.2 483.3L1196.2 505.3L1196.1 501.6ZM1190.6 475.4L1191.2 479.5L1191.2 501.5L1190.6 497.4ZM1189.4 471.3L1190.6 475.4L1190.6 497.4L1189.4 493.3ZM1187.5 467.2L1189.4 471.3L1189.4 493.3L1187.5 489.2ZM1185.1 463.1L1187.5 467.2L1187.5 489.2L1185.1 485.1ZM1182.5 459.2L1185.1 463.1L1185.1 485.1L1182.5 481.2ZM1179.7 455.6L1182.5 459.2L1182.5 481.2L1179.7 477.6ZM1176.7 452.1L1179.7 455.6L1179.7 477.6L1176.7 474.1ZM1166.1 440.3L1168.1 442.8L1168.1 464.8L1166.1 462.3ZM1164.9 437.8L1166.1 440.3L1166.1 462.3L1164.9 459.8ZM1164.4 435.7L1164.9 437.8L1164.9 459.8L1164.4 457.7ZM1157.5 486.8L1160.0 489.7L1160.0 511.7L1157.5 508.8ZM1160.0 489.7L1160.4 491.1L1160.4 513.1L1160.0 511.7Z" fill="#4a4944"/>
<path d="M532.9 550.2v22.0M530.3 546.8v22.0M532.9 542.5v22.0M542.4 536.5v22.0M554.4 531.3v22.0M563.1 527.8v22.0M573.4 527.0v22.0M583.7 525.8v22.0M602.7 517.5v22.0M640.6 503.7v22.0M692.2 489.1v22.0M726.7 483.1v22.0M752.5 480.5v22.0M778.4 481.3v22.0M799.0 485.1v22.0M830.0 490.8v22.0M860.6 497.2v22.0M877.8 496.4v22.0M895.0 492.9v22.0M908.8 489.5v22.0M919.1 480.0v22.0M912.1 473.0v22.0M913.8 462.7v22.0M920.7 448.9v22.0M929.3 438.6v22.0M943.1 431.7v22.0M960.3 429.1v22.0M955.5 421.3v22.0M954.3 413.6v22.0M958.6 407.6v22.0M972.3 400.7v22.0M989.6 395.8v22.0M1020.6 392.9v22.0M1055.0 392.9v22.0M1089.5 396.4v22.0M1109.3 399.8v22.0M1109.3 393.8v22.0M1113.6 391.2v22.0M1122.2 391.2v22.0M1126.5 394.6v22.0M1125.6 407.6v22.0M1141.1 413.6v22.0M1161.8 422.2v22.0M1182.5 433.4v22.0M1198.0 448.9v22.0M1208.3 462.7v22.0M1212.6 474.7v22.0M1211.7 485.1v22.0M1204.9 495.4v22.0M1192.8 503.1v22.0M1175.6 507.5v22.0M1163.5 508.3v22.0M1148.0 516.1v22.0M1130.8 529.8v22.0M1129.1 535.0v22.0M1115.3 541.9v22.0M1077.4 559.1v22.0M1043.0 565.2v22.0M1020.3 571.3v22.0M1001.3 571.3v22.0M1000.5 579.9v22.0M1013.4 597.2v22.0M1028.9 616.1v22.0M1034.9 636.8v22.0M1034.1 650.6v22.0M1025.4 673.0v22.0M1015.1 702.2v22.0M1014.7 718.8v22.0M1008.7 730.9v22.0M998.4 746.4v22.0M984.6 758.5v22.0M955.3 768.8v22.0M929.5 773.1v22.0M912.2 774.0v22.0M895.0 769.7v22.0M877.8 761.9v22.0M853.7 746.4v22.0M839.9 732.6v22.0M827.8 718.8v22.0M822.7 703.3v22.0M789.9 693.9v22.0M784.8 699.0v22.0M774.4 700.8v22.0M765.8 698.2v22.0M761.7 690.8v22.0M761.3 681.7v22.0M761.3 681.7v22.0M761.3 681.7v22.0M648.3 599.3v22.0M648.3 599.3v22.0M648.3 599.3v22.0M640.6 595.0v22.0M633.7 586.4v22.0M625.1 570.9v22.0M609.6 553.7v22.0M588.9 541.6v22.0M569.9 536.1v22.0M559.6 539.9v22.0M549.3 547.6v22.0M538.9 551.1v22.0M592.3 533.9v22.0M692.2 499.4v22.0M778.4 489.9v22.0M828.3 500.6v22.0M812.8 529.6v22.0M778.4 553.7v22.0M709.5 576.1v22.0M649.2 593.3v22.0M638.8 558.8v22.0M606.1 538.2v22.0M695.8 620.0v22.0M742.5 595.5v22.0M763.7 605.0v22.0M763.7 607.0v22.0M742.5 597.7v22.0M695.8 622.2v22.0M775.0 604.2v22.0M787.5 601.7v22.0M784.2 608.3v22.0M801.3 569.2v22.0M811.7 559.7v22.0M811.7 570.0v22.0M827.5 571.7v22.0M836.7 563.3v22.0M836.7 575.0v22.0M822.5 585.0v22.0M816.7 598.3v22.0M809.2 590.0v22.0M805.0 576.7v22.0M799.2 605.8v22.0M805.0 604.2v22.0M818.3 605.8v22.0M818.3 610.0v22.0M814.2 613.3v22.0M800.0 611.7v22.0M771.7 686.7v22.0M788.3 675.8v22.0M775.0 693.3v22.0M772.7 618.9v22.0M796.8 612.4v22.0M833.0 622.4v22.0M857.1 648.2v22.0M891.6 677.5v22.0M929.5 703.3v22.0M951.8 730.9v22.0M957.4 755.0v22.0M938.1 762.8v22.0M903.6 761.9v22.0M869.2 743.0v22.0M841.6 713.7v22.0M824.4 684.4v22.0M808.9 675.8v22.0M779.6 664.6v22.0M760.3 655.1v22.0M764.1 629.3v22.0M830.4 542.3v22.0M877.8 505.8v22.0M889.8 511.0v22.0M886.9 536.8v22.0M893.3 561.0v22.0M891.6 590.2v22.0M846.8 592.0v22.0M843.3 579.9v22.0M848.5 562.7v22.0M833.0 555.8v22.0M830.4 544.6v22.0M880.4 609.5v22.0M902.8 590.2v22.0M914.0 588.2v22.0M940.7 591.1v22.0M946.7 603.1v22.0M947.5 610.9v22.0M920.0 629.0v22.0M913.1 588.9v22.0M988.9 571.3v22.0M963.9 608.3v22.0M951.8 592.0v22.0M914.3 680.6v22.0M946.7 651.7v22.0M969.1 624.1v22.0M1012.1 601.7v22.0M1022.5 634.4v22.0M1010.4 682.7v22.0M999.2 720.6v22.0M972.5 710.2v22.0M938.1 691.3v22.0M938.1 703.3v22.0M984.6 724.0v22.0M963.9 755.0v22.0M951.8 727.5v22.0M965.4 460.1v22.0M996.5 448.9v22.0M1055.0 443.7v22.0M1123.9 473.0v22.0M1148.9 500.6v22.0M1123.9 519.5v22.0M1099.8 542.8v22.0M1051.6 562.6v22.0M1015.6 564.4v22.0M998.4 561.0v22.0M946.7 548.9v22.0M934.6 524.8v22.0M925.2 529.9v22.0M934.6 552.3v22.0M957.0 562.7v22.0M939.8 575.6v22.0M903.6 579.9v22.0M905.3 557.5v22.0M897.6 531.7v22.0M905.3 509.3v22.0M912.2 498.9v22.0M924.1 476.5v22.0M924.1 457.5v22.0M939.6 439.4v22.0M961.1 433.4v22.0M965.1 444.6v22.0M980.1 431.7v22.0M1018.8 435.1v22.0M993.0 438.6v22.0M1165.2 435.1v22.0M1185.9 457.5v22.0M1196.2 483.3v22.0M1185.9 492.8v22.0M1189.4 471.3v22.0M1173.9 448.9v22.0M1099.8 449.8v22.0M1137.7 469.6v22.0M1158.4 490.2v22.0M1115.3 459.2v22.0" stroke="#101010" stroke-width=".8" opacity=".8"/>
<path d="M532.9 550.2L531.1 548.7L530.3 546.8L530.9 544.8L532.9 542.5L537.1 539.5L542.4 536.5L548.5 533.7L554.4 531.3L558.9 529.3L563.1 527.8L568.1 527.3L573.4 527.0L578.0 526.8L583.7 525.8L591.5 522.4L602.7 517.5L619.6 511.0L640.6 503.7L666.6 495.9L692.2 489.1L711.1 485.3L726.7 483.1L740.1 481.3L752.5 480.5L765.8 480.5L778.4 481.3L788.4 482.9L799.0 485.1L813.9 487.8L830.0 490.8L846.2 494.4L860.6 497.2L870.0 497.4L877.8 496.4L886.6 494.8L895.0 492.9L902.3 491.6L908.8 489.5L915.3 485.0L919.1 480.0L916.1 476.6L912.1 473.0L912.0 468.3L913.8 462.7L916.8 455.8L920.7 448.9L924.5 443.3L929.3 438.6L935.6 434.6L943.1 431.7L952.8 430.4L960.3 429.1L959.0 425.5L955.5 421.3L954.3 417.4L954.3 413.6L955.5 410.5L958.6 407.6L964.6 404.0L972.3 400.7L979.9 398.0L989.6 395.8L1004.0 394.1L1020.6 392.9L1037.6 392.5L1055.0 392.9L1073.2 394.4L1089.5 396.4L1101.5 398.7L1109.3 399.8L1110.2 397.2L1109.3 393.8L1110.9 392.1L1113.6 391.2L1117.9 390.8L1122.2 391.2L1124.9 392.1L1126.5 394.6L1125.4 400.9L1125.6 407.6L1132.0 410.8L1141.1 413.6L1151.1 417.6L1161.8 422.2L1172.5 427.4L1182.5 433.4L1190.9 441.0L1198.0 448.9L1203.8 456.0L1208.3 462.7L1211.2 468.9L1212.6 474.7L1212.9 480.0L1211.7 485.1L1209.0 490.4L1204.9 495.4L1199.5 499.6L1192.8 503.1L1184.2 505.7L1175.6 507.5L1169.4 507.7L1163.5 508.3L1156.1 511.4L1148.0 516.1L1138.5 523.1L1130.8 529.8L1129.7 532.9L1129.1 535.0L1124.4 537.7L1115.3 541.9L1097.6 550.6L1077.4 559.1L1059.2 562.8L1043.0 565.2L1030.7 568.6L1020.3 571.3L1009.4 571.2L1001.3 571.3L998.9 574.6L1000.5 579.9L1005.9 587.9L1013.4 597.2L1021.6 606.4L1028.9 616.1L1032.9 626.8L1034.9 636.8L1035.4 643.6L1034.1 650.6L1030.3 660.8L1025.4 673.0L1019.8 688.0L1015.1 702.2L1014.6 711.6L1014.7 718.8L1012.3 724.9L1008.7 730.9L1004.0 738.6L998.4 746.4L992.6 752.8L984.6 758.5L970.7 764.1L955.3 768.8L941.6 771.5L929.5 773.1L920.3 774.1L912.2 774.0L903.6 772.3L895.0 769.7L886.8 766.5L877.8 761.9L865.5 754.5L853.7 746.4L846.0 739.4L839.9 732.6L833.3 725.8L827.8 718.8L826.5 710.8L822.7 703.3L806.3 697.3L789.9 693.9L786.0 695.8L784.8 699.0L779.8 700.4L774.4 700.8L769.8 700.0L765.8 698.2L763.2 694.9L761.7 690.8L761.2 685.8L761.3 681.7L761.3 681.1L761.3 681.7L768.4 686.8L761.3 681.7L704.8 640.5L648.3 599.3L641.3 594.2L648.3 599.3L648.8 599.6L648.3 599.3L644.9 597.7L640.6 595.0L637.2 591.4L633.7 586.4L629.9 579.2L625.1 570.9L618.1 562.1L609.6 553.7L599.4 546.9L588.9 541.6L578.8 537.9L569.9 536.1L564.2 537.2L559.6 539.9L554.4 543.8L549.3 547.6L543.8 549.9L538.9 551.1L535.4 551.1ZM592.3 533.9L598.0 530.5L608.5 526.2L623.3 521.0L644.1 514.0L669.1 506.0L692.2 499.4L711.4 495.1L728.6 492.2L743.9 490.3L757.0 489.4L768.1 489.5L778.4 489.9L787.7 490.7L796.0 491.8L804.2 493.4L813.4 495.4L822.4 497.7L828.3 500.6L829.5 504.0L827.7 507.9L824.9 512.3L821.7 517.8L817.5 523.9L812.8 529.6L807.4 534.5L801.5 539.1L795.6 543.3L790.5 547.0L785.4 550.2L778.4 553.7L768.1 557.6L756.0 561.8L743.9 565.7L732.4 569.3L720.9 572.7L709.5 576.1L697.7 579.6L685.9 583.2L675.0 586.4L664.9 589.8L655.7 592.9L649.2 593.3L646.8 589.3L647.0 582.7L646.6 576.1L644.7 570.1L642.2 564.2L638.8 558.8L634.3 554.3L628.9 550.4L623.3 546.8L617.6 543.5L611.7 540.6L606.1 538.2L599.6 536.7L593.5 535.8ZM695.8 620.0L742.5 595.5L763.7 605.0L763.7 607.0L742.5 597.7L695.8 622.2ZM782.7 572.5L781.9 574.3L779.7 575.7L776.7 576.2L773.7 575.7L771.5 574.3L770.7 572.5L771.5 570.7L773.7 569.3L776.7 568.8L779.7 569.3L781.9 570.7ZM775.0 604.2L776.1 602.7L777.9 601.2L780.0 600.3L782.6 600.3L785.4 600.8L787.5 601.7L788.5 602.9L788.7 604.5L788.3 605.8L787.4 606.9L786.0 607.8L784.2 608.3L781.7 608.4L778.9 608.1L776.7 607.5L775.4 606.6L774.8 605.4ZM801.3 569.2L801.6 567.0L802.6 565.1L804.2 563.3L806.6 561.6L809.6 560.1L811.7 559.7L811.8 560.8L811.0 562.9L810.5 565.0L810.5 566.8L810.8 568.5L811.7 570.0L813.4 571.1L815.7 572.0L818.3 572.5L821.4 572.6L824.7 572.4L827.5 571.7L829.2 570.2L830.4 568.4L831.7 566.7L833.3 565.1L835.1 563.8L836.7 563.3L838.0 564.3L839.2 566.2L839.7 568.3L839.3 570.5L838.3 572.9L836.7 575.0L834.2 576.5L831.1 577.7L828.3 579.2L826.1 580.9L824.2 582.8L822.5 585.0L820.9 587.7L819.5 590.7L818.3 593.3L817.8 595.4L817.6 597.2L816.7 598.3L814.0 599.0L810.7 599.1L808.3 598.3L807.9 596.1L808.5 593.0L809.2 590.0L809.7 587.7L810.2 585.5L810.0 583.3L808.7 581.1L806.8 579.0L805.0 576.7L803.4 574.2L802.0 571.6ZM799.2 605.8L805.0 604.2L818.3 605.8L818.3 610.0L814.2 613.3L800.0 611.7ZM771.7 686.7L773.0 681.0L775.5 674.3L778.3 670.0L781.9 669.9L785.9 672.4L788.3 675.8L788.2 680.6L786.5 686.4L784.2 690.8L781.3 692.9L777.8 693.6L775.0 693.3L773.1 692.2L771.8 690.0ZM772.7 618.9L774.2 616.8L775.3 615.3L777.9 614.1L783.1 613.1L789.8 612.4L796.8 612.4L804.4 613.2L812.3 614.7L819.2 616.4L824.6 618.1L829.0 620.0L833.0 622.4L836.6 625.3L839.8 628.7L843.3 632.7L847.7 637.6L852.4 643.0L857.1 648.2L861.5 652.9L865.8 657.3L870.9 662.0L877.3 667.1L884.4 672.4L891.6 677.5L898.6 682.3L905.6 686.9L912.2 691.3L918.4 695.4L924.1 699.3L929.5 703.3L934.5 707.8L939.2 712.5L943.2 717.1L946.7 721.8L949.5 726.4L951.8 730.9L953.7 735.0L955.1 739.0L956.2 743.0L957.0 747.3L957.6 751.6L957.4 755.0L956.3 757.1L954.5 758.2L951.8 759.3L948.0 760.6L943.2 761.8L938.1 762.8L932.6 763.6L926.7 764.3L920.8 764.5L915.1 764.1L909.4 763.2L903.6 761.9L897.9 760.1L892.1 757.9L886.4 755.0L880.6 751.4L874.8 747.3L869.2 743.0L863.8 738.6L858.5 734.0L853.7 729.2L849.3 724.1L845.4 718.9L841.6 713.7L837.9 708.4L834.4 703.2L831.3 698.2L828.6 693.1L826.3 688.2L824.4 684.4L823.3 682.5L822.6 681.8L821.0 681.0L817.8 679.4L813.7 677.6L808.9 675.8L802.8 674.1L795.9 672.4L789.9 670.6L786.1 668.5L783.3 666.3L779.6 664.6L773.8 663.9L767.3 663.7L762.4 662.9L760.5 660.9L760.2 658.2L760.3 655.1L760.4 651.5L760.9 647.4L761.5 643.1L762.1 638.5L762.8 633.7L764.1 629.3L766.7 625.4L769.9 621.9ZM830.4 542.3L843.4 528.8L858.8 514.4L869.0 508.7L877.8 505.8L888.4 501.9L895.9 500.3L894.2 504.5L889.8 511.0L887.7 517.8L886.4 524.8L886.2 530.9L886.9 536.8L888.7 542.9L890.7 548.9L892.3 554.9L893.3 561.0L893.1 566.7L892.4 573.0L893.0 581.5L891.6 590.2L884.6 599.0L874.3 604.0L860.2 599.3L846.8 592.0L839.0 588.3L835.6 585.4L838.4 582.8L843.3 579.9L846.9 575.8L849.4 571.3L849.7 566.8L848.5 562.7L845.5 559.7L841.6 557.5L837.3 556.6L833.0 555.8L828.8 553.5L826.1 550.6L827.8 547.4L830.4 544.6L828.9 544.8ZM880.4 609.5L902.8 590.2L914.0 588.2L940.7 591.1L946.7 603.1L947.5 610.9L920.0 629.0ZM925.2 647.4L924.2 649.3L921.7 650.7L918.3 651.2L914.8 650.7L912.3 649.3L911.4 647.4L912.3 645.5L914.8 644.1L918.3 643.6L921.7 644.1L924.2 645.5ZM913.1 588.9L925.7 585.9L946.7 581.6L970.6 574.8L988.9 571.3L986.8 579.0L977.7 590.2L970.6 600.9L963.9 608.3L959.4 606.1L956.2 600.6L954.4 596.0L951.8 592.0L946.3 589.7L938.1 588.5L922.6 588.9ZM914.3 680.6L920.1 674.7L929.5 668.0L938.9 659.8L946.7 651.7L947.3 646.1L948.4 640.5L957.0 633.5L969.1 624.1L984.1 607.5L998.4 594.0L1006.6 595.0L1012.1 601.7L1016.2 608.9L1019.0 617.2L1021.4 625.4L1022.5 634.4L1021.5 645.1L1019.0 656.8L1015.0 670.0L1010.4 682.7L1005.7 692.6L1001.8 701.6L1000.8 712.1L999.2 720.6L993.5 723.8L986.3 723.1L979.7 717.6L972.5 710.2L964.1 703.8L955.3 698.2L946.4 694.0L938.1 691.3L931.2 691.0L925.2 690.4L918.0 686.2ZM938.1 703.3L946.9 704.7L959.9 708.1L970.8 712.0L977.4 715.5L982.0 719.4L984.6 724.0L985.2 730.1L983.9 736.9L981.1 743.0L976.0 748.3L969.4 752.9L963.9 755.0L960.8 753.5L958.8 749.5L957.0 744.7L955.3 739.3L953.8 733.2L951.8 727.5L949.1 722.5L946.0 717.9L943.2 713.7L939.9 709.3L936.9 705.3ZM965.4 460.1L969.7 460.6L975.8 459.2L984.7 454.8L996.5 448.9L1012.5 441.8L1029.2 436.8L1041.3 438.5L1055.0 443.7L1077.5 452.0L1099.8 461.0L1113.1 467.0L1123.9 473.0L1137.4 481.7L1148.0 490.2L1150.7 495.8L1148.9 500.6L1144.2 505.8L1137.7 510.9L1130.8 515.1L1123.9 519.5L1117.8 525.4L1111.8 531.6L1106.6 537.3L1099.8 542.8L1088.5 547.6L1075.7 552.2L1062.6 558.1L1051.6 562.6L1047.6 562.2L1043.1 561.0L1029.6 562.7L1015.6 564.4L1008.1 563.9L1003.5 562.7L1002.7 562.0L998.4 561.0L979.0 558.7L958.7 555.8L950.8 552.8L946.7 548.9L941.8 543.2L938.1 536.8L936.2 530.1L934.6 524.8L931.6 523.2L928.6 523.9L926.3 526.2L925.2 529.9L925.8 534.7L927.7 540.3L930.6 546.5L934.6 552.3L940.4 556.8L946.7 560.1L952.7 561.3L957.0 562.7L957.8 566.9L955.3 571.3L948.9 573.8L939.8 575.6L927.5 577.0L915.7 578.2L907.9 579.8L903.6 579.9L905.2 575.6L907.9 569.6L907.3 563.6L905.3 557.5L902.3 551.6L899.3 545.4L897.9 538.7L897.6 531.7L898.5 524.5L900.2 517.9L902.7 512.5L905.3 509.3L907.7 511.3L909.7 512.7L910.7 507.0L912.2 498.9L916.5 490.8L920.8 483.4L923.2 479.4L924.1 476.5L922.9 473.3L921.5 469.6L922.2 463.7L924.1 457.5L927.2 452.1L931.0 447.2L935.0 442.9L939.6 439.4L945.6 436.9L951.7 435.1L956.9 433.6L961.1 433.4L963.9 436.5L965.4 440.3L965.9 442.2L965.1 444.6L961.9 450.2L959.4 455.8L961.4 458.7ZM980.1 431.7L985.2 431.4L992.6 431.9L999.9 432.5L1007.3 433.2L1014.6 434.1L1018.8 435.1L1018.3 436.6L1014.8 438.3L1010.2 439.4L1004.9 439.5L998.7 439.0L993.0 438.6L988.2 438.5L983.9 438.4L981.0 437.7L979.1 435.8L978.4 433.4ZM1165.2 435.1L1167.9 436.8L1171.7 440.0L1175.6 443.7L1179.1 447.9L1182.7 452.7L1185.9 457.5L1188.9 462.2L1191.6 466.8L1193.7 471.3L1195.2 475.6L1196.1 479.6L1196.2 483.3L1195.1 486.8L1193.1 489.8L1191.1 492.0L1189.0 493.2L1186.9 493.6L1185.9 492.8L1187.1 490.5L1189.5 487.1L1191.1 483.3L1191.2 479.5L1190.6 475.4L1189.4 471.3L1187.5 467.2L1185.1 463.1L1182.5 459.2L1179.7 455.6L1176.7 452.1L1173.9 448.9L1171.0 445.8L1168.1 442.8L1166.1 440.3L1164.9 437.8L1164.4 435.7ZM1099.8 449.8L1103.6 450.8L1109.0 452.8L1115.3 455.8L1122.3 459.7L1130.2 464.4L1137.7 469.6L1145.2 475.6L1152.4 481.9L1157.5 486.8L1160.0 489.7L1160.4 491.1L1158.4 490.2L1153.1 485.9L1145.5 479.3L1137.7 473.0L1130.1 467.9L1122.3 463.1L1115.3 459.2L1109.0 456.5L1103.6 454.7L1099.8 453.2L1098.1 451.5L1098.1 450.1Z" fill="none" stroke="#101010" stroke-width="1.2" transform="translate(0 22.0)"/>
</g>
<path d="M592.3 533.9L598.0 530.5L608.5 526.2L623.3 521.0L644.1 514.0L669.1 506.0L692.2 499.4L711.4 495.1L728.6 492.2L743.9 490.3L757.0 489.4L768.1 489.5L778.4 489.9L787.7 490.7L796.0 491.8L804.2 493.4L813.4 495.4L822.4 497.7L828.3 500.6L829.5 504.0L827.7 507.9L824.9 512.3L821.7 517.8L817.5 523.9L812.8 529.6L807.4 534.5L801.5 539.1L795.6 543.3L790.5 547.0L785.4 550.2L778.4 553.7L768.1 557.6L756.0 561.8L743.9 565.7L732.4 569.3L720.9 572.7L709.5 576.1L697.7 579.6L685.9 583.2L675.0 586.4L664.9 589.8L655.7 592.9L649.2 593.3L646.8 589.3L647.0 582.7L646.6 576.1L644.7 570.1L642.2 564.2L638.8 558.8L634.3 554.3L628.9 550.4L623.3 546.8L617.6 543.5L611.7 540.6L606.1 538.2L599.6 536.7L593.5 535.8ZM695.8 620.0L742.5 595.5L763.7 605.0L763.7 607.0L742.5 597.7L695.8 622.2ZM782.7 572.5L781.9 574.3L779.7 575.7L776.7 576.2L773.7 575.7L771.5 574.3L770.7 572.5L771.5 570.7L773.7 569.3L776.7 568.8L779.7 569.3L781.9 570.7ZM775.0 604.2L776.1 602.7L777.9 601.2L780.0 600.3L782.6 600.3L785.4 600.8L787.5 601.7L788.5 602.9L788.7 604.5L788.3 605.8L787.4 606.9L786.0 607.8L784.2 608.3L781.7 608.4L778.9 608.1L776.7 607.5L775.4 606.6L774.8 605.4ZM801.3 569.2L801.6 567.0L802.6 565.1L804.2 563.3L806.6 561.6L809.6 560.1L811.7 559.7L811.8 560.8L811.0 562.9L810.5 565.0L810.5 566.8L810.8 568.5L811.7 570.0L813.4 571.1L815.7 572.0L818.3 572.5L821.4 572.6L824.7 572.4L827.5 571.7L829.2 570.2L830.4 568.4L831.7 566.7L833.3 565.1L835.1 563.8L836.7 563.3L838.0 564.3L839.2 566.2L839.7 568.3L839.3 570.5L838.3 572.9L836.7 575.0L834.2 576.5L831.1 577.7L828.3 579.2L826.1 580.9L824.2 582.8L822.5 585.0L820.9 587.7L819.5 590.7L818.3 593.3L817.8 595.4L817.6 597.2L816.7 598.3L814.0 599.0L810.7 599.1L808.3 598.3L807.9 596.1L808.5 593.0L809.2 590.0L809.7 587.7L810.2 585.5L810.0 583.3L808.7 581.1L806.8 579.0L805.0 576.7L803.4 574.2L802.0 571.6ZM799.2 605.8L805.0 604.2L818.3 605.8L818.3 610.0L814.2 613.3L800.0 611.7ZM771.7 686.7L773.0 681.0L775.5 674.3L778.3 670.0L781.9 669.9L785.9 672.4L788.3 675.8L788.2 680.6L786.5 686.4L784.2 690.8L781.3 692.9L777.8 693.6L775.0 693.3L773.1 692.2L771.8 690.0ZM772.7 618.9L774.2 616.8L775.3 615.3L777.9 614.1L783.1 613.1L789.8 612.4L796.8 612.4L804.4 613.2L812.3 614.7L819.2 616.4L824.6 618.1L829.0 620.0L833.0 622.4L836.6 625.3L839.8 628.7L843.3 632.7L847.7 637.6L852.4 643.0L857.1 648.2L861.5 652.9L865.8 657.3L870.9 662.0L877.3 667.1L884.4 672.4L891.6 677.5L898.6 682.3L905.6 686.9L912.2 691.3L918.4 695.4L924.1 699.3L929.5 703.3L934.5 707.8L939.2 712.5L943.2 717.1L946.7 721.8L949.5 726.4L951.8 730.9L953.7 735.0L955.1 739.0L956.2 743.0L957.0 747.3L957.6 751.6L957.4 755.0L956.3 757.1L954.5 758.2L951.8 759.3L948.0 760.6L943.2 761.8L938.1 762.8L932.6 763.6L926.7 764.3L920.8 764.5L915.1 764.1L909.4 763.2L903.6 761.9L897.9 760.1L892.1 757.9L886.4 755.0L880.6 751.4L874.8 747.3L869.2 743.0L863.8 738.6L858.5 734.0L853.7 729.2L849.3 724.1L845.4 718.9L841.6 713.7L837.9 708.4L834.4 703.2L831.3 698.2L828.6 693.1L826.3 688.2L824.4 684.4L823.3 682.5L822.6 681.8L821.0 681.0L817.8 679.4L813.7 677.6L808.9 675.8L802.8 674.1L795.9 672.4L789.9 670.6L786.1 668.5L783.3 666.3L779.6 664.6L773.8 663.9L767.3 663.7L762.4 662.9L760.5 660.9L760.2 658.2L760.3 655.1L760.4 651.5L760.9 647.4L761.5 643.1L762.1 638.5L762.8 633.7L764.1 629.3L766.7 625.4L769.9 621.9ZM830.4 542.3L843.4 528.8L858.8 514.4L869.0 508.7L877.8 505.8L888.4 501.9L895.9 500.3L894.2 504.5L889.8 511.0L887.7 517.8L886.4 524.8L886.2 530.9L886.9 536.8L888.7 542.9L890.7 548.9L892.3 554.9L893.3 561.0L893.1 566.7L892.4 573.0L893.0 581.5L891.6 590.2L884.6 599.0L874.3 604.0L860.2 599.3L846.8 592.0L839.0 588.3L835.6 585.4L838.4 582.8L843.3 579.9L846.9 575.8L849.4 571.3L849.7 566.8L848.5 562.7L845.5 559.7L841.6 557.5L837.3 556.6L833.0 555.8L828.8 553.5L826.1 550.6L827.8 547.4L830.4 544.6L828.9 544.8ZM880.4 609.5L902.8 590.2L914.0 588.2L940.7 591.1L946.7 603.1L947.5 610.9L920.0 629.0ZM925.2 647.4L924.2 649.3L921.7 650.7L918.3 651.2L914.8 650.7L912.3 649.3L911.4 647.4L912.3 645.5L914.8 644.1L918.3 643.6L921.7 644.1L924.2 645.5ZM913.1 588.9L925.7 585.9L946.7 581.6L970.6 574.8L988.9 571.3L986.8 579.0L977.7 590.2L970.6 600.9L963.9 608.3L959.4 606.1L956.2 600.6L954.4 596.0L951.8 592.0L946.3 589.7L938.1 588.5L922.6 588.9ZM914.3 680.6L920.1 674.7L929.5 668.0L938.9 659.8L946.7 651.7L947.3 646.1L948.4 640.5L957.0 633.5L969.1 624.1L984.1 607.5L998.4 594.0L1006.6 595.0L1012.1 601.7L1016.2 608.9L1019.0 617.2L1021.4 625.4L1022.5 634.4L1021.5 645.1L1019.0 656.8L1015.0 670.0L1010.4 682.7L1005.7 692.6L1001.8 701.6L1000.8 712.1L999.2 720.6L993.5 723.8L986.3 723.1L979.7 717.6L972.5 710.2L964.1 703.8L955.3 698.2L946.4 694.0L938.1 691.3L931.2 691.0L925.2 690.4L918.0 686.2ZM938.1 703.3L946.9 704.7L959.9 708.1L970.8 712.0L977.4 715.5L982.0 719.4L984.6 724.0L985.2 730.1L983.9 736.9L981.1 743.0L976.0 748.3L969.4 752.9L963.9 755.0L960.8 753.5L958.8 749.5L957.0 744.7L955.3 739.3L953.8 733.2L951.8 727.5L949.1 722.5L946.0 717.9L943.2 713.7L939.9 709.3L936.9 705.3ZM965.4 460.1L969.7 460.6L975.8 459.2L984.7 454.8L996.5 448.9L1012.5 441.8L1029.2 436.8L1041.3 438.5L1055.0 443.7L1077.5 452.0L1099.8 461.0L1113.1 467.0L1123.9 473.0L1137.4 481.7L1148.0 490.2L1150.7 495.8L1148.9 500.6L1144.2 505.8L1137.7 510.9L1130.8 515.1L1123.9 519.5L1117.8 525.4L1111.8 531.6L1106.6 537.3L1099.8 542.8L1088.5 547.6L1075.7 552.2L1062.6 558.1L1051.6 562.6L1047.6 562.2L1043.1 561.0L1029.6 562.7L1015.6 564.4L1008.1 563.9L1003.5 562.7L1002.7 562.0L998.4 561.0L979.0 558.7L958.7 555.8L950.8 552.8L946.7 548.9L941.8 543.2L938.1 536.8L936.2 530.1L934.6 524.8L931.6 523.2L928.6 523.9L926.3 526.2L925.2 529.9L925.8 534.7L927.7 540.3L930.6 546.5L934.6 552.3L940.4 556.8L946.7 560.1L952.7 561.3L957.0 562.7L957.8 566.9L955.3 571.3L948.9 573.8L939.8 575.6L927.5 577.0L915.7 578.2L907.9 579.8L903.6 579.9L905.2 575.6L907.9 569.6L907.3 563.6L905.3 557.5L902.3 551.6L899.3 545.4L897.9 538.7L897.6 531.7L898.5 524.5L900.2 517.9L902.7 512.5L905.3 509.3L907.7 511.3L909.7 512.7L910.7 507.0L912.2 498.9L916.5 490.8L920.8 483.4L923.2 479.4L924.1 476.5L922.9 473.3L921.5 469.6L922.2 463.7L924.1 457.5L927.2 452.1L931.0 447.2L935.0 442.9L939.6 439.4L945.6 436.9L951.7 435.1L956.9 433.6L961.1 433.4L963.9 436.5L965.4 440.3L965.9 442.2L965.1 444.6L961.9 450.2L959.4 455.8L961.4 458.7ZM980.1 431.7L985.2 431.4L992.6 431.9L999.9 432.5L1007.3 433.2L1014.6 434.1L1018.8 435.1L1018.3 436.6L1014.8 438.3L1010.2 439.4L1004.9 439.5L998.7 439.0L993.0 438.6L988.2 438.5L983.9 438.4L981.0 437.7L979.1 435.8L978.4 433.4ZM1165.2 435.1L1167.9 436.8L1171.7 440.0L1175.6 443.7L1179.1 447.9L1182.7 452.7L1185.9 457.5L1188.9 462.2L1191.6 466.8L1193.7 471.3L1195.2 475.6L1196.1 479.6L1196.2 483.3L1195.1 486.8L1193.1 489.8L1191.1 492.0L1189.0 493.2L1186.9 493.6L1185.9 492.8L1187.1 490.5L1189.5 487.1L1191.1 483.3L1191.2 479.5L1190.6 475.4L1189.4 471.3L1187.5 467.2L1185.1 463.1L1182.5 459.2L1179.7 455.6L1176.7 452.1L1173.9 448.9L1171.0 445.8L1168.1 442.8L1166.1 440.3L1164.9 437.8L1164.4 435.7ZM1099.8 449.8L1103.6 450.8L1109.0 452.8L1115.3 455.8L1122.3 459.7L1130.2 464.4L1137.7 469.6L1145.2 475.6L1152.4 481.9L1157.5 486.8L1160.0 489.7L1160.4 491.1L1158.4 490.2L1153.1 485.9L1145.5 479.3L1137.7 473.0L1130.1 467.9L1122.3 463.1L1115.3 459.2L1109.0 456.5L1103.6 454.7L1099.8 453.2L1098.1 451.5L1098.1 450.1Z" fill="#6e6a61" stroke="#101010" stroke-width="1.7" stroke-linejoin="round"/>
<path d="M532.9 550.2L531.1 548.7L530.3 546.8L530.9 544.8L532.9 542.5L537.1 539.5L542.4 536.5L548.5 533.7L554.4 531.3L558.9 529.3L563.1 527.8L568.1 527.3L573.4 527.0L578.0 526.8L583.7 525.8L591.5 522.4L602.7 517.5L619.6 511.0L640.6 503.7L666.6 495.9L692.2 489.1L711.1 485.3L726.7 483.1L740.1 481.3L752.5 480.5L765.8 480.5L778.4 481.3L788.4 482.9L799.0 485.1L813.9 487.8L830.0 490.8L846.2 494.4L860.6 497.2L870.0 497.4L877.8 496.4L886.6 494.8L895.0 492.9L902.3 491.6L908.8 489.5L915.3 485.0L919.1 480.0L916.1 476.6L912.1 473.0L912.0 468.3L913.8 462.7L916.8 455.8L920.7 448.9L924.5 443.3L929.3 438.6L935.6 434.6L943.1 431.7L952.8 430.4L960.3 429.1L959.0 425.5L955.5 421.3L954.3 417.4L954.3 413.6L955.5 410.5L958.6 407.6L964.6 404.0L972.3 400.7L979.9 398.0L989.6 395.8L1004.0 394.1L1020.6 392.9L1037.6 392.5L1055.0 392.9L1073.2 394.4L1089.5 396.4L1101.5 398.7L1109.3 399.8L1110.2 397.2L1109.3 393.8L1110.9 392.1L1113.6 391.2L1117.9 390.8L1122.2 391.2L1124.9 392.1L1126.5 394.6L1125.4 400.9L1125.6 407.6L1132.0 410.8L1141.1 413.6L1151.1 417.6L1161.8 422.2L1172.5 427.4L1182.5 433.4L1190.9 441.0L1198.0 448.9L1203.8 456.0L1208.3 462.7L1211.2 468.9L1212.6 474.7L1212.9 480.0L1211.7 485.1L1209.0 490.4L1204.9 495.4L1199.5 499.6L1192.8 503.1L1184.2 505.7L1175.6 507.5L1169.4 507.7L1163.5 508.3L1156.1 511.4L1148.0 516.1L1138.5 523.1L1130.8 529.8L1129.7 532.9L1129.1 535.0L1124.4 537.7L1115.3 541.9L1097.6 550.6L1077.4 559.1L1059.2 562.8L1043.0 565.2L1030.7 568.6L1020.3 571.3L1009.4 571.2L1001.3 571.3L998.9 574.6L1000.5 579.9L1005.9 587.9L1013.4 597.2L1021.6 606.4L1028.9 616.1L1032.9 626.8L1034.9 636.8L1035.4 643.6L1034.1 650.6L1030.3 660.8L1025.4 673.0L1019.8 688.0L1015.1 702.2L1014.6 711.6L1014.7 718.8L1012.3 724.9L1008.7 730.9L1004.0 738.6L998.4 746.4L992.6 752.8L984.6 758.5L970.7 764.1L955.3 768.8L941.6 771.5L929.5 773.1L920.3 774.1L912.2 774.0L903.6 772.3L895.0 769.7L886.8 766.5L877.8 761.9L865.5 754.5L853.7 746.4L846.0 739.4L839.9 732.6L833.3 725.8L827.8 718.8L826.5 710.8L822.7 703.3L806.3 697.3L789.9 693.9L786.0 695.8L784.8 699.0L779.8 700.4L774.4 700.8L769.8 700.0L765.8 698.2L763.2 694.9L761.7 690.8L761.2 685.8L761.3 681.7L761.3 681.1L761.3 681.7L768.4 686.8L761.3 681.7L704.8 640.5L648.3 599.3L641.3 594.2L648.3 599.3L648.8 599.6L648.3 599.3L644.9 597.7L640.6 595.0L637.2 591.4L633.7 586.4L629.9 579.2L625.1 570.9L618.1 562.1L609.6 553.7L599.4 546.9L588.9 541.6L578.8 537.9L569.9 536.1L564.2 537.2L559.6 539.9L554.4 543.8L549.3 547.6L543.8 549.9L538.9 551.1L535.4 551.1Z" fill="none" stroke="#101010" stroke-width="1.8" stroke-linejoin="round"/>
<clipPath id="k0"><path d="M646.6 576.1L648.7 571.4L653.0 566.2L657.8 560.6L663.1 553.2L668.8 545.5L672.4 541.6L672.6 544.0L670.6 550.3L668.1 557.1L665.4 564.1L662.2 571.6L659.5 577.8L658.2 582.3L657.5 585.4L656.1 586.4L652.6 584.6L648.4 580.6Z"/></clipPath>
<path d="M646.6 576.1L648.7 571.4L653.0 566.2L657.8 560.6L663.1 553.2L668.8 545.5L672.4 541.6L672.6 544.0L670.6 550.3L668.1 557.1L665.4 564.1L662.2 571.6L659.5 577.8L658.2 582.3L657.5 585.4L656.1 586.4L652.6 584.6L648.4 580.6Z" fill="#636058"/>
<g clip-path="url(#k0)"><path d="M646.6 576.1L648.7 571.4L648.7 593.4L646.6 598.1ZM648.7 571.4L653.0 566.2L653.0 588.2L648.7 593.4ZM653.0 566.2L657.8 560.6L657.8 582.6L653.0 588.2ZM657.8 560.6L663.1 553.2L663.1 575.2L657.8 582.6ZM663.1 553.2L668.8 545.5L668.8 567.5L663.1 575.2ZM670.6 550.3L672.6 544.0L672.6 566.0L670.6 572.3ZM668.1 557.1L670.6 550.3L670.6 572.3L668.1 579.1ZM665.4 564.1L668.1 557.1L668.1 579.1L665.4 586.1ZM662.2 571.6L665.4 564.1L665.4 586.1L662.2 593.6ZM659.5 577.8L662.2 571.6L662.2 593.6L659.5 599.8ZM658.2 582.3L659.5 577.8L659.5 599.8L658.2 604.3ZM657.5 585.4L658.2 582.3L658.2 604.3L657.5 607.4ZM668.8 545.5L672.4 541.6L672.4 563.6L668.8 567.5ZM656.1 586.4L657.5 585.4L657.5 607.4L656.1 608.4ZM672.4 541.6L672.6 544.0L672.6 566.0L672.4 563.6ZM646.6 576.1L648.4 580.6L648.4 602.6L646.6 598.1ZM652.6 584.6L656.1 586.4L656.1 608.4L652.6 606.6ZM648.4 580.6L652.6 584.6L652.6 606.6L648.4 602.6Z" fill="#3c3b37" stroke="#3c3b37" stroke-width=".6"/><path d="M646.6 576.1L648.7 571.4L648.7 593.4L646.6 598.1ZM648.7 571.4L653.0 566.2L653.0 588.2L648.7 593.4ZM653.0 566.2L657.8 560.6L657.8 582.6L653.0 588.2ZM657.8 560.6L663.1 553.2L663.1 575.2L657.8 582.6ZM663.1 553.2L668.8 545.5L668.8 567.5L663.1 575.2ZM670.6 550.3L672.6 544.0L672.6 566.0L670.6 572.3ZM668.1 557.1L670.6 550.3L670.6 572.3L668.1 579.1ZM665.4 564.1L668.1 557.1L668.1 579.1L665.4 586.1ZM662.2 571.6L665.4 564.1L665.4 586.1L662.2 593.6ZM659.5 577.8L662.2 571.6L662.2 593.6L659.5 599.8ZM658.2 582.3L659.5 577.8L659.5 599.8L658.2 604.3ZM657.5 585.4L658.2 582.3L658.2 604.3L657.5 607.4Z" fill="#302f2b"/><path d="M668.8 545.5L672.4 541.6L672.4 563.6L668.8 567.5ZM656.1 586.4L657.5 585.4L657.5 607.4L656.1 608.4Z" fill="#363531"/><path d="M652.6 584.6L656.1 586.4L656.1 608.4L652.6 606.6ZM648.4 580.6L652.6 584.6L652.6 606.6L648.4 602.6Z" fill="#43423d"/><path d="M672.4 541.6L672.6 544.0L672.6 566.0L672.4 563.6ZM646.6 576.1L648.4 580.6L648.4 602.6L646.6 598.1Z" fill="#4a4944"/><path d="M646.6 576.1L648.7 571.4L653.0 566.2L657.8 560.6L663.1 553.2L668.8 545.5L672.4 541.6L672.6 544.0L670.6 550.3L668.1 557.1L665.4 564.1L662.2 571.6L659.5 577.8L658.2 582.3L657.5 585.4L656.1 586.4L652.6 584.6L648.4 580.6Z" fill="none" stroke="#101010" stroke-width=".9" transform="translate(0 22.0)"/></g>
<path d="M646.6 576.1L648.7 571.4L653.0 566.2L657.8 560.6L663.1 553.2L668.8 545.5L672.4 541.6L672.6 544.0L670.6 550.3L668.1 557.1L665.4 564.1L662.2 571.6L659.5 577.8L658.2 582.3L657.5 585.4L656.1 586.4L652.6 584.6L648.4 580.6Z" fill="none" stroke="#101010" stroke-width="1.5" stroke-linejoin="round"/>
<clipPath id="k1"><path d="M659.5 577.8L673.8 570.3L692.2 560.6L712.6 544.1L726.7 533.0L718.0 545.2L709.5 558.8L728.2 550.9L744.8 542.5L732.5 550.7L709.5 564.0L681.3 578.1L657.8 588.1L653.4 585.5Z"/></clipPath>
<path d="M659.5 577.8L673.8 570.3L692.2 560.6L712.6 544.1L726.7 533.0L718.0 545.2L709.5 558.8L728.2 550.9L744.8 542.5L732.5 550.7L709.5 564.0L681.3 578.1L657.8 588.1L653.4 585.5Z" fill="#636058"/>
<g clip-path="url(#k1)"><path d="M659.5 577.8L673.8 570.3L673.8 592.3L659.5 599.8ZM673.8 570.3L692.2 560.6L692.2 582.6L673.8 592.3ZM692.2 560.6L712.6 544.1L712.6 566.1L692.2 582.6ZM712.6 544.1L726.7 533.0L726.7 555.0L712.6 566.1ZM709.5 558.8L728.2 550.9L728.2 572.9L709.5 580.8ZM728.2 550.9L744.8 542.5L744.8 564.5L728.2 572.9ZM732.5 550.7L744.8 542.5L744.8 564.5L732.5 572.7ZM709.5 564.0L732.5 550.7L732.5 572.7L709.5 586.0ZM681.3 578.1L709.5 564.0L709.5 586.0L681.3 600.1ZM657.8 588.1L681.3 578.1L681.3 600.1L657.8 610.1ZM718.0 545.2L726.7 533.0L726.7 555.0L718.0 567.2ZM709.5 558.8L718.0 545.2L718.0 567.2L709.5 580.8ZM653.4 585.5L659.5 577.8L659.5 599.8L653.4 607.5ZM653.4 585.5L657.8 588.1L657.8 610.1L653.4 607.5Z" fill="#3c3b37" stroke="#3c3b37" stroke-width=".6"/><path d="M718.0 545.2L726.7 533.0L726.7 555.0L718.0 567.2ZM709.5 558.8L718.0 545.2L718.0 567.2L709.5 580.8ZM653.4 585.5L659.5 577.8L659.5 599.8L653.4 607.5Z" fill="#302f2b"/><path d="M659.5 577.8L673.8 570.3L673.8 592.3L659.5 599.8ZM673.8 570.3L692.2 560.6L692.2 582.6L673.8 592.3ZM692.2 560.6L712.6 544.1L712.6 566.1L692.2 582.6ZM712.6 544.1L726.7 533.0L726.7 555.0L712.6 566.1ZM709.5 558.8L728.2 550.9L728.2 572.9L709.5 580.8ZM728.2 550.9L744.8 542.5L744.8 564.5L728.2 572.9ZM732.5 550.7L744.8 542.5L744.8 564.5L732.5 572.7ZM709.5 564.0L732.5 550.7L732.5 572.7L709.5 586.0ZM681.3 578.1L709.5 564.0L709.5 586.0L681.3 600.1ZM657.8 588.1L681.3 578.1L681.3 600.1L657.8 610.1Z" fill="#363531"/><path d="M653.4 585.5L657.8 588.1L657.8 610.1L653.4 607.5Z" fill="#43423d"/><path d="M659.5 577.8L673.8 570.3L692.2 560.6L712.6 544.1L726.7 533.0L718.0 545.2L709.5 558.8L728.2 550.9L744.8 542.5L732.5 550.7L709.5 564.0L681.3 578.1L657.8 588.1L653.4 585.5Z" fill="none" stroke="#101010" stroke-width=".9" transform="translate(0 22.0)"/></g>
<path d="M659.5 577.8L673.8 570.3L692.2 560.6L712.6 544.1L726.7 533.0L718.0 545.2L709.5 558.8L728.2 550.9L744.8 542.5L732.5 550.7L709.5 564.0L681.3 578.1L657.8 588.1L653.4 585.5Z" fill="none" stroke="#101010" stroke-width="1.5" stroke-linejoin="round"/>
<clipPath id="k2"><path d="M582.9 557.1L585.7 557.8L591.5 560.1L597.5 563.1L602.9 567.0L608.3 571.6L613.0 576.1L616.6 580.4L619.4 584.6L621.6 588.1L623.6 590.6L625.0 592.3L625.1 593.3L623.0 593.7L619.6 593.3L616.5 591.6L614.3 587.8L612.3 582.7L609.6 577.8L605.4 573.5L600.6 569.4L595.8 565.7L590.4 562.1L585.1 558.8Z"/></clipPath>
<path d="M582.9 557.1L585.7 557.8L591.5 560.1L597.5 563.1L602.9 567.0L608.3 571.6L613.0 576.1L616.6 580.4L619.4 584.6L621.6 588.1L623.6 590.6L625.0 592.3L625.1 593.3L623.0 593.7L619.6 593.3L616.5 591.6L614.3 587.8L612.3 582.7L609.6 577.8L605.4 573.5L600.6 569.4L595.8 565.7L590.4 562.1L585.1 558.8Z" fill="#636058"/>
<g clip-path="url(#k2)"><path d="M582.9 557.1L585.7 557.8L585.7 579.8L582.9 579.1ZM623.0 593.7L625.1 593.3L625.1 615.3L623.0 615.7ZM619.6 593.3L623.0 593.7L623.0 615.7L619.6 615.3ZM585.7 557.8L591.5 560.1L591.5 582.1L585.7 579.8ZM591.5 560.1L597.5 563.1L597.5 585.1L591.5 582.1ZM597.5 563.1L602.9 567.0L602.9 589.0L597.5 585.1ZM602.9 567.0L608.3 571.6L608.3 593.6L602.9 589.0ZM608.3 571.6L613.0 576.1L613.0 598.1L608.3 593.6ZM616.5 591.6L619.6 593.3L619.6 615.3L616.5 613.6ZM605.4 573.5L609.6 577.8L609.6 599.8L605.4 595.5ZM600.6 569.4L605.4 573.5L605.4 595.5L600.6 591.4ZM595.8 565.7L600.6 569.4L600.6 591.4L595.8 587.7ZM590.4 562.1L595.8 565.7L595.8 587.7L590.4 584.1ZM585.1 558.8L590.4 562.1L590.4 584.1L585.1 580.8ZM582.9 557.1L585.1 558.8L585.1 580.8L582.9 579.1ZM613.0 576.1L616.6 580.4L616.6 602.4L613.0 598.1ZM616.6 580.4L619.4 584.6L619.4 606.6L616.6 602.4ZM619.4 584.6L621.6 588.1L621.6 610.1L619.4 606.6ZM621.6 588.1L623.6 590.6L623.6 612.6L621.6 610.1ZM623.6 590.6L625.0 592.3L625.0 614.3L623.6 612.6ZM625.0 592.3L625.1 593.3L625.1 615.3L625.0 614.3ZM614.3 587.8L616.5 591.6L616.5 613.6L614.3 609.8ZM612.3 582.7L614.3 587.8L614.3 609.8L612.3 604.7ZM609.6 577.8L612.3 582.7L612.3 604.7L609.6 599.8Z" fill="#3c3b37" stroke="#3c3b37" stroke-width=".6"/><path d="M585.7 557.8L591.5 560.1L591.5 582.1L585.7 579.8ZM591.5 560.1L597.5 563.1L597.5 585.1L591.5 582.1ZM597.5 563.1L602.9 567.0L602.9 589.0L597.5 585.1ZM602.9 567.0L608.3 571.6L608.3 593.6L602.9 589.0ZM608.3 571.6L613.0 576.1L613.0 598.1L608.3 593.6ZM616.5 591.6L619.6 593.3L619.6 615.3L616.5 613.6ZM605.4 573.5L609.6 577.8L609.6 599.8L605.4 595.5ZM600.6 569.4L605.4 573.5L605.4 595.5L600.6 591.4ZM595.8 565.7L600.6 569.4L600.6 591.4L595.8 587.7ZM590.4 562.1L595.8 565.7L595.8 587.7L590.4 584.1ZM585.1 558.8L590.4 562.1L590.4 584.1L585.1 580.8ZM582.9 557.1L585.1 558.8L585.1 580.8L582.9 579.1Z" fill="#43423d"/><path d="M613.0 576.1L616.6 580.4L616.6 602.4L613.0 598.1ZM616.6 580.4L619.4 584.6L619.4 606.6L616.6 602.4ZM619.4 584.6L621.6 588.1L621.6 610.1L619.4 606.6ZM621.6 588.1L623.6 590.6L623.6 612.6L621.6 610.1ZM623.6 590.6L625.0 592.3L625.0 614.3L623.6 612.6ZM625.0 592.3L625.1 593.3L625.1 615.3L625.0 614.3ZM614.3 587.8L616.5 591.6L616.5 613.6L614.3 609.8ZM612.3 582.7L614.3 587.8L614.3 609.8L612.3 604.7ZM609.6 577.8L612.3 582.7L612.3 604.7L609.6 599.8Z" fill="#4a4944"/><path d="M582.9 557.1L585.7 557.8L591.5 560.1L597.5 563.1L602.9 567.0L608.3 571.6L613.0 576.1L616.6 580.4L619.4 584.6L621.6 588.1L623.6 590.6L625.0 592.3L625.1 593.3L623.0 593.7L619.6 593.3L616.5 591.6L614.3 587.8L612.3 582.7L609.6 577.8L605.4 573.5L600.6 569.4L595.8 565.7L590.4 562.1L585.1 558.8Z" fill="none" stroke="#101010" stroke-width=".9" transform="translate(0 22.0)"/></g>
<path d="M582.9 557.1L585.7 557.8L591.5 560.1L597.5 563.1L602.9 567.0L608.3 571.6L613.0 576.1L616.6 580.4L619.4 584.6L621.6 588.1L623.6 590.6L625.0 592.3L625.1 593.3L623.0 593.7L619.6 593.3L616.5 591.6L614.3 587.8L612.3 582.7L609.6 577.8L605.4 573.5L600.6 569.4L595.8 565.7L590.4 562.1L585.1 558.8Z" fill="none" stroke="#101010" stroke-width="1.5" stroke-linejoin="round"/>
<clipPath id="k3"><path d="M773.3 620.3L808.3 622.0L796.7 624.2L773.3 625.0Z"/></clipPath>
<path d="M773.3 620.3L808.3 622.0L796.7 624.2L773.3 625.0Z" fill="#636058"/>
<g clip-path="url(#k3)"><path d="M773.3 620.3L808.3 622.0L808.3 644.0L773.3 642.3ZM796.7 624.2L808.3 622.0L808.3 644.0L796.7 646.2ZM773.3 625.0L796.7 624.2L796.7 646.2L773.3 647.0Z" fill="#3c3b37" stroke="#3c3b37" stroke-width=".6"/><path d="M773.3 620.3L808.3 622.0L796.7 624.2L773.3 625.0Z" fill="none" stroke="#101010" stroke-width=".9" transform="translate(0 22.0)"/></g>
<path d="M773.3 620.3L808.3 622.0L796.7 624.2L773.3 625.0Z" fill="none" stroke="#101010" stroke-width="1.5" stroke-linejoin="round"/>
<clipPath id="k4"><path d="M766.7 635.0L798.3 636.3L788.3 638.3L766.7 638.7Z"/></clipPath>
<path d="M766.7 635.0L798.3 636.3L788.3 638.3L766.7 638.7Z" fill="#636058"/>
<g clip-path="url(#k4)"><path d="M766.7 635.0L798.3 636.3L798.3 658.3L766.7 657.0ZM788.3 638.3L798.3 636.3L798.3 658.3L788.3 660.3ZM766.7 638.7L788.3 638.3L788.3 660.3L766.7 660.7Z" fill="#3c3b37" stroke="#3c3b37" stroke-width=".6"/><path d="M766.7 635.0L798.3 636.3L788.3 638.3L766.7 638.7Z" fill="none" stroke="#101010" stroke-width=".9" transform="translate(0 22.0)"/></g>
<path d="M766.7 635.0L798.3 636.3L788.3 638.3L766.7 638.7Z" fill="none" stroke="#101010" stroke-width="1.5" stroke-linejoin="round"/>
<clipPath id="k5"><path d="M763.3 648.3L792.5 650.0L783.3 652.0L763.7 652.0Z"/></clipPath>
<path d="M763.3 648.3L792.5 650.0L783.3 652.0L763.7 652.0Z" fill="#636058"/>
<g clip-path="url(#k5)"><path d="M763.3 648.3L792.5 650.0L792.5 672.0L763.3 670.3ZM783.3 652.0L792.5 650.0L792.5 672.0L783.3 674.0ZM763.7 652.0L783.3 652.0L783.3 674.0L763.7 674.0ZM763.3 648.3L763.7 652.0L763.7 674.0L763.3 670.3Z" fill="#3c3b37" stroke="#3c3b37" stroke-width=".6"/><path d="M763.3 648.3L763.7 652.0L763.7 674.0L763.3 670.3Z" fill="#4a4944"/><path d="M763.3 648.3L792.5 650.0L783.3 652.0L763.7 652.0Z" fill="none" stroke="#101010" stroke-width=".9" transform="translate(0 22.0)"/></g>
<path d="M763.3 648.3L792.5 650.0L783.3 652.0L763.7 652.0Z" fill="none" stroke="#101010" stroke-width="1.5" stroke-linejoin="round"/>
<clipPath id="k6"><path d="M1018.8 455.8L1020.6 454.5L1023.4 453.2L1027.5 452.3L1033.1 452.1L1039.8 452.2L1046.4 453.2L1052.5 455.2L1058.5 458.0L1063.6 461.0L1068.0 463.9L1071.7 466.9L1074.0 469.6L1074.6 471.7L1073.9 473.5L1072.2 474.7L1069.6 475.5L1066.0 475.7L1061.9 474.7L1057.1 471.8L1051.8 467.8L1046.4 464.4L1041.0 462.4L1035.7 461.1L1030.9 460.1L1026.8 459.4L1023.2 458.9L1020.6 458.4L1019.0 457.6L1018.3 456.7Z"/></clipPath>
<path d="M1018.8 455.8L1020.6 454.5L1023.4 453.2L1027.5 452.3L1033.1 452.1L1039.8 452.2L1046.4 453.2L1052.5 455.2L1058.5 458.0L1063.6 461.0L1068.0 463.9L1071.7 466.9L1074.0 469.6L1074.6 471.7L1073.9 473.5L1072.2 474.7L1069.6 475.5L1066.0 475.7L1061.9 474.7L1057.1 471.8L1051.8 467.8L1046.4 464.4L1041.0 462.4L1035.7 461.1L1030.9 460.1L1026.8 459.4L1023.2 458.9L1020.6 458.4L1019.0 457.6L1018.3 456.7Z" fill="#636058"/>
<g clip-path="url(#k6)"><path d="M1018.8 455.8L1020.6 454.5L1020.6 476.5L1018.8 477.8ZM1020.6 454.5L1023.4 453.2L1023.4 475.2L1020.6 476.5ZM1072.2 474.7L1073.9 473.5L1073.9 495.5L1072.2 496.7ZM1069.6 475.5L1072.2 474.7L1072.2 496.7L1069.6 497.5ZM1023.4 453.2L1027.5 452.3L1027.5 474.3L1023.4 475.2ZM1027.5 452.3L1033.1 452.1L1033.1 474.1L1027.5 474.3ZM1033.1 452.1L1039.8 452.2L1039.8 474.2L1033.1 474.1ZM1039.8 452.2L1046.4 453.2L1046.4 475.2L1039.8 474.2ZM1066.0 475.7L1069.6 475.5L1069.6 497.5L1066.0 497.7ZM1061.9 474.7L1066.0 475.7L1066.0 497.7L1061.9 496.7ZM1035.7 461.1L1041.0 462.4L1041.0 484.4L1035.7 483.1ZM1030.9 460.1L1035.7 461.1L1035.7 483.1L1030.9 482.1ZM1026.8 459.4L1030.9 460.1L1030.9 482.1L1026.8 481.4ZM1023.2 458.9L1026.8 459.4L1026.8 481.4L1023.2 480.9ZM1020.6 458.4L1023.2 458.9L1023.2 480.9L1020.6 480.4ZM1046.4 453.2L1052.5 455.2L1052.5 477.2L1046.4 475.2ZM1052.5 455.2L1058.5 458.0L1058.5 480.0L1052.5 477.2ZM1058.5 458.0L1063.6 461.0L1063.6 483.0L1058.5 480.0ZM1063.6 461.0L1068.0 463.9L1068.0 485.9L1063.6 483.0ZM1068.0 463.9L1071.7 466.9L1071.7 488.9L1068.0 485.9ZM1057.1 471.8L1061.9 474.7L1061.9 496.7L1057.1 493.8ZM1051.8 467.8L1057.1 471.8L1057.1 493.8L1051.8 489.8ZM1046.4 464.4L1051.8 467.8L1051.8 489.8L1046.4 486.4ZM1041.0 462.4L1046.4 464.4L1046.4 486.4L1041.0 484.4ZM1019.0 457.6L1020.6 458.4L1020.6 480.4L1019.0 479.6ZM1071.7 466.9L1074.0 469.6L1074.0 491.6L1071.7 488.9ZM1074.0 469.6L1074.6 471.7L1074.6 493.7L1074.0 491.6ZM1018.3 456.7L1019.0 457.6L1019.0 479.6L1018.3 478.7ZM1073.9 473.5L1074.6 471.7L1074.6 493.7L1073.9 495.5ZM1018.3 456.7L1018.8 455.8L1018.8 477.8L1018.3 478.7Z" fill="#3c3b37" stroke="#3c3b37" stroke-width=".6"/><path d="M1073.9 473.5L1074.6 471.7L1074.6 493.7L1073.9 495.5ZM1018.3 456.7L1018.8 455.8L1018.8 477.8L1018.3 478.7Z" fill="#302f2b"/><path d="M1018.8 455.8L1020.6 454.5L1020.6 476.5L1018.8 477.8ZM1020.6 454.5L1023.4 453.2L1023.4 475.2L1020.6 476.5ZM1072.2 474.7L1073.9 473.5L1073.9 495.5L1072.2 496.7ZM1069.6 475.5L1072.2 474.7L1072.2 496.7L1069.6 497.5Z" fill="#363531"/><path d="M1046.4 453.2L1052.5 455.2L1052.5 477.2L1046.4 475.2ZM1052.5 455.2L1058.5 458.0L1058.5 480.0L1052.5 477.2ZM1058.5 458.0L1063.6 461.0L1063.6 483.0L1058.5 480.0ZM1063.6 461.0L1068.0 463.9L1068.0 485.9L1063.6 483.0ZM1068.0 463.9L1071.7 466.9L1071.7 488.9L1068.0 485.9ZM1057.1 471.8L1061.9 474.7L1061.9 496.7L1057.1 493.8ZM1051.8 467.8L1057.1 471.8L1057.1 493.8L1051.8 489.8ZM1046.4 464.4L1051.8 467.8L1051.8 489.8L1046.4 486.4ZM1041.0 462.4L1046.4 464.4L1046.4 486.4L1041.0 484.4ZM1019.0 457.6L1020.6 458.4L1020.6 480.4L1019.0 479.6Z" fill="#43423d"/><path d="M1071.7 466.9L1074.0 469.6L1074.0 491.6L1071.7 488.9ZM1074.0 469.6L1074.6 471.7L1074.6 493.7L1074.0 491.6ZM1018.3 456.7L1019.0 457.6L1019.0 479.6L1018.3 478.7Z" fill="#4a4944"/><path d="M1018.8 455.8L1020.6 454.5L1023.4 453.2L1027.5 452.3L1033.1 452.1L1039.8 452.2L1046.4 453.2L1052.5 455.2L1058.5 458.0L1063.6 461.0L1068.0 463.9L1071.7 466.9L1074.0 469.6L1074.6 471.7L1073.9 473.5L1072.2 474.7L1069.6 475.5L1066.0 475.7L1061.9 474.7L1057.1 471.8L1051.8 467.8L1046.4 464.4L1041.0 462.4L1035.7 461.1L1030.9 460.1L1026.8 459.4L1023.2 458.9L1020.6 458.4L1019.0 457.6L1018.3 456.7Z" fill="none" stroke="#101010" stroke-width=".9" transform="translate(0 22.0)"/></g>
<path d="M1018.8 455.8L1020.6 454.5L1023.4 453.2L1027.5 452.3L1033.1 452.1L1039.8 452.2L1046.4 453.2L1052.5 455.2L1058.5 458.0L1063.6 461.0L1068.0 463.9L1071.7 466.9L1074.0 469.6L1074.6 471.7L1073.9 473.5L1072.2 474.7L1069.6 475.5L1066.0 475.7L1061.9 474.7L1057.1 471.8L1051.8 467.8L1046.4 464.4L1041.0 462.4L1035.7 461.1L1030.9 460.1L1026.8 459.4L1023.2 458.9L1020.6 458.4L1019.0 457.6L1018.3 456.7Z" fill="none" stroke="#101010" stroke-width="1.5" stroke-linejoin="round"/>
<clipPath id="k7"><path d="M1012.0 468.7L1013.6 467.7L1016.8 466.7L1020.6 466.1L1024.9 466.2L1029.8 466.8L1034.3 467.8L1038.3 469.5L1041.9 471.6L1044.7 473.9L1046.6 476.5L1047.7 479.3L1048.1 481.6L1047.5 483.5L1046.2 484.8L1044.7 485.1L1043.1 483.2L1041.4 480.2L1039.5 478.2L1037.3 478.1L1035.0 479.1L1032.6 479.9L1030.2 480.5L1027.8 481.1L1025.7 480.8L1024.4 478.9L1023.4 476.2L1022.3 473.9L1020.7 472.4L1018.9 471.3L1017.1 470.4L1014.9 469.8L1012.7 469.3Z"/></clipPath>
<path d="M1012.0 468.7L1013.6 467.7L1016.8 466.7L1020.6 466.1L1024.9 466.2L1029.8 466.8L1034.3 467.8L1038.3 469.5L1041.9 471.6L1044.7 473.9L1046.6 476.5L1047.7 479.3L1048.1 481.6L1047.5 483.5L1046.2 484.8L1044.7 485.1L1043.1 483.2L1041.4 480.2L1039.5 478.2L1037.3 478.1L1035.0 479.1L1032.6 479.9L1030.2 480.5L1027.8 481.1L1025.7 480.8L1024.4 478.9L1023.4 476.2L1022.3 473.9L1020.7 472.4L1018.9 471.3L1017.1 470.4L1014.9 469.8L1012.7 469.3Z" fill="#636058"/>
<g clip-path="url(#k7)"><path d="M1012.0 468.7L1013.6 467.7L1013.6 489.7L1012.0 490.7ZM1013.6 467.7L1016.8 466.7L1016.8 488.7L1013.6 489.7ZM1046.2 484.8L1047.5 483.5L1047.5 505.5L1046.2 506.8ZM1035.0 479.1L1037.3 478.1L1037.3 500.1L1035.0 501.1ZM1032.6 479.9L1035.0 479.1L1035.0 501.1L1032.6 501.9ZM1030.2 480.5L1032.6 479.9L1032.6 501.9L1030.2 502.5ZM1016.8 466.7L1020.6 466.1L1020.6 488.1L1016.8 488.7ZM1020.6 466.1L1024.9 466.2L1024.9 488.2L1020.6 488.1ZM1024.9 466.2L1029.8 466.8L1029.8 488.8L1024.9 488.2ZM1029.8 466.8L1034.3 467.8L1034.3 489.8L1029.8 488.8ZM1044.7 485.1L1046.2 484.8L1046.2 506.8L1044.7 507.1ZM1037.3 478.1L1039.5 478.2L1039.5 500.2L1037.3 500.1ZM1027.8 481.1L1030.2 480.5L1030.2 502.5L1027.8 503.1ZM1025.7 480.8L1027.8 481.1L1027.8 503.1L1025.7 502.8ZM1012.7 469.3L1014.9 469.8L1014.9 491.8L1012.7 491.3ZM1034.3 467.8L1038.3 469.5L1038.3 491.5L1034.3 489.8ZM1038.3 469.5L1041.9 471.6L1041.9 493.6L1038.3 491.5ZM1041.9 471.6L1044.7 473.9L1044.7 495.9L1041.9 493.6ZM1039.5 478.2L1041.4 480.2L1041.4 502.2L1039.5 500.2ZM1020.7 472.4L1022.3 473.9L1022.3 495.9L1020.7 494.4ZM1018.9 471.3L1020.7 472.4L1020.7 494.4L1018.9 493.3ZM1017.1 470.4L1018.9 471.3L1018.9 493.3L1017.1 492.4ZM1014.9 469.8L1017.1 470.4L1017.1 492.4L1014.9 491.8ZM1012.0 468.7L1012.7 469.3L1012.7 491.3L1012.0 490.7ZM1044.7 473.9L1046.6 476.5L1046.6 498.5L1044.7 495.9ZM1046.6 476.5L1047.7 479.3L1047.7 501.3L1046.6 498.5ZM1047.7 479.3L1048.1 481.6L1048.1 503.6L1047.7 501.3ZM1043.1 483.2L1044.7 485.1L1044.7 507.1L1043.1 505.2ZM1041.4 480.2L1043.1 483.2L1043.1 505.2L1041.4 502.2ZM1024.4 478.9L1025.7 480.8L1025.7 502.8L1024.4 500.9ZM1023.4 476.2L1024.4 478.9L1024.4 500.9L1023.4 498.2ZM1022.3 473.9L1023.4 476.2L1023.4 498.2L1022.3 495.9ZM1047.5 483.5L1048.1 481.6L1048.1 503.6L1047.5 505.5Z" fill="#3c3b37" stroke="#3c3b37" stroke-width=".6"/><path d="M1047.5 483.5L1048.1 481.6L1048.1 503.6L1047.5 505.5Z" fill="#302f2b"/><path d="M1012.0 468.7L1013.6 467.7L1013.6 489.7L1012.0 490.7ZM1013.6 467.7L1016.8 466.7L1016.8 488.7L1013.6 489.7ZM1046.2 484.8L1047.5 483.5L1047.5 505.5L1046.2 506.8ZM1035.0 479.1L1037.3 478.1L1037.3 500.1L1035.0 501.1ZM1032.6 479.9L1035.0 479.1L1035.0 501.1L1032.6 501.9ZM1030.2 480.5L1032.6 479.9L1032.6 501.9L1030.2 502.5Z" fill="#363531"/><path d="M1034.3 467.8L1038.3 469.5L1038.3 491.5L1034.3 489.8ZM1038.3 469.5L1041.9 471.6L1041.9 493.6L1038.3 491.5ZM1041.9 471.6L1044.7 473.9L1044.7 495.9L1041.9 493.6ZM1039.5 478.2L1041.4 480.2L1041.4 502.2L1039.5 500.2ZM1020.7 472.4L1022.3 473.9L1022.3 495.9L1020.7 494.4ZM1018.9 471.3L1020.7 472.4L1020.7 494.4L1018.9 493.3ZM1017.1 470.4L1018.9 471.3L1018.9 493.3L1017.1 492.4ZM1014.9 469.8L1017.1 470.4L1017.1 492.4L1014.9 491.8ZM1012.0 468.7L1012.7 469.3L1012.7 491.3L1012.0 490.7Z" fill="#43423d"/><path d="M1044.7 473.9L1046.6 476.5L1046.6 498.5L1044.7 495.9ZM1046.6 476.5L1047.7 479.3L1047.7 501.3L1046.6 498.5ZM1047.7 479.3L1048.1 481.6L1048.1 503.6L1047.7 501.3ZM1043.1 483.2L1044.7 485.1L1044.7 507.1L1043.1 505.2ZM1041.4 480.2L1043.1 483.2L1043.1 505.2L1041.4 502.2ZM1024.4 478.9L1025.7 480.8L1025.7 502.8L1024.4 500.9ZM1023.4 476.2L1024.4 478.9L1024.4 500.9L1023.4 498.2ZM1022.3 473.9L1023.4 476.2L1023.4 498.2L1022.3 495.9Z" fill="#4a4944"/><path d="M1012.0 468.7L1013.6 467.7L1016.8 466.7L1020.6 466.1L1024.9 466.2L1029.8 466.8L1034.3 467.8L1038.3 469.5L1041.9 471.6L1044.7 473.9L1046.6 476.5L1047.7 479.3L1048.1 481.6L1047.5 483.5L1046.2 484.8L1044.7 485.1L1043.1 483.2L1041.4 480.2L1039.5 478.2L1037.3 478.1L1035.0 479.1L1032.6 479.9L1030.2 480.5L1027.8 481.1L1025.7 480.8L1024.4 478.9L1023.4 476.2L1022.3 473.9L1020.7 472.4L1018.9 471.3L1017.1 470.4L1014.9 469.8L1012.7 469.3Z" fill="none" stroke="#101010" stroke-width=".9" transform="translate(0 22.0)"/></g>
<path d="M1012.0 468.7L1013.6 467.7L1016.8 466.7L1020.6 466.1L1024.9 466.2L1029.8 466.8L1034.3 467.8L1038.3 469.5L1041.9 471.6L1044.7 473.9L1046.6 476.5L1047.7 479.3L1048.1 481.6L1047.5 483.5L1046.2 484.8L1044.7 485.1L1043.1 483.2L1041.4 480.2L1039.5 478.2L1037.3 478.1L1035.0 479.1L1032.6 479.9L1030.2 480.5L1027.8 481.1L1025.7 480.8L1024.4 478.9L1023.4 476.2L1022.3 473.9L1020.7 472.4L1018.9 471.3L1017.1 470.4L1014.9 469.8L1012.7 469.3Z" fill="none" stroke="#101010" stroke-width="1.5" stroke-linejoin="round"/>
<clipPath id="k8"><path d="M1008.5 478.2L1011.4 479.3L1015.9 481.4L1020.6 483.3L1025.7 484.7L1031.0 485.8L1034.3 486.8L1034.8 487.6L1033.3 488.3L1030.9 488.5L1027.4 488.3L1022.9 487.7L1018.8 486.8L1015.5 485.3L1012.5 483.3L1010.2 481.6L1008.6 480.0L1007.8 478.6Z"/></clipPath>
<path d="M1008.5 478.2L1011.4 479.3L1015.9 481.4L1020.6 483.3L1025.7 484.7L1031.0 485.8L1034.3 486.8L1034.8 487.6L1033.3 488.3L1030.9 488.5L1027.4 488.3L1022.9 487.7L1018.8 486.8L1015.5 485.3L1012.5 483.3L1010.2 481.6L1008.6 480.0L1007.8 478.6Z" fill="#636058"/>
<g clip-path="url(#k8)"><path d="M1008.5 478.2L1011.4 479.3L1011.4 501.3L1008.5 500.2ZM1011.4 479.3L1015.9 481.4L1015.9 503.4L1011.4 501.3ZM1015.9 481.4L1020.6 483.3L1020.6 505.3L1015.9 503.4ZM1020.6 483.3L1025.7 484.7L1025.7 506.7L1020.6 505.3ZM1031.0 485.8L1034.3 486.8L1034.3 508.8L1031.0 507.8ZM1015.5 485.3L1018.8 486.8L1018.8 508.8L1015.5 507.3ZM1012.5 483.3L1015.5 485.3L1015.5 507.3L1012.5 505.3ZM1010.2 481.6L1012.5 483.3L1012.5 505.3L1010.2 503.6ZM1008.6 480.0L1010.2 481.6L1010.2 503.6L1008.6 502.0ZM1025.7 484.7L1031.0 485.8L1031.0 507.8L1025.7 506.7ZM1030.9 488.5L1033.3 488.3L1033.3 510.3L1030.9 510.5ZM1027.4 488.3L1030.9 488.5L1030.9 510.5L1027.4 510.3ZM1022.9 487.7L1027.4 488.3L1027.4 510.3L1022.9 509.7ZM1018.8 486.8L1022.9 487.7L1022.9 509.7L1018.8 508.8ZM1034.3 486.8L1034.8 487.6L1034.8 509.6L1034.3 508.8ZM1007.8 478.6L1008.6 480.0L1008.6 502.0L1007.8 500.6ZM1033.3 488.3L1034.8 487.6L1034.8 509.6L1033.3 510.3ZM1007.8 478.6L1008.5 478.2L1008.5 500.2L1007.8 500.6Z" fill="#3c3b37" stroke="#3c3b37" stroke-width=".6"/><path d="M1033.3 488.3L1034.8 487.6L1034.8 509.6L1033.3 510.3ZM1007.8 478.6L1008.5 478.2L1008.5 500.2L1007.8 500.6Z" fill="#363531"/><path d="M1008.5 478.2L1011.4 479.3L1011.4 501.3L1008.5 500.2ZM1011.4 479.3L1015.9 481.4L1015.9 503.4L1011.4 501.3ZM1015.9 481.4L1020.6 483.3L1020.6 505.3L1015.9 503.4ZM1020.6 483.3L1025.7 484.7L1025.7 506.7L1020.6 505.3ZM1031.0 485.8L1034.3 486.8L1034.3 508.8L1031.0 507.8ZM1015.5 485.3L1018.8 486.8L1018.8 508.8L1015.5 507.3ZM1012.5 483.3L1015.5 485.3L1015.5 507.3L1012.5 505.3ZM1010.2 481.6L1012.5 483.3L1012.5 505.3L1010.2 503.6ZM1008.6 480.0L1010.2 481.6L1010.2 503.6L1008.6 502.0Z" fill="#43423d"/><path d="M1034.3 486.8L1034.8 487.6L1034.8 509.6L1034.3 508.8ZM1007.8 478.6L1008.6 480.0L1008.6 502.0L1007.8 500.6Z" fill="#4a4944"/><path d="M1008.5 478.2L1011.4 479.3L1015.9 481.4L1020.6 483.3L1025.7 484.7L1031.0 485.8L1034.3 486.8L1034.8 487.6L1033.3 488.3L1030.9 488.5L1027.4 488.3L1022.9 487.7L1018.8 486.8L1015.5 485.3L1012.5 483.3L1010.2 481.6L1008.6 480.0L1007.8 478.6Z" fill="none" stroke="#101010" stroke-width=".9" transform="translate(0 22.0)"/></g>
<path d="M1008.5 478.2L1011.4 479.3L1015.9 481.4L1020.6 483.3L1025.7 484.7L1031.0 485.8L1034.3 486.8L1034.8 487.6L1033.3 488.3L1030.9 488.5L1027.4 488.3L1022.9 487.7L1018.8 486.8L1015.5 485.3L1012.5 483.3L1010.2 481.6L1008.6 480.0L1007.8 478.6Z" fill="none" stroke="#101010" stroke-width="1.5" stroke-linejoin="round"/>
<clipPath id="k9"><path d="M989.6 464.4L1003.3 467.0L996.5 467.8Z"/></clipPath>
<path d="M989.6 464.4L1003.3 467.0L996.5 467.8Z" fill="#636058"/>
<g clip-path="url(#k9)"><path d="M989.6 464.4L1003.3 467.0L1003.3 489.0L989.6 486.4ZM996.5 467.8L1003.3 467.0L1003.3 489.0L996.5 489.8ZM989.6 464.4L996.5 467.8L996.5 489.8L989.6 486.4Z" fill="#3c3b37" stroke="#3c3b37" stroke-width=".6"/><path d="M989.6 464.4L996.5 467.8L996.5 489.8L989.6 486.4Z" fill="#43423d"/><path d="M989.6 464.4L1003.3 467.0L996.5 467.8Z" fill="none" stroke="#101010" stroke-width=".9" transform="translate(0 22.0)"/></g>
<path d="M989.6 464.4L1003.3 467.0L996.5 467.8Z" fill="none" stroke="#101010" stroke-width="1.5" stroke-linejoin="round"/>
<clipPath id="k10"><path d="M999.0 458.4L1006.8 464.4L1001.6 463.5Z"/></clipPath>
<path d="M999.0 458.4L1006.8 464.4L1001.6 463.5Z" fill="#636058"/>
<g clip-path="url(#k10)"><path d="M999.0 458.4L1006.8 464.4L1006.8 486.4L999.0 480.4ZM1001.6 463.5L1006.8 464.4L1006.8 486.4L1001.6 485.5ZM999.0 458.4L1001.6 463.5L1001.6 485.5L999.0 480.4Z" fill="#3c3b37" stroke="#3c3b37" stroke-width=".6"/><path d="M999.0 458.4L1006.8 464.4L1006.8 486.4L999.0 480.4Z" fill="#43423d"/><path d="M999.0 458.4L1001.6 463.5L1001.6 485.5L999.0 480.4Z" fill="#4a4944"/><path d="M999.0 458.4L1006.8 464.4L1001.6 463.5Z" fill="none" stroke="#101010" stroke-width=".9" transform="translate(0 22.0)"/></g>
<path d="M999.0 458.4L1006.8 464.4L1001.6 463.5Z" fill="none" stroke="#101010" stroke-width="1.5" stroke-linejoin="round"/>
<clipPath id="k11"><path d="M1096.3 492.0L1097.4 490.6L1099.2 489.3L1101.5 488.5L1104.5 488.4L1108.1 489.0L1111.8 490.2L1116.0 492.6L1120.3 495.7L1123.9 498.8L1126.4 501.8L1128.1 504.7L1129.1 507.5L1129.2 510.1L1128.6 512.6L1127.4 514.3L1125.4 515.2L1122.9 515.4L1120.5 514.3L1118.3 511.5L1116.1 507.6L1113.6 504.0L1110.2 501.3L1106.4 498.9L1103.2 497.1L1101.0 496.2L1099.3 495.9L1098.1 495.4L1097.0 494.4L1096.3 493.2Z"/></clipPath>
<path d="M1096.3 492.0L1097.4 490.6L1099.2 489.3L1101.5 488.5L1104.5 488.4L1108.1 489.0L1111.8 490.2L1116.0 492.6L1120.3 495.7L1123.9 498.8L1126.4 501.8L1128.1 504.7L1129.1 507.5L1129.2 510.1L1128.6 512.6L1127.4 514.3L1125.4 515.2L1122.9 515.4L1120.5 514.3L1118.3 511.5L1116.1 507.6L1113.6 504.0L1110.2 501.3L1106.4 498.9L1103.2 497.1L1101.0 496.2L1099.3 495.9L1098.1 495.4L1097.0 494.4L1096.3 493.2Z" fill="#636058"/>
<g clip-path="url(#k11)"><path d="M1096.3 492.0L1097.4 490.6L1097.4 512.6L1096.3 514.0ZM1128.6 512.6L1129.2 510.1L1129.2 532.1L1128.6 534.6ZM1127.4 514.3L1128.6 512.6L1128.6 534.6L1127.4 536.3ZM1096.3 493.2L1096.3 492.0L1096.3 514.0L1096.3 515.2ZM1097.4 490.6L1099.2 489.3L1099.2 511.3L1097.4 512.6ZM1099.2 489.3L1101.5 488.5L1101.5 510.5L1099.2 511.3ZM1125.4 515.2L1127.4 514.3L1127.4 536.3L1125.4 537.2ZM1101.5 488.5L1104.5 488.4L1104.5 510.4L1101.5 510.5ZM1104.5 488.4L1108.1 489.0L1108.1 511.0L1104.5 510.4ZM1122.9 515.4L1125.4 515.2L1125.4 537.2L1122.9 537.4ZM1099.3 495.9L1101.0 496.2L1101.0 518.2L1099.3 517.9ZM1108.1 489.0L1111.8 490.2L1111.8 512.2L1108.1 511.0ZM1111.8 490.2L1116.0 492.6L1116.0 514.6L1111.8 512.2ZM1116.0 492.6L1120.3 495.7L1120.3 517.7L1116.0 514.6ZM1120.3 495.7L1123.9 498.8L1123.9 520.8L1120.3 517.7ZM1120.5 514.3L1122.9 515.4L1122.9 537.4L1120.5 536.3ZM1110.2 501.3L1113.6 504.0L1113.6 526.0L1110.2 523.3ZM1106.4 498.9L1110.2 501.3L1110.2 523.3L1106.4 520.9ZM1103.2 497.1L1106.4 498.9L1106.4 520.9L1103.2 519.1ZM1101.0 496.2L1103.2 497.1L1103.2 519.1L1101.0 518.2ZM1098.1 495.4L1099.3 495.9L1099.3 517.9L1098.1 517.4ZM1097.0 494.4L1098.1 495.4L1098.1 517.4L1097.0 516.4ZM1123.9 498.8L1126.4 501.8L1126.4 523.8L1123.9 520.8ZM1126.4 501.8L1128.1 504.7L1128.1 526.7L1126.4 523.8ZM1128.1 504.7L1129.1 507.5L1129.1 529.5L1128.1 526.7ZM1129.1 507.5L1129.2 510.1L1129.2 532.1L1129.1 529.5ZM1118.3 511.5L1120.5 514.3L1120.5 536.3L1118.3 533.5ZM1116.1 507.6L1118.3 511.5L1118.3 533.5L1116.1 529.6ZM1113.6 504.0L1116.1 507.6L1116.1 529.6L1113.6 526.0ZM1096.3 493.2L1097.0 494.4L1097.0 516.4L1096.3 515.2Z" fill="#3c3b37" stroke="#3c3b37" stroke-width=".6"/><path d="M1096.3 492.0L1097.4 490.6L1097.4 512.6L1096.3 514.0ZM1128.6 512.6L1129.2 510.1L1129.2 532.1L1128.6 534.6ZM1127.4 514.3L1128.6 512.6L1128.6 534.6L1127.4 536.3ZM1096.3 493.2L1096.3 492.0L1096.3 514.0L1096.3 515.2Z" fill="#302f2b"/><path d="M1097.4 490.6L1099.2 489.3L1099.2 511.3L1097.4 512.6ZM1099.2 489.3L1101.5 488.5L1101.5 510.5L1099.2 511.3ZM1125.4 515.2L1127.4 514.3L1127.4 536.3L1125.4 537.2Z" fill="#363531"/><path d="M1108.1 489.0L1111.8 490.2L1111.8 512.2L1108.1 511.0ZM1111.8 490.2L1116.0 492.6L1116.0 514.6L1111.8 512.2ZM1116.0 492.6L1120.3 495.7L1120.3 517.7L1116.0 514.6ZM1120.3 495.7L1123.9 498.8L1123.9 520.8L1120.3 517.7ZM1120.5 514.3L1122.9 515.4L1122.9 537.4L1120.5 536.3ZM1110.2 501.3L1113.6 504.0L1113.6 526.0L1110.2 523.3ZM1106.4 498.9L1110.2 501.3L1110.2 523.3L1106.4 520.9ZM1103.2 497.1L1106.4 498.9L1106.4 520.9L1103.2 519.1ZM1101.0 496.2L1103.2 497.1L1103.2 519.1L1101.0 518.2ZM1098.1 495.4L1099.3 495.9L1099.3 517.9L1098.1 517.4ZM1097.0 494.4L1098.1 495.4L1098.1 517.4L1097.0 516.4Z" fill="#43423d"/><path d="M1123.9 498.8L1126.4 501.8L1126.4 523.8L1123.9 520.8ZM1126.4 501.8L1128.1 504.7L1128.1 526.7L1126.4 523.8ZM1128.1 504.7L1129.1 507.5L1129.1 529.5L1128.1 526.7ZM1129.1 507.5L1129.2 510.1L1129.2 532.1L1129.1 529.5ZM1118.3 511.5L1120.5 514.3L1120.5 536.3L1118.3 533.5ZM1116.1 507.6L1118.3 511.5L1118.3 533.5L1116.1 529.6ZM1113.6 504.0L1116.1 507.6L1116.1 529.6L1113.6 526.0ZM1096.3 493.2L1097.0 494.4L1097.0 516.4L1096.3 515.2Z" fill="#4a4944"/><path d="M1096.3 492.0L1097.4 490.6L1099.2 489.3L1101.5 488.5L1104.5 488.4L1108.1 489.0L1111.8 490.2L1116.0 492.6L1120.3 495.7L1123.9 498.8L1126.4 501.8L1128.1 504.7L1129.1 507.5L1129.2 510.1L1128.6 512.6L1127.4 514.3L1125.4 515.2L1122.9 515.4L1120.5 514.3L1118.3 511.5L1116.1 507.6L1113.6 504.0L1110.2 501.3L1106.4 498.9L1103.2 497.1L1101.0 496.2L1099.3 495.9L1098.1 495.4L1097.0 494.4L1096.3 493.2Z" fill="none" stroke="#101010" stroke-width=".9" transform="translate(0 22.0)"/></g>
<path d="M1096.3 492.0L1097.4 490.6L1099.2 489.3L1101.5 488.5L1104.5 488.4L1108.1 489.0L1111.8 490.2L1116.0 492.6L1120.3 495.7L1123.9 498.8L1126.4 501.8L1128.1 504.7L1129.1 507.5L1129.2 510.1L1128.6 512.6L1127.4 514.3L1125.4 515.2L1122.9 515.4L1120.5 514.3L1118.3 511.5L1116.1 507.6L1113.6 504.0L1110.2 501.3L1106.4 498.9L1103.2 497.1L1101.0 496.2L1099.3 495.9L1098.1 495.4L1097.0 494.4L1096.3 493.2Z" fill="none" stroke="#101010" stroke-width="1.5" stroke-linejoin="round"/>
<clipPath id="k12"><path d="M1077.4 503.1L1079.4 502.4L1082.5 501.6L1086.0 501.4L1090.0 502.0L1094.4 503.2L1098.1 504.9L1100.8 507.2L1102.8 510.1L1104.1 512.6L1104.5 514.8L1104.1 516.7L1103.2 517.8L1101.8 517.8L1100.0 517.0L1098.1 516.1L1096.4 514.9L1094.8 513.5L1092.9 512.6L1090.6 512.8L1088.1 513.5L1086.0 513.5L1084.6 512.1L1083.6 510.1L1082.6 508.3L1081.4 507.0L1080.1 505.8L1079.1 504.9L1078.0 504.2L1077.1 503.7Z"/></clipPath>
<path d="M1077.4 503.1L1079.4 502.4L1082.5 501.6L1086.0 501.4L1090.0 502.0L1094.4 503.2L1098.1 504.9L1100.8 507.2L1102.8 510.1L1104.1 512.6L1104.5 514.8L1104.1 516.7L1103.2 517.8L1101.8 517.8L1100.0 517.0L1098.1 516.1L1096.4 514.9L1094.8 513.5L1092.9 512.6L1090.6 512.8L1088.1 513.5L1086.0 513.5L1084.6 512.1L1083.6 510.1L1082.6 508.3L1081.4 507.0L1080.1 505.8L1079.1 504.9L1078.0 504.2L1077.1 503.7Z" fill="#636058"/>
<g clip-path="url(#k12)"><path d="M1077.4 503.1L1079.4 502.4L1079.4 524.4L1077.4 525.1ZM1088.1 513.5L1090.6 512.8L1090.6 534.8L1088.1 535.5ZM1079.4 502.4L1082.5 501.6L1082.5 523.6L1079.4 524.4ZM1082.5 501.6L1086.0 501.4L1086.0 523.4L1082.5 523.6ZM1086.0 501.4L1090.0 502.0L1090.0 524.0L1086.0 523.4ZM1101.8 517.8L1103.2 517.8L1103.2 539.8L1101.8 539.8ZM1090.6 512.8L1092.9 512.6L1092.9 534.6L1090.6 534.8ZM1086.0 513.5L1088.1 513.5L1088.1 535.5L1086.0 535.5ZM1090.0 502.0L1094.4 503.2L1094.4 525.2L1090.0 524.0ZM1094.4 503.2L1098.1 504.9L1098.1 526.9L1094.4 525.2ZM1098.1 504.9L1100.8 507.2L1100.8 529.2L1098.1 526.9ZM1100.0 517.0L1101.8 517.8L1101.8 539.8L1100.0 539.0ZM1098.1 516.1L1100.0 517.0L1100.0 539.0L1098.1 538.1ZM1096.4 514.9L1098.1 516.1L1098.1 538.1L1096.4 536.9ZM1094.8 513.5L1096.4 514.9L1096.4 536.9L1094.8 535.5ZM1092.9 512.6L1094.8 513.5L1094.8 535.5L1092.9 534.6ZM1084.6 512.1L1086.0 513.5L1086.0 535.5L1084.6 534.1ZM1081.4 507.0L1082.6 508.3L1082.6 530.3L1081.4 529.0ZM1080.1 505.8L1081.4 507.0L1081.4 529.0L1080.1 527.8ZM1079.1 504.9L1080.1 505.8L1080.1 527.8L1079.1 526.9ZM1078.0 504.2L1079.1 504.9L1079.1 526.9L1078.0 526.2ZM1077.1 503.7L1078.0 504.2L1078.0 526.2L1077.1 525.7ZM1100.8 507.2L1102.8 510.1L1102.8 532.1L1100.8 529.2ZM1102.8 510.1L1104.1 512.6L1104.1 534.6L1102.8 532.1ZM1104.1 512.6L1104.5 514.8L1104.5 536.8L1104.1 534.6ZM1083.6 510.1L1084.6 512.1L1084.6 534.1L1083.6 532.1ZM1082.6 508.3L1083.6 510.1L1083.6 532.1L1082.6 530.3ZM1104.1 516.7L1104.5 514.8L1104.5 536.8L1104.1 538.7ZM1103.2 517.8L1104.1 516.7L1104.1 538.7L1103.2 539.8ZM1077.1 503.7L1077.4 503.1L1077.4 525.1L1077.1 525.7Z" fill="#3c3b37" stroke="#3c3b37" stroke-width=".6"/><path d="M1104.1 516.7L1104.5 514.8L1104.5 536.8L1104.1 538.7ZM1103.2 517.8L1104.1 516.7L1104.1 538.7L1103.2 539.8ZM1077.1 503.7L1077.4 503.1L1077.4 525.1L1077.1 525.7Z" fill="#302f2b"/><path d="M1077.4 503.1L1079.4 502.4L1079.4 524.4L1077.4 525.1ZM1088.1 513.5L1090.6 512.8L1090.6 534.8L1088.1 535.5Z" fill="#363531"/><path d="M1090.0 502.0L1094.4 503.2L1094.4 525.2L1090.0 524.0ZM1094.4 503.2L1098.1 504.9L1098.1 526.9L1094.4 525.2ZM1098.1 504.9L1100.8 507.2L1100.8 529.2L1098.1 526.9ZM1100.0 517.0L1101.8 517.8L1101.8 539.8L1100.0 539.0ZM1098.1 516.1L1100.0 517.0L1100.0 539.0L1098.1 538.1ZM1096.4 514.9L1098.1 516.1L1098.1 538.1L1096.4 536.9ZM1094.8 513.5L1096.4 514.9L1096.4 536.9L1094.8 535.5ZM1092.9 512.6L1094.8 513.5L1094.8 535.5L1092.9 534.6ZM1084.6 512.1L1086.0 513.5L1086.0 535.5L1084.6 534.1ZM1081.4 507.0L1082.6 508.3L1082.6 530.3L1081.4 529.0ZM1080.1 505.8L1081.4 507.0L1081.4 529.0L1080.1 527.8ZM1079.1 504.9L1080.1 505.8L1080.1 527.8L1079.1 526.9ZM1078.0 504.2L1079.1 504.9L1079.1 526.9L1078.0 526.2ZM1077.1 503.7L1078.0 504.2L1078.0 526.2L1077.1 525.7Z" fill="#43423d"/><path d="M1100.8 507.2L1102.8 510.1L1102.8 532.1L1100.8 529.2ZM1102.8 510.1L1104.1 512.6L1104.1 534.6L1102.8 532.1ZM1104.1 512.6L1104.5 514.8L1104.5 536.8L1104.1 534.6ZM1083.6 510.1L1084.6 512.1L1084.6 534.1L1083.6 532.1ZM1082.6 508.3L1083.6 510.1L1083.6 532.1L1082.6 530.3Z" fill="#4a4944"/><path d="M1077.4 503.1L1079.4 502.4L1082.5 501.6L1086.0 501.4L1090.0 502.0L1094.4 503.2L1098.1 504.9L1100.8 507.2L1102.8 510.1L1104.1 512.6L1104.5 514.8L1104.1 516.7L1103.2 517.8L1101.8 517.8L1100.0 517.0L1098.1 516.1L1096.4 514.9L1094.8 513.5L1092.9 512.6L1090.6 512.8L1088.1 513.5L1086.0 513.5L1084.6 512.1L1083.6 510.1L1082.6 508.3L1081.4 507.0L1080.1 505.8L1079.1 504.9L1078.0 504.2L1077.1 503.7Z" fill="none" stroke="#101010" stroke-width=".9" transform="translate(0 22.0)"/></g>
<path d="M1077.4 503.1L1079.4 502.4L1082.5 501.6L1086.0 501.4L1090.0 502.0L1094.4 503.2L1098.1 504.9L1100.8 507.2L1102.8 510.1L1104.1 512.6L1104.5 514.8L1104.1 516.7L1103.2 517.8L1101.8 517.8L1100.0 517.0L1098.1 516.1L1096.4 514.9L1094.8 513.5L1092.9 512.6L1090.6 512.8L1088.1 513.5L1086.0 513.5L1084.6 512.1L1083.6 510.1L1082.6 508.3L1081.4 507.0L1080.1 505.8L1079.1 504.9L1078.0 504.2L1077.1 503.7Z" fill="none" stroke="#101010" stroke-width="1.5" stroke-linejoin="round"/>
<clipPath id="k13"><path d="M1072.2 510.9L1073.8 512.3L1076.3 515.2L1079.1 517.8L1083.0 519.5L1087.2 521.0L1089.5 522.1L1088.5 522.9L1085.6 523.2L1082.6 523.0L1079.6 521.7L1076.4 519.9L1074.0 517.8L1072.6 515.1L1071.9 512.2Z"/></clipPath>
<path d="M1072.2 510.9L1073.8 512.3L1076.3 515.2L1079.1 517.8L1083.0 519.5L1087.2 521.0L1089.5 522.1L1088.5 522.9L1085.6 523.2L1082.6 523.0L1079.6 521.7L1076.4 519.9L1074.0 517.8L1072.6 515.1L1071.9 512.2Z" fill="#636058"/>
<g clip-path="url(#k13)"><path d="M1072.2 510.9L1073.8 512.3L1073.8 534.3L1072.2 532.9ZM1076.3 515.2L1079.1 517.8L1079.1 539.8L1076.3 537.2ZM1079.1 517.8L1083.0 519.5L1083.0 541.5L1079.1 539.8ZM1083.0 519.5L1087.2 521.0L1087.2 543.0L1083.0 541.5ZM1087.2 521.0L1089.5 522.1L1089.5 544.1L1087.2 543.0ZM1079.6 521.7L1082.6 523.0L1082.6 545.0L1079.6 543.7ZM1076.4 519.9L1079.6 521.7L1079.6 543.7L1076.4 541.9ZM1074.0 517.8L1076.4 519.9L1076.4 541.9L1074.0 539.8ZM1073.8 512.3L1076.3 515.2L1076.3 537.2L1073.8 534.3ZM1072.6 515.1L1074.0 517.8L1074.0 539.8L1072.6 537.1ZM1071.9 512.2L1072.6 515.1L1072.6 537.1L1071.9 534.2ZM1088.5 522.9L1089.5 522.1L1089.5 544.1L1088.5 544.9ZM1085.6 523.2L1088.5 522.9L1088.5 544.9L1085.6 545.2ZM1082.6 523.0L1085.6 523.2L1085.6 545.2L1082.6 545.0ZM1071.9 512.2L1072.2 510.9L1072.2 532.9L1071.9 534.2Z" fill="#3c3b37" stroke="#3c3b37" stroke-width=".6"/><path d="M1071.9 512.2L1072.2 510.9L1072.2 532.9L1071.9 534.2Z" fill="#302f2b"/><path d="M1088.5 522.9L1089.5 522.1L1089.5 544.1L1088.5 544.9Z" fill="#363531"/><path d="M1072.2 510.9L1073.8 512.3L1073.8 534.3L1072.2 532.9ZM1076.3 515.2L1079.1 517.8L1079.1 539.8L1076.3 537.2ZM1079.1 517.8L1083.0 519.5L1083.0 541.5L1079.1 539.8ZM1083.0 519.5L1087.2 521.0L1087.2 543.0L1083.0 541.5ZM1087.2 521.0L1089.5 522.1L1089.5 544.1L1087.2 543.0ZM1079.6 521.7L1082.6 523.0L1082.6 545.0L1079.6 543.7ZM1076.4 519.9L1079.6 521.7L1079.6 543.7L1076.4 541.9ZM1074.0 517.8L1076.4 519.9L1076.4 541.9L1074.0 539.8Z" fill="#43423d"/><path d="M1073.8 512.3L1076.3 515.2L1076.3 537.2L1073.8 534.3ZM1072.6 515.1L1074.0 517.8L1074.0 539.8L1072.6 537.1ZM1071.9 512.2L1072.6 515.1L1072.6 537.1L1071.9 534.2Z" fill="#4a4944"/><path d="M1072.2 510.9L1073.8 512.3L1076.3 515.2L1079.1 517.8L1083.0 519.5L1087.2 521.0L1089.5 522.1L1088.5 522.9L1085.6 523.2L1082.6 523.0L1079.6 521.7L1076.4 519.9L1074.0 517.8L1072.6 515.1L1071.9 512.2Z" fill="none" stroke="#101010" stroke-width=".9" transform="translate(0 22.0)"/></g>
<path d="M1072.2 510.9L1073.8 512.3L1076.3 515.2L1079.1 517.8L1083.0 519.5L1087.2 521.0L1089.5 522.1L1088.5 522.9L1085.6 523.2L1082.6 523.0L1079.6 521.7L1076.4 519.9L1074.0 517.8L1072.6 515.1L1071.9 512.2Z" fill="none" stroke="#101010" stroke-width="1.5" stroke-linejoin="round"/>
<clipPath id="k14"><path d="M1079.1 458.4L1083.1 460.5L1090.4 464.9L1098.1 469.6L1106.6 474.4L1115.5 479.4L1120.5 482.5L1118.7 482.5L1112.9 480.7L1106.7 478.2L1100.9 475.1L1094.8 471.4L1089.5 467.8L1084.4 463.9L1080.1 460.0Z"/></clipPath>
<path d="M1079.1 458.4L1083.1 460.5L1090.4 464.9L1098.1 469.6L1106.6 474.4L1115.5 479.4L1120.5 482.5L1118.7 482.5L1112.9 480.7L1106.7 478.2L1100.9 475.1L1094.8 471.4L1089.5 467.8L1084.4 463.9L1080.1 460.0Z" fill="#636058"/>
<g clip-path="url(#k14)"><path d="M1079.1 458.4L1083.1 460.5L1083.1 482.5L1079.1 480.4ZM1083.1 460.5L1090.4 464.9L1090.4 486.9L1083.1 482.5ZM1090.4 464.9L1098.1 469.6L1098.1 491.6L1090.4 486.9ZM1098.1 469.6L1106.6 474.4L1106.6 496.4L1098.1 491.6ZM1106.6 474.4L1115.5 479.4L1115.5 501.4L1106.6 496.4ZM1115.5 479.4L1120.5 482.5L1120.5 504.5L1115.5 501.4ZM1112.9 480.7L1118.7 482.5L1118.7 504.5L1112.9 502.7ZM1106.7 478.2L1112.9 480.7L1112.9 502.7L1106.7 500.2ZM1100.9 475.1L1106.7 478.2L1106.7 500.2L1100.9 497.1ZM1094.8 471.4L1100.9 475.1L1100.9 497.1L1094.8 493.4ZM1089.5 467.8L1094.8 471.4L1094.8 493.4L1089.5 489.8ZM1084.4 463.9L1089.5 467.8L1089.5 489.8L1084.4 485.9ZM1080.1 460.0L1084.4 463.9L1084.4 485.9L1080.1 482.0ZM1118.7 482.5L1120.5 482.5L1120.5 504.5L1118.7 504.5ZM1079.1 458.4L1080.1 460.0L1080.1 482.0L1079.1 480.4Z" fill="#3c3b37" stroke="#3c3b37" stroke-width=".6"/><path d="M1079.1 458.4L1083.1 460.5L1083.1 482.5L1079.1 480.4ZM1083.1 460.5L1090.4 464.9L1090.4 486.9L1083.1 482.5ZM1090.4 464.9L1098.1 469.6L1098.1 491.6L1090.4 486.9ZM1098.1 469.6L1106.6 474.4L1106.6 496.4L1098.1 491.6ZM1106.6 474.4L1115.5 479.4L1115.5 501.4L1106.6 496.4ZM1115.5 479.4L1120.5 482.5L1120.5 504.5L1115.5 501.4ZM1112.9 480.7L1118.7 482.5L1118.7 504.5L1112.9 502.7ZM1106.7 478.2L1112.9 480.7L1112.9 502.7L1106.7 500.2ZM1100.9 475.1L1106.7 478.2L1106.7 500.2L1100.9 497.1ZM1094.8 471.4L1100.9 475.1L1100.9 497.1L1094.8 493.4ZM1089.5 467.8L1094.8 471.4L1094.8 493.4L1089.5 489.8ZM1084.4 463.9L1089.5 467.8L1089.5 489.8L1084.4 485.9ZM1080.1 460.0L1084.4 463.9L1084.4 485.9L1080.1 482.0Z" fill="#43423d"/><path d="M1079.1 458.4L1080.1 460.0L1080.1 482.0L1079.1 480.4Z" fill="#4a4944"/><path d="M1079.1 458.4L1083.1 460.5L1090.4 464.9L1098.1 469.6L1106.6 474.4L1115.5 479.4L1120.5 482.5L1118.7 482.5L1112.9 480.7L1106.7 478.2L1100.9 475.1L1094.8 471.4L1089.5 467.8L1084.4 463.9L1080.1 460.0Z" fill="none" stroke="#101010" stroke-width=".9" transform="translate(0 22.0)"/></g>
<path d="M1079.1 458.4L1083.1 460.5L1090.4 464.9L1098.1 469.6L1106.6 474.4L1115.5 479.4L1120.5 482.5L1118.7 482.5L1112.9 480.7L1106.7 478.2L1100.9 475.1L1094.8 471.4L1089.5 467.8L1084.4 463.9L1080.1 460.0Z" fill="none" stroke="#101010" stroke-width="1.5" stroke-linejoin="round"/>
<clipPath id="k15"><path d="M955.1 509.2L956.8 503.7L960.3 497.1L965.7 490.5L970.6 486.4L970.6 489.9L972.3 494.5L983.6 494.0L996.5 492.8L1003.8 493.6L1010.2 495.1L1020.1 497.0L1027.5 498.8L1025.2 499.5L1020.6 500.6L1018.5 503.6L1018.8 507.5L1023.8 512.0L1030.9 516.1L1038.9 518.5L1046.4 519.5L1051.6 518.5L1055.0 516.1L1055.9 512.1L1056.7 507.5L1060.5 502.9L1065.3 498.8L1070.3 495.8L1075.7 493.7L1083.3 492.5L1087.7 492.8L1081.2 495.2L1072.2 498.8L1068.0 502.9L1065.3 507.5L1063.1 512.6L1061.9 517.8L1062.7 522.0L1063.6 526.4L1062.3 532.6L1061.9 538.5L1066.6 541.5L1070.5 543.6L1068.3 545.9L1061.9 547.9L1049.8 549.4L1037.8 550.5L1031.5 552.0L1029.2 552.2L1032.6 549.3L1036.1 545.3L1032.7 541.9L1027.5 538.5L1023.4 534.9L1018.8 531.6L1013.1 528.9L1006.8 526.4L999.9 523.8L993.0 521.2L986.7 518.5L981.0 516.1L976.3 514.6L972.3 512.6L968.8 507.7L965.4 504.0L961.8 507.0L958.6 510.9L956.1 511.2Z"/></clipPath>
<path d="M955.1 509.2L956.8 503.7L960.3 497.1L965.7 490.5L970.6 486.4L970.6 489.9L972.3 494.5L983.6 494.0L996.5 492.8L1003.8 493.6L1010.2 495.1L1020.1 497.0L1027.5 498.8L1025.2 499.5L1020.6 500.6L1018.5 503.6L1018.8 507.5L1023.8 512.0L1030.9 516.1L1038.9 518.5L1046.4 519.5L1051.6 518.5L1055.0 516.1L1055.9 512.1L1056.7 507.5L1060.5 502.9L1065.3 498.8L1070.3 495.8L1075.7 493.7L1083.3 492.5L1087.7 492.8L1081.2 495.2L1072.2 498.8L1068.0 502.9L1065.3 507.5L1063.1 512.6L1061.9 517.8L1062.7 522.0L1063.6 526.4L1062.3 532.6L1061.9 538.5L1066.6 541.5L1070.5 543.6L1068.3 545.9L1061.9 547.9L1049.8 549.4L1037.8 550.5L1031.5 552.0L1029.2 552.2L1032.6 549.3L1036.1 545.3L1032.7 541.9L1027.5 538.5L1023.4 534.9L1018.8 531.6L1013.1 528.9L1006.8 526.4L999.9 523.8L993.0 521.2L986.7 518.5L981.0 516.1L976.3 514.6L972.3 512.6L968.8 507.7L965.4 504.0L961.8 507.0L958.6 510.9L956.1 511.2Z" fill="#636058"/>
<g clip-path="url(#k15)"><path d="M955.1 509.2L956.8 503.7L956.8 525.7L955.1 531.2ZM956.8 503.7L960.3 497.1L960.3 519.1L956.8 525.7ZM960.3 497.1L965.7 490.5L965.7 512.5L960.3 519.1ZM1018.5 503.6L1020.6 500.6L1020.6 522.6L1018.5 525.6ZM1055.0 516.1L1055.9 512.1L1055.9 534.1L1055.0 538.1ZM1055.9 512.1L1056.7 507.5L1056.7 529.5L1055.9 534.1ZM1056.7 507.5L1060.5 502.9L1060.5 524.9L1056.7 529.5ZM1065.3 507.5L1068.0 502.9L1068.0 524.9L1065.3 529.5ZM1063.1 512.6L1065.3 507.5L1065.3 529.5L1063.1 534.6ZM1061.9 517.8L1063.1 512.6L1063.1 534.6L1061.9 539.8ZM1062.3 532.6L1063.6 526.4L1063.6 548.4L1062.3 554.6ZM1061.9 538.5L1062.3 532.6L1062.3 554.6L1061.9 560.5ZM1032.6 549.3L1036.1 545.3L1036.1 567.3L1032.6 571.3ZM958.6 510.9L961.8 507.0L961.8 529.0L958.6 532.9ZM965.7 490.5L970.6 486.4L970.6 508.4L965.7 512.5ZM1025.2 499.5L1027.5 498.8L1027.5 520.8L1025.2 521.5ZM1051.6 518.5L1055.0 516.1L1055.0 538.1L1051.6 540.5ZM1060.5 502.9L1065.3 498.8L1065.3 520.8L1060.5 524.9ZM1065.3 498.8L1070.3 495.8L1070.3 517.8L1065.3 520.8ZM1070.3 495.8L1075.7 493.7L1075.7 515.7L1070.3 517.8ZM1081.2 495.2L1087.7 492.8L1087.7 514.8L1081.2 517.2ZM1072.2 498.8L1081.2 495.2L1081.2 517.2L1072.2 520.8ZM1068.0 502.9L1072.2 498.8L1072.2 520.8L1068.0 524.9ZM1068.3 545.9L1070.5 543.6L1070.5 565.6L1068.3 567.9ZM1061.9 547.9L1068.3 545.9L1068.3 567.9L1061.9 569.9ZM1029.2 552.2L1032.6 549.3L1032.6 571.3L1029.2 574.2ZM961.8 507.0L965.4 504.0L965.4 526.0L961.8 529.0ZM970.6 489.9L972.3 494.5L972.3 516.5L970.6 511.9ZM1018.5 503.6L1018.8 507.5L1018.8 529.5L1018.5 525.6ZM1061.9 517.8L1062.7 522.0L1062.7 544.0L1061.9 539.8ZM1062.7 522.0L1063.6 526.4L1063.6 548.4L1062.7 544.0ZM968.8 507.7L972.3 512.6L972.3 534.6L968.8 529.7ZM955.1 509.2L956.1 511.2L956.1 533.2L955.1 531.2ZM972.3 494.5L983.6 494.0L983.6 516.0L972.3 516.5ZM983.6 494.0L996.5 492.8L996.5 514.8L983.6 516.0ZM996.5 492.8L1003.8 493.6L1003.8 515.6L996.5 514.8ZM1003.8 493.6L1010.2 495.1L1010.2 517.1L1003.8 515.6ZM1010.2 495.1L1020.1 497.0L1020.1 519.0L1010.2 517.1ZM1020.1 497.0L1027.5 498.8L1027.5 520.8L1020.1 519.0ZM1020.6 500.6L1025.2 499.5L1025.2 521.5L1020.6 522.6ZM1038.9 518.5L1046.4 519.5L1046.4 541.5L1038.9 540.5ZM1046.4 519.5L1051.6 518.5L1051.6 540.5L1046.4 541.5ZM1075.7 493.7L1083.3 492.5L1083.3 514.5L1075.7 515.7ZM1083.3 492.5L1087.7 492.8L1087.7 514.8L1083.3 514.5ZM1049.8 549.4L1061.9 547.9L1061.9 569.9L1049.8 571.4ZM1037.8 550.5L1049.8 549.4L1049.8 571.4L1037.8 572.5ZM1031.5 552.0L1037.8 550.5L1037.8 572.5L1031.5 574.0ZM1029.2 552.2L1031.5 552.0L1031.5 574.0L1029.2 574.2ZM956.1 511.2L958.6 510.9L958.6 532.9L956.1 533.2ZM1018.8 507.5L1023.8 512.0L1023.8 534.0L1018.8 529.5ZM1023.8 512.0L1030.9 516.1L1030.9 538.1L1023.8 534.0ZM1030.9 516.1L1038.9 518.5L1038.9 540.5L1030.9 538.1ZM1061.9 538.5L1066.6 541.5L1066.6 563.5L1061.9 560.5ZM1066.6 541.5L1070.5 543.6L1070.5 565.6L1066.6 563.5ZM1032.7 541.9L1036.1 545.3L1036.1 567.3L1032.7 563.9ZM1027.5 538.5L1032.7 541.9L1032.7 563.9L1027.5 560.5ZM1023.4 534.9L1027.5 538.5L1027.5 560.5L1023.4 556.9ZM1018.8 531.6L1023.4 534.9L1023.4 556.9L1018.8 553.6ZM1013.1 528.9L1018.8 531.6L1018.8 553.6L1013.1 550.9ZM1006.8 526.4L1013.1 528.9L1013.1 550.9L1006.8 548.4ZM999.9 523.8L1006.8 526.4L1006.8 548.4L999.9 545.8ZM993.0 521.2L999.9 523.8L999.9 545.8L993.0 543.2ZM986.7 518.5L993.0 521.2L993.0 543.2L986.7 540.5ZM981.0 516.1L986.7 518.5L986.7 540.5L981.0 538.1ZM976.3 514.6L981.0 516.1L981.0 538.1L976.3 536.6ZM972.3 512.6L976.3 514.6L976.3 536.6L972.3 534.6ZM965.4 504.0L968.8 507.7L968.8 529.7L965.4 526.0Z" fill="#3c3b37" stroke="#3c3b37" stroke-width=".6"/><path d="M955.1 509.2L956.8 503.7L956.8 525.7L955.1 531.2ZM956.8 503.7L960.3 497.1L960.3 519.1L956.8 525.7ZM960.3 497.1L965.7 490.5L965.7 512.5L960.3 519.1ZM1018.5 503.6L1020.6 500.6L1020.6 522.6L1018.5 525.6ZM1055.0 516.1L1055.9 512.1L1055.9 534.1L1055.0 538.1ZM1055.9 512.1L1056.7 507.5L1056.7 529.5L1055.9 534.1ZM1056.7 507.5L1060.5 502.9L1060.5 524.9L1056.7 529.5ZM1065.3 507.5L1068.0 502.9L1068.0 524.9L1065.3 529.5ZM1063.1 512.6L1065.3 507.5L1065.3 529.5L1063.1 534.6ZM1061.9 517.8L1063.1 512.6L1063.1 534.6L1061.9 539.8ZM1062.3 532.6L1063.6 526.4L1063.6 548.4L1062.3 554.6ZM1061.9 538.5L1062.3 532.6L1062.3 554.6L1061.9 560.5ZM1032.6 549.3L1036.1 545.3L1036.1 567.3L1032.6 571.3ZM958.6 510.9L961.8 507.0L961.8 529.0L958.6 532.9Z" fill="#302f2b"/><path d="M965.7 490.5L970.6 486.4L970.6 508.4L965.7 512.5ZM1025.2 499.5L1027.5 498.8L1027.5 520.8L1025.2 521.5ZM1051.6 518.5L1055.0 516.1L1055.0 538.1L1051.6 540.5ZM1060.5 502.9L1065.3 498.8L1065.3 520.8L1060.5 524.9ZM1065.3 498.8L1070.3 495.8L1070.3 517.8L1065.3 520.8ZM1070.3 495.8L1075.7 493.7L1075.7 515.7L1070.3 517.8ZM1081.2 495.2L1087.7 492.8L1087.7 514.8L1081.2 517.2ZM1072.2 498.8L1081.2 495.2L1081.2 517.2L1072.2 520.8ZM1068.0 502.9L1072.2 498.8L1072.2 520.8L1068.0 524.9ZM1068.3 545.9L1070.5 543.6L1070.5 565.6L1068.3 567.9ZM1061.9 547.9L1068.3 545.9L1068.3 567.9L1061.9 569.9ZM1029.2 552.2L1032.6 549.3L1032.6 571.3L1029.2 574.2ZM961.8 507.0L965.4 504.0L965.4 526.0L961.8 529.0Z" fill="#363531"/><path d="M1018.8 507.5L1023.8 512.0L1023.8 534.0L1018.8 529.5ZM1023.8 512.0L1030.9 516.1L1030.9 538.1L1023.8 534.0ZM1030.9 516.1L1038.9 518.5L1038.9 540.5L1030.9 538.1ZM1061.9 538.5L1066.6 541.5L1066.6 563.5L1061.9 560.5ZM1066.6 541.5L1070.5 543.6L1070.5 565.6L1066.6 563.5ZM1032.7 541.9L1036.1 545.3L1036.1 567.3L1032.7 563.9ZM1027.5 538.5L1032.7 541.9L1032.7 563.9L1027.5 560.5ZM1023.4 534.9L1027.5 538.5L1027.5 560.5L1023.4 556.9ZM1018.8 531.6L1023.4 534.9L1023.4 556.9L1018.8 553.6ZM1013.1 528.9L1018.8 531.6L1018.8 553.6L1013.1 550.9ZM1006.8 526.4L1013.1 528.9L1013.1 550.9L1006.8 548.4ZM999.9 523.8L1006.8 526.4L1006.8 548.4L999.9 545.8ZM993.0 521.2L999.9 523.8L999.9 545.8L993.0 543.2ZM986.7 518.5L993.0 521.2L993.0 543.2L986.7 540.5ZM981.0 516.1L986.7 518.5L986.7 540.5L981.0 538.1ZM976.3 514.6L981.0 516.1L981.0 538.1L976.3 536.6ZM972.3 512.6L976.3 514.6L976.3 536.6L972.3 534.6ZM965.4 504.0L968.8 507.7L968.8 529.7L965.4 526.0Z" fill="#43423d"/><path d="M970.6 489.9L972.3 494.5L972.3 516.5L970.6 511.9ZM1018.5 503.6L1018.8 507.5L1018.8 529.5L1018.5 525.6ZM1061.9 517.8L1062.7 522.0L1062.7 544.0L1061.9 539.8ZM1062.7 522.0L1063.6 526.4L1063.6 548.4L1062.7 544.0ZM968.8 507.7L972.3 512.6L972.3 534.6L968.8 529.7ZM955.1 509.2L956.1 511.2L956.1 533.2L955.1 531.2Z" fill="#4a4944"/><path d="M955.1 509.2L956.8 503.7L960.3 497.1L965.7 490.5L970.6 486.4L970.6 489.9L972.3 494.5L983.6 494.0L996.5 492.8L1003.8 493.6L1010.2 495.1L1020.1 497.0L1027.5 498.8L1025.2 499.5L1020.6 500.6L1018.5 503.6L1018.8 507.5L1023.8 512.0L1030.9 516.1L1038.9 518.5L1046.4 519.5L1051.6 518.5L1055.0 516.1L1055.9 512.1L1056.7 507.5L1060.5 502.9L1065.3 498.8L1070.3 495.8L1075.7 493.7L1083.3 492.5L1087.7 492.8L1081.2 495.2L1072.2 498.8L1068.0 502.9L1065.3 507.5L1063.1 512.6L1061.9 517.8L1062.7 522.0L1063.6 526.4L1062.3 532.6L1061.9 538.5L1066.6 541.5L1070.5 543.6L1068.3 545.9L1061.9 547.9L1049.8 549.4L1037.8 550.5L1031.5 552.0L1029.2 552.2L1032.6 549.3L1036.1 545.3L1032.7 541.9L1027.5 538.5L1023.4 534.9L1018.8 531.6L1013.1 528.9L1006.8 526.4L999.9 523.8L993.0 521.2L986.7 518.5L981.0 516.1L976.3 514.6L972.3 512.6L968.8 507.7L965.4 504.0L961.8 507.0L958.6 510.9L956.1 511.2Z" fill="none" stroke="#101010" stroke-width=".9" transform="translate(0 22.0)"/></g>
<path d="M955.1 509.2L956.8 503.7L960.3 497.1L965.7 490.5L970.6 486.4L970.6 489.9L972.3 494.5L983.6 494.0L996.5 492.8L1003.8 493.6L1010.2 495.1L1020.1 497.0L1027.5 498.8L1025.2 499.5L1020.6 500.6L1018.5 503.6L1018.8 507.5L1023.8 512.0L1030.9 516.1L1038.9 518.5L1046.4 519.5L1051.6 518.5L1055.0 516.1L1055.9 512.1L1056.7 507.5L1060.5 502.9L1065.3 498.8L1070.3 495.8L1075.7 493.7L1083.3 492.5L1087.7 492.8L1081.2 495.2L1072.2 498.8L1068.0 502.9L1065.3 507.5L1063.1 512.6L1061.9 517.8L1062.7 522.0L1063.6 526.4L1062.3 532.6L1061.9 538.5L1066.6 541.5L1070.5 543.6L1068.3 545.9L1061.9 547.9L1049.8 549.4L1037.8 550.5L1031.5 552.0L1029.2 552.2L1032.6 549.3L1036.1 545.3L1032.7 541.9L1027.5 538.5L1023.4 534.9L1018.8 531.6L1013.1 528.9L1006.8 526.4L999.9 523.8L993.0 521.2L986.7 518.5L981.0 516.1L976.3 514.6L972.3 512.6L968.8 507.7L965.4 504.0L961.8 507.0L958.6 510.9L956.1 511.2Z" fill="none" stroke="#101010" stroke-width="1.5" stroke-linejoin="round"/>
<clipPath id="k16"><path d="M969.8 532.4L971.5 532.7L974.3 533.6L977.5 535.0L981.4 537.1L985.7 539.6L989.6 541.9L993.0 543.7L996.0 545.2L997.3 546.2L996.0 546.7L993.0 546.7L989.6 546.2L985.7 544.9L981.3 543.0L977.5 541.0L974.6 539.3L972.3 537.5L970.6 535.9L969.6 534.4L969.2 533.1Z"/></clipPath>
<path d="M969.8 532.4L971.5 532.7L974.3 533.6L977.5 535.0L981.4 537.1L985.7 539.6L989.6 541.9L993.0 543.7L996.0 545.2L997.3 546.2L996.0 546.7L993.0 546.7L989.6 546.2L985.7 544.9L981.3 543.0L977.5 541.0L974.6 539.3L972.3 537.5L970.6 535.9L969.6 534.4L969.2 533.1Z" fill="#636058"/>
<g clip-path="url(#k16)"><path d="M969.8 532.4L971.5 532.7L971.5 554.7L969.8 554.4ZM993.0 546.7L996.0 546.7L996.0 568.7L993.0 568.7ZM989.6 546.2L993.0 546.7L993.0 568.7L989.6 568.2ZM971.5 532.7L974.3 533.6L974.3 555.6L971.5 554.7ZM974.3 533.6L977.5 535.0L977.5 557.0L974.3 555.6ZM977.5 535.0L981.4 537.1L981.4 559.1L977.5 557.0ZM981.4 537.1L985.7 539.6L985.7 561.6L981.4 559.1ZM985.7 539.6L989.6 541.9L989.6 563.9L985.7 561.6ZM989.6 541.9L993.0 543.7L993.0 565.7L989.6 563.9ZM993.0 543.7L996.0 545.2L996.0 567.2L993.0 565.7ZM996.0 545.2L997.3 546.2L997.3 568.2L996.0 567.2ZM985.7 544.9L989.6 546.2L989.6 568.2L985.7 566.9ZM981.3 543.0L985.7 544.9L985.7 566.9L981.3 565.0ZM977.5 541.0L981.3 543.0L981.3 565.0L977.5 563.0ZM974.6 539.3L977.5 541.0L977.5 563.0L974.6 561.3ZM972.3 537.5L974.6 539.3L974.6 561.3L972.3 559.5ZM970.6 535.9L972.3 537.5L972.3 559.5L970.6 557.9ZM996.0 546.7L997.3 546.2L997.3 568.2L996.0 568.7ZM969.2 533.1L969.8 532.4L969.8 554.4L969.2 555.1ZM969.6 534.4L970.6 535.9L970.6 557.9L969.6 556.4ZM969.2 533.1L969.6 534.4L969.6 556.4L969.2 555.1Z" fill="#3c3b37" stroke="#3c3b37" stroke-width=".6"/><path d="M996.0 546.7L997.3 546.2L997.3 568.2L996.0 568.7ZM969.2 533.1L969.8 532.4L969.8 554.4L969.2 555.1Z" fill="#363531"/><path d="M971.5 532.7L974.3 533.6L974.3 555.6L971.5 554.7ZM974.3 533.6L977.5 535.0L977.5 557.0L974.3 555.6ZM977.5 535.0L981.4 537.1L981.4 559.1L977.5 557.0ZM981.4 537.1L985.7 539.6L985.7 561.6L981.4 559.1ZM985.7 539.6L989.6 541.9L989.6 563.9L985.7 561.6ZM989.6 541.9L993.0 543.7L993.0 565.7L989.6 563.9ZM993.0 543.7L996.0 545.2L996.0 567.2L993.0 565.7ZM996.0 545.2L997.3 546.2L997.3 568.2L996.0 567.2ZM985.7 544.9L989.6 546.2L989.6 568.2L985.7 566.9ZM981.3 543.0L985.7 544.9L985.7 566.9L981.3 565.0ZM977.5 541.0L981.3 543.0L981.3 565.0L977.5 563.0ZM974.6 539.3L977.5 541.0L977.5 563.0L974.6 561.3ZM972.3 537.5L974.6 539.3L974.6 561.3L972.3 559.5ZM970.6 535.9L972.3 537.5L972.3 559.5L970.6 557.9Z" fill="#43423d"/><path d="M969.6 534.4L970.6 535.9L970.6 557.9L969.6 556.4ZM969.2 533.1L969.6 534.4L969.6 556.4L969.2 555.1Z" fill="#4a4944"/><path d="M969.8 532.4L971.5 532.7L974.3 533.6L977.5 535.0L981.4 537.1L985.7 539.6L989.6 541.9L993.0 543.7L996.0 545.2L997.3 546.2L996.0 546.7L993.0 546.7L989.6 546.2L985.7 544.9L981.3 543.0L977.5 541.0L974.6 539.3L972.3 537.5L970.6 535.9L969.6 534.4L969.2 533.1Z" fill="none" stroke="#101010" stroke-width=".9" transform="translate(0 22.0)"/></g>
<path d="M969.8 532.4L971.5 532.7L974.3 533.6L977.5 535.0L981.4 537.1L985.7 539.6L989.6 541.9L993.0 543.7L996.0 545.2L997.3 546.2L996.0 546.7L993.0 546.7L989.6 546.2L985.7 544.9L981.3 543.0L977.5 541.0L974.6 539.3L972.3 537.5L970.6 535.9L969.6 534.4L969.2 533.1Z" fill="none" stroke="#101010" stroke-width="1.5" stroke-linejoin="round"/>
<clipPath id="k17"><path d="M939.6 501.4L941.0 498.7L943.6 495.0L946.5 492.0L950.3 489.7L954.5 488.0L956.8 487.6L955.8 489.4L952.9 492.4L949.9 495.4L947.5 498.0L945.1 500.6L943.1 502.3L941.3 502.9L939.9 502.6Z"/></clipPath>
<path d="M939.6 501.4L941.0 498.7L943.6 495.0L946.5 492.0L950.3 489.7L954.5 488.0L956.8 487.6L955.8 489.4L952.9 492.4L949.9 495.4L947.5 498.0L945.1 500.6L943.1 502.3L941.3 502.9L939.9 502.6Z" fill="#636058"/>
<g clip-path="url(#k17)"><path d="M939.6 501.4L941.0 498.7L941.0 520.7L939.6 523.4ZM941.0 498.7L943.6 495.0L943.6 517.0L941.0 520.7ZM955.8 489.4L956.8 487.6L956.8 509.6L955.8 511.4ZM943.6 495.0L946.5 492.0L946.5 514.0L943.6 517.0ZM946.5 492.0L950.3 489.7L950.3 511.7L946.5 514.0ZM950.3 489.7L954.5 488.0L954.5 510.0L950.3 511.7ZM952.9 492.4L955.8 489.4L955.8 511.4L952.9 514.4ZM949.9 495.4L952.9 492.4L952.9 514.4L949.9 517.4ZM947.5 498.0L949.9 495.4L949.9 517.4L947.5 520.0ZM945.1 500.6L947.5 498.0L947.5 520.0L945.1 522.6ZM943.1 502.3L945.1 500.6L945.1 522.6L943.1 524.3ZM941.3 502.9L943.1 502.3L943.1 524.3L941.3 524.9ZM954.5 488.0L956.8 487.6L956.8 509.6L954.5 510.0ZM939.9 502.6L941.3 502.9L941.3 524.9L939.9 524.6ZM939.6 501.4L939.9 502.6L939.9 524.6L939.6 523.4Z" fill="#3c3b37" stroke="#3c3b37" stroke-width=".6"/><path d="M939.6 501.4L941.0 498.7L941.0 520.7L939.6 523.4ZM941.0 498.7L943.6 495.0L943.6 517.0L941.0 520.7ZM955.8 489.4L956.8 487.6L956.8 509.6L955.8 511.4Z" fill="#302f2b"/><path d="M943.6 495.0L946.5 492.0L946.5 514.0L943.6 517.0ZM946.5 492.0L950.3 489.7L950.3 511.7L946.5 514.0ZM950.3 489.7L954.5 488.0L954.5 510.0L950.3 511.7ZM952.9 492.4L955.8 489.4L955.8 511.4L952.9 514.4ZM949.9 495.4L952.9 492.4L952.9 514.4L949.9 517.4ZM947.5 498.0L949.9 495.4L949.9 517.4L947.5 520.0ZM945.1 500.6L947.5 498.0L947.5 520.0L945.1 522.6ZM943.1 502.3L945.1 500.6L945.1 522.6L943.1 524.3ZM941.3 502.9L943.1 502.3L943.1 524.3L941.3 524.9Z" fill="#363531"/><path d="M939.6 501.4L939.9 502.6L939.9 524.6L939.6 523.4Z" fill="#4a4944"/><path d="M939.6 501.4L941.0 498.7L943.6 495.0L946.5 492.0L950.3 489.7L954.5 488.0L956.8 487.6L955.8 489.4L952.9 492.4L949.9 495.4L947.5 498.0L945.1 500.6L943.1 502.3L941.3 502.9L939.9 502.6Z" fill="none" stroke="#101010" stroke-width=".9" transform="translate(0 22.0)"/></g>
<path d="M939.6 501.4L941.0 498.7L943.6 495.0L946.5 492.0L950.3 489.7L954.5 488.0L956.8 487.6L955.8 489.4L952.9 492.4L949.9 495.4L947.5 498.0L945.1 500.6L943.1 502.3L941.3 502.9L939.9 502.6Z" fill="none" stroke="#101010" stroke-width="1.5" stroke-linejoin="round"/>
<clipPath id="k18"><path d="M925.8 529.8L926.3 527.7L927.2 526.0L928.4 524.7L930.1 523.6L932.0 523.1L933.6 523.8L934.3 526.8L934.7 531.0L935.3 535.0L936.3 538.1L937.5 540.8L939.6 543.6L943.8 546.8L948.9 550.0L951.7 552.2L950.4 553.1L946.8 553.1L943.1 552.2L939.6 550.4L935.9 547.9L932.7 545.3L930.5 543.1L928.8 540.9L927.6 538.5L926.6 535.6L926.0 532.5Z"/></clipPath>
<path d="M925.8 529.8L926.3 527.7L927.2 526.0L928.4 524.7L930.1 523.6L932.0 523.1L933.6 523.8L934.3 526.8L934.7 531.0L935.3 535.0L936.3 538.1L937.5 540.8L939.6 543.6L943.8 546.8L948.9 550.0L951.7 552.2L950.4 553.1L946.8 553.1L943.1 552.2L939.6 550.4L935.9 547.9L932.7 545.3L930.5 543.1L928.8 540.9L927.6 538.5L926.6 535.6L926.0 532.5Z" fill="#636058"/>
<g clip-path="url(#k18)"><path d="M925.8 529.8L926.3 527.7L926.3 549.7L925.8 551.8ZM926.3 527.7L927.2 526.0L927.2 548.0L926.3 549.7ZM927.2 526.0L928.4 524.7L928.4 546.7L927.2 548.0ZM928.4 524.7L930.1 523.6L930.1 545.6L928.4 546.7ZM930.1 523.6L932.0 523.1L932.0 545.1L930.1 545.6ZM950.4 553.1L951.7 552.2L951.7 574.2L950.4 575.1ZM932.0 523.1L933.6 523.8L933.6 545.8L932.0 545.1ZM939.6 543.6L943.8 546.8L943.8 568.8L939.6 565.6ZM943.8 546.8L948.9 550.0L948.9 572.0L943.8 568.8ZM948.9 550.0L951.7 552.2L951.7 574.2L948.9 572.0ZM939.6 550.4L943.1 552.2L943.1 574.2L939.6 572.4ZM935.9 547.9L939.6 550.4L939.6 572.4L935.9 569.9ZM932.7 545.3L935.9 547.9L935.9 569.9L932.7 567.3ZM930.5 543.1L932.7 545.3L932.7 567.3L930.5 565.1ZM933.6 523.8L934.3 526.8L934.3 548.8L933.6 545.8ZM934.3 526.8L934.7 531.0L934.7 553.0L934.3 548.8ZM934.7 531.0L935.3 535.0L935.3 557.0L934.7 553.0ZM935.3 535.0L936.3 538.1L936.3 560.1L935.3 557.0ZM936.3 538.1L937.5 540.8L937.5 562.8L936.3 560.1ZM937.5 540.8L939.6 543.6L939.6 565.6L937.5 562.8ZM928.8 540.9L930.5 543.1L930.5 565.1L928.8 562.9ZM927.6 538.5L928.8 540.9L928.8 562.9L927.6 560.5ZM926.6 535.6L927.6 538.5L927.6 560.5L926.6 557.6ZM926.0 532.5L926.6 535.6L926.6 557.6L926.0 554.5ZM925.8 529.8L926.0 532.5L926.0 554.5L925.8 551.8ZM946.8 553.1L950.4 553.1L950.4 575.1L946.8 575.1ZM943.1 552.2L946.8 553.1L946.8 575.1L943.1 574.2Z" fill="#3c3b37" stroke="#3c3b37" stroke-width=".6"/><path d="M925.8 529.8L926.3 527.7L926.3 549.7L925.8 551.8ZM926.3 527.7L927.2 526.0L927.2 548.0L926.3 549.7Z" fill="#302f2b"/><path d="M927.2 526.0L928.4 524.7L928.4 546.7L927.2 548.0ZM928.4 524.7L930.1 523.6L930.1 545.6L928.4 546.7ZM930.1 523.6L932.0 523.1L932.0 545.1L930.1 545.6ZM950.4 553.1L951.7 552.2L951.7 574.2L950.4 575.1Z" fill="#363531"/><path d="M932.0 523.1L933.6 523.8L933.6 545.8L932.0 545.1ZM939.6 543.6L943.8 546.8L943.8 568.8L939.6 565.6ZM943.8 546.8L948.9 550.0L948.9 572.0L943.8 568.8ZM948.9 550.0L951.7 552.2L951.7 574.2L948.9 572.0ZM939.6 550.4L943.1 552.2L943.1 574.2L939.6 572.4ZM935.9 547.9L939.6 550.4L939.6 572.4L935.9 569.9ZM932.7 545.3L935.9 547.9L935.9 569.9L932.7 567.3ZM930.5 543.1L932.7 545.3L932.7 567.3L930.5 565.1Z" fill="#43423d"/><path d="M933.6 523.8L934.3 526.8L934.3 548.8L933.6 545.8ZM934.3 526.8L934.7 531.0L934.7 553.0L934.3 548.8ZM934.7 531.0L935.3 535.0L935.3 557.0L934.7 553.0ZM935.3 535.0L936.3 538.1L936.3 560.1L935.3 557.0ZM936.3 538.1L937.5 540.8L937.5 562.8L936.3 560.1ZM937.5 540.8L939.6 543.6L939.6 565.6L937.5 562.8ZM928.8 540.9L930.5 543.1L930.5 565.1L928.8 562.9ZM927.6 538.5L928.8 540.9L928.8 562.9L927.6 560.5ZM926.6 535.6L927.6 538.5L927.6 560.5L926.6 557.6ZM926.0 532.5L926.6 535.6L926.6 557.6L926.0 554.5ZM925.8 529.8L926.0 532.5L926.0 554.5L925.8 551.8Z" fill="#4a4944"/><path d="M925.8 529.8L926.3 527.7L927.2 526.0L928.4 524.7L930.1 523.6L932.0 523.1L933.6 523.8L934.3 526.8L934.7 531.0L935.3 535.0L936.3 538.1L937.5 540.8L939.6 543.6L943.8 546.8L948.9 550.0L951.7 552.2L950.4 553.1L946.8 553.1L943.1 552.2L939.6 550.4L935.9 547.9L932.7 545.3L930.5 543.1L928.8 540.9L927.6 538.5L926.6 535.6L926.0 532.5Z" fill="none" stroke="#101010" stroke-width=".9" transform="translate(0 22.0)"/></g>
<path d="M925.8 529.8L926.3 527.7L927.2 526.0L928.4 524.7L930.1 523.6L932.0 523.1L933.6 523.8L934.3 526.8L934.7 531.0L935.3 535.0L936.3 538.1L937.5 540.8L939.6 543.6L943.8 546.8L948.9 550.0L951.7 552.2L950.4 553.1L946.8 553.1L943.1 552.2L939.6 550.4L935.9 547.9L932.7 545.3L930.5 543.1L928.8 540.9L927.6 538.5L926.6 535.6L926.0 532.5Z" fill="none" stroke="#101010" stroke-width="1.5" stroke-linejoin="round"/>
<clipPath id="k19"><path d="M943.1 446.3L945.3 444.3L948.6 442.3L951.7 441.1L954.3 441.2L956.6 442.0L957.7 442.9L957.1 443.6L955.3 444.5L953.4 445.4L951.4 446.6L949.3 447.8L948.2 448.9L948.9 449.5L950.6 450.0L951.7 450.6L951.6 451.8L951.0 453.2L949.9 454.1L948.1 454.0L945.7 453.4L943.9 452.3L942.9 450.6L942.5 448.4Z"/></clipPath>
<path d="M943.1 446.3L945.3 444.3L948.6 442.3L951.7 441.1L954.3 441.2L956.6 442.0L957.7 442.9L957.1 443.6L955.3 444.5L953.4 445.4L951.4 446.6L949.3 447.8L948.2 448.9L948.9 449.5L950.6 450.0L951.7 450.6L951.6 451.8L951.0 453.2L949.9 454.1L948.1 454.0L945.7 453.4L943.9 452.3L942.9 450.6L942.5 448.4Z" fill="#636058"/>
<g clip-path="url(#k19)"><path d="M943.1 446.3L945.3 444.3L945.3 466.3L943.1 468.3ZM945.3 444.3L948.6 442.3L948.6 464.3L945.3 466.3ZM948.6 442.3L951.7 441.1L951.7 463.1L948.6 464.3ZM955.3 444.5L957.1 443.6L957.1 465.6L955.3 466.5ZM953.4 445.4L955.3 444.5L955.3 466.5L953.4 467.4ZM951.4 446.6L953.4 445.4L953.4 467.4L951.4 468.6ZM949.3 447.8L951.4 446.6L951.4 468.6L949.3 469.8ZM948.2 448.9L949.3 447.8L949.3 469.8L948.2 470.9ZM949.9 454.1L951.0 453.2L951.0 475.2L949.9 476.1ZM951.7 441.1L954.3 441.2L954.3 463.2L951.7 463.1ZM948.1 454.0L949.9 454.1L949.9 476.1L948.1 476.0ZM945.7 453.4L948.1 454.0L948.1 476.0L945.7 475.4ZM954.3 441.2L956.6 442.0L956.6 464.0L954.3 463.2ZM956.6 442.0L957.7 442.9L957.7 464.9L956.6 464.0ZM948.2 448.9L948.9 449.5L948.9 471.5L948.2 470.9ZM948.9 449.5L950.6 450.0L950.6 472.0L948.9 471.5ZM950.6 450.0L951.7 450.6L951.7 472.6L950.6 472.0ZM943.9 452.3L945.7 453.4L945.7 475.4L943.9 474.3ZM957.1 443.6L957.7 442.9L957.7 464.9L957.1 465.6ZM951.0 453.2L951.6 451.8L951.6 473.8L951.0 475.2ZM942.5 448.4L943.1 446.3L943.1 468.3L942.5 470.4ZM942.9 450.6L943.9 452.3L943.9 474.3L942.9 472.6ZM942.5 448.4L942.9 450.6L942.9 472.6L942.5 470.4Z" fill="#3c3b37" stroke="#3c3b37" stroke-width=".6"/><path d="M957.1 443.6L957.7 442.9L957.7 464.9L957.1 465.6ZM951.0 453.2L951.6 451.8L951.6 473.8L951.0 475.2ZM942.5 448.4L943.1 446.3L943.1 468.3L942.5 470.4Z" fill="#302f2b"/><path d="M943.1 446.3L945.3 444.3L945.3 466.3L943.1 468.3ZM945.3 444.3L948.6 442.3L948.6 464.3L945.3 466.3ZM948.6 442.3L951.7 441.1L951.7 463.1L948.6 464.3ZM955.3 444.5L957.1 443.6L957.1 465.6L955.3 466.5ZM953.4 445.4L955.3 444.5L955.3 466.5L953.4 467.4ZM951.4 446.6L953.4 445.4L953.4 467.4L951.4 468.6ZM949.3 447.8L951.4 446.6L951.4 468.6L949.3 469.8ZM948.2 448.9L949.3 447.8L949.3 469.8L948.2 470.9ZM949.9 454.1L951.0 453.2L951.0 475.2L949.9 476.1Z" fill="#363531"/><path d="M954.3 441.2L956.6 442.0L956.6 464.0L954.3 463.2ZM956.6 442.0L957.7 442.9L957.7 464.9L956.6 464.0ZM948.2 448.9L948.9 449.5L948.9 471.5L948.2 470.9ZM948.9 449.5L950.6 450.0L950.6 472.0L948.9 471.5ZM950.6 450.0L951.7 450.6L951.7 472.6L950.6 472.0ZM943.9 452.3L945.7 453.4L945.7 475.4L943.9 474.3Z" fill="#43423d"/><path d="M942.9 450.6L943.9 452.3L943.9 474.3L942.9 472.6ZM942.5 448.4L942.9 450.6L942.9 472.6L942.5 470.4Z" fill="#4a4944"/><path d="M943.1 446.3L945.3 444.3L948.6 442.3L951.7 441.1L954.3 441.2L956.6 442.0L957.7 442.9L957.1 443.6L955.3 444.5L953.4 445.4L951.4 446.6L949.3 447.8L948.2 448.9L948.9 449.5L950.6 450.0L951.7 450.6L951.6 451.8L951.0 453.2L949.9 454.1L948.1 454.0L945.7 453.4L943.9 452.3L942.9 450.6L942.5 448.4Z" fill="none" stroke="#101010" stroke-width=".9" transform="translate(0 22.0)"/></g>
<path d="M943.1 446.3L945.3 444.3L948.6 442.3L951.7 441.1L954.3 441.2L956.6 442.0L957.7 442.9L957.1 443.6L955.3 444.5L953.4 445.4L951.4 446.6L949.3 447.8L948.2 448.9L948.9 449.5L950.6 450.0L951.7 450.6L951.6 451.8L951.0 453.2L949.9 454.1L948.1 454.0L945.7 453.4L943.9 452.3L942.9 450.6L942.5 448.4Z" fill="none" stroke="#101010" stroke-width="1.5" stroke-linejoin="round"/>
<clipPath id="k20"><path d="M937.0 461.0L937.5 458.5L938.9 455.8L940.5 454.1L942.4 454.0L944.5 455.0L945.6 456.6L945.2 459.5L943.8 463.1L942.2 465.3L940.3 464.9L938.2 463.1Z"/></clipPath>
<path d="M937.0 461.0L937.5 458.5L938.9 455.8L940.5 454.1L942.4 454.0L944.5 455.0L945.6 456.6L945.2 459.5L943.8 463.1L942.2 465.3L940.3 464.9L938.2 463.1Z" fill="#636058"/>
<g clip-path="url(#k20)"><path d="M937.0 461.0L937.5 458.5L937.5 480.5L937.0 483.0ZM937.5 458.5L938.9 455.8L938.9 477.8L937.5 480.5ZM945.2 459.5L945.6 456.6L945.6 478.6L945.2 481.5ZM943.8 463.1L945.2 459.5L945.2 481.5L943.8 485.1ZM942.2 465.3L943.8 463.1L943.8 485.1L942.2 487.3ZM938.9 455.8L940.5 454.1L940.5 476.1L938.9 477.8ZM940.5 454.1L942.4 454.0L942.4 476.0L940.5 476.1ZM940.3 464.9L942.2 465.3L942.2 487.3L940.3 486.9ZM942.4 454.0L944.5 455.0L944.5 477.0L942.4 476.0ZM938.2 463.1L940.3 464.9L940.3 486.9L938.2 485.1ZM944.5 455.0L945.6 456.6L945.6 478.6L944.5 477.0ZM937.0 461.0L938.2 463.1L938.2 485.1L937.0 483.0Z" fill="#3c3b37" stroke="#3c3b37" stroke-width=".6"/><path d="M937.0 461.0L937.5 458.5L937.5 480.5L937.0 483.0ZM937.5 458.5L938.9 455.8L938.9 477.8L937.5 480.5ZM945.2 459.5L945.6 456.6L945.6 478.6L945.2 481.5ZM943.8 463.1L945.2 459.5L945.2 481.5L943.8 485.1ZM942.2 465.3L943.8 463.1L943.8 485.1L942.2 487.3Z" fill="#302f2b"/><path d="M938.9 455.8L940.5 454.1L940.5 476.1L938.9 477.8Z" fill="#363531"/><path d="M942.4 454.0L944.5 455.0L944.5 477.0L942.4 476.0ZM938.2 463.1L940.3 464.9L940.3 486.9L938.2 485.1Z" fill="#43423d"/><path d="M944.5 455.0L945.6 456.6L945.6 478.6L944.5 477.0ZM937.0 461.0L938.2 463.1L938.2 485.1L937.0 483.0Z" fill="#4a4944"/><path d="M937.0 461.0L937.5 458.5L938.9 455.8L940.5 454.1L942.4 454.0L944.5 455.0L945.6 456.6L945.2 459.5L943.8 463.1L942.2 465.3L940.3 464.9L938.2 463.1Z" fill="none" stroke="#101010" stroke-width=".9" transform="translate(0 22.0)"/></g>
<path d="M937.0 461.0L937.5 458.5L938.9 455.8L940.5 454.1L942.4 454.0L944.5 455.0L945.6 456.6L945.2 459.5L943.8 463.1L942.2 465.3L940.3 464.9L938.2 463.1Z" fill="none" stroke="#101010" stroke-width="1.5" stroke-linejoin="round"/>
<clipPath id="k21"><path d="M970.8 533.4L972.8 533.1L976.8 533.7L981.1 535.1L986.2 537.7L991.6 541.0L994.9 543.7L994.8 545.4L992.7 546.3L989.7 546.3L986.0 545.0L981.6 542.7L977.7 540.3L974.4 537.7L971.6 535.1Z"/></clipPath>
<path d="M970.8 533.4L972.8 533.1L976.8 533.7L981.1 535.1L986.2 537.7L991.6 541.0L994.9 543.7L994.8 545.4L992.7 546.3L989.7 546.3L986.0 545.0L981.6 542.7L977.7 540.3L974.4 537.7L971.6 535.1Z" fill="#636058"/>
<g clip-path="url(#k21)"><path d="M970.8 533.4L972.8 533.1L972.8 555.1L970.8 555.4ZM972.8 533.1L976.8 533.7L976.8 555.7L972.8 555.1ZM989.7 546.3L992.7 546.3L992.7 568.3L989.7 568.3ZM976.8 533.7L981.1 535.1L981.1 557.1L976.8 555.7ZM981.1 535.1L986.2 537.7L986.2 559.7L981.1 557.1ZM986.2 537.7L991.6 541.0L991.6 563.0L986.2 559.7ZM991.6 541.0L994.9 543.7L994.9 565.7L991.6 563.0ZM986.0 545.0L989.7 546.3L989.7 568.3L986.0 567.0ZM981.6 542.7L986.0 545.0L986.0 567.0L981.6 564.7ZM977.7 540.3L981.6 542.7L981.6 564.7L977.7 562.3ZM974.4 537.7L977.7 540.3L977.7 562.3L974.4 559.7ZM971.6 535.1L974.4 537.7L974.4 559.7L971.6 557.1ZM994.8 545.4L994.9 543.7L994.9 565.7L994.8 567.4ZM992.7 546.3L994.8 545.4L994.8 567.4L992.7 568.3ZM970.8 533.4L971.6 535.1L971.6 557.1L970.8 555.4Z" fill="#3c3b37" stroke="#3c3b37" stroke-width=".6"/><path d="M994.8 545.4L994.9 543.7L994.9 565.7L994.8 567.4Z" fill="#302f2b"/><path d="M992.7 546.3L994.8 545.4L994.8 567.4L992.7 568.3Z" fill="#363531"/><path d="M976.8 533.7L981.1 535.1L981.1 557.1L976.8 555.7ZM981.1 535.1L986.2 537.7L986.2 559.7L981.1 557.1ZM986.2 537.7L991.6 541.0L991.6 563.0L986.2 559.7ZM991.6 541.0L994.9 543.7L994.9 565.7L991.6 563.0ZM986.0 545.0L989.7 546.3L989.7 568.3L986.0 567.0ZM981.6 542.7L986.0 545.0L986.0 567.0L981.6 564.7ZM977.7 540.3L981.6 542.7L981.6 564.7L977.7 562.3ZM974.4 537.7L977.7 540.3L977.7 562.3L974.4 559.7ZM971.6 535.1L974.4 537.7L974.4 559.7L971.6 557.1Z" fill="#43423d"/><path d="M970.8 533.4L971.6 535.1L971.6 557.1L970.8 555.4Z" fill="#4a4944"/><path d="M970.8 533.4L972.8 533.1L976.8 533.7L981.1 535.1L986.2 537.7L991.6 541.0L994.9 543.7L994.8 545.4L992.7 546.3L989.7 546.3L986.0 545.0L981.6 542.7L977.7 540.3L974.4 537.7L971.6 535.1Z" fill="none" stroke="#101010" stroke-width=".9" transform="translate(0 22.0)"/></g>
<path d="M970.8 533.4L972.8 533.1L976.8 533.7L981.1 535.1L986.2 537.7L991.6 541.0L994.9 543.7L994.8 545.4L992.7 546.3L989.7 546.3L986.0 545.0L981.6 542.7L977.7 540.3L974.4 537.7L971.6 535.1Z" fill="none" stroke="#101010" stroke-width="1.5" stroke-linejoin="round"/>
<clipPath id="k22"><path d="M926.0 564.4L931.1 563.4L939.7 562.5L946.7 562.7L950.3 564.7L952.1 567.6L951.8 569.6L948.6 569.7L943.2 568.9L938.1 567.8L932.7 566.8L927.5 565.5Z"/></clipPath>
<path d="M926.0 564.4L931.1 563.4L939.7 562.5L946.7 562.7L950.3 564.7L952.1 567.6L951.8 569.6L948.6 569.7L943.2 568.9L938.1 567.8L932.7 566.8L927.5 565.5Z" fill="#636058"/>
<g clip-path="url(#k22)"><path d="M926.0 564.4L931.1 563.4L931.1 585.4L926.0 586.4ZM931.1 563.4L939.7 562.5L939.7 584.5L931.1 585.4ZM939.7 562.5L946.7 562.7L946.7 584.7L939.7 584.5ZM948.6 569.7L951.8 569.6L951.8 591.6L948.6 591.7ZM943.2 568.9L948.6 569.7L948.6 591.7L943.2 590.9ZM938.1 567.8L943.2 568.9L943.2 590.9L938.1 589.8ZM932.7 566.8L938.1 567.8L938.1 589.8L932.7 588.8ZM927.5 565.5L932.7 566.8L932.7 588.8L927.5 587.5ZM946.7 562.7L950.3 564.7L950.3 586.7L946.7 584.7ZM926.0 564.4L927.5 565.5L927.5 587.5L926.0 586.4ZM950.3 564.7L952.1 567.6L952.1 589.6L950.3 586.7ZM951.8 569.6L952.1 567.6L952.1 589.6L951.8 591.6Z" fill="#3c3b37" stroke="#3c3b37" stroke-width=".6"/><path d="M951.8 569.6L952.1 567.6L952.1 589.6L951.8 591.6Z" fill="#302f2b"/><path d="M946.7 562.7L950.3 564.7L950.3 586.7L946.7 584.7ZM926.0 564.4L927.5 565.5L927.5 587.5L926.0 586.4Z" fill="#43423d"/><path d="M950.3 564.7L952.1 567.6L952.1 589.6L950.3 586.7Z" fill="#4a4944"/><path d="M926.0 564.4L931.1 563.4L939.7 562.5L946.7 562.7L950.3 564.7L952.1 567.6L951.8 569.6L948.6 569.7L943.2 568.9L938.1 567.8L932.7 566.8L927.5 565.5Z" fill="none" stroke="#101010" stroke-width=".9" transform="translate(0 22.0)"/></g>
<path d="M926.0 564.4L931.1 563.4L939.7 562.5L946.7 562.7L950.3 564.7L952.1 567.6L951.8 569.6L948.6 569.7L943.2 568.9L938.1 567.8L932.7 566.8L927.5 565.5Z" fill="none" stroke="#101010" stroke-width="1.5" stroke-linejoin="round"/>
<clipPath id="k23"><path d="M939.8 500.7L953.6 488.6L946.7 497.2L941.5 502.4Z"/></clipPath>
<path d="M939.8 500.7L953.6 488.6L946.7 497.2L941.5 502.4Z" fill="#636058"/>
<g clip-path="url(#k23)"><path d="M939.8 500.7L953.6 488.6L953.6 510.6L939.8 522.7ZM941.5 502.4L946.7 497.2L946.7 519.2L941.5 524.4ZM946.7 497.2L953.6 488.6L953.6 510.6L946.7 519.2ZM939.8 500.7L941.5 502.4L941.5 524.4L939.8 522.7Z" fill="#3c3b37" stroke="#3c3b37" stroke-width=".6"/><path d="M946.7 497.2L953.6 488.6L953.6 510.6L946.7 519.2Z" fill="#302f2b"/><path d="M939.8 500.7L953.6 488.6L953.6 510.6L939.8 522.7ZM941.5 502.4L946.7 497.2L946.7 519.2L941.5 524.4Z" fill="#363531"/><path d="M939.8 500.7L941.5 502.4L941.5 524.4L939.8 522.7Z" fill="#43423d"/><path d="M939.8 500.7L953.6 488.6L946.7 497.2L941.5 502.4Z" fill="none" stroke="#101010" stroke-width=".9" transform="translate(0 22.0)"/></g>
<path d="M939.8 500.7L953.6 488.6L946.7 497.2L941.5 502.4Z" fill="none" stroke="#101010" stroke-width="1.5" stroke-linejoin="round"/>
<clipPath id="k24"><path d="M954.4 509.3L955.7 504.9L958.9 497.8L962.2 492.1L965.4 488.8L968.7 486.9L970.8 486.9L970.8 489.5L969.6 494.0L969.1 498.9L970.3 504.9L972.1 511.2L972.5 514.4L970.6 511.8L967.3 506.0L963.9 502.4L960.2 504.2L956.3 508.1Z"/></clipPath>
<path d="M954.4 509.3L955.7 504.9L958.9 497.8L962.2 492.1L965.4 488.8L968.7 486.9L970.8 486.9L970.8 489.5L969.6 494.0L969.1 498.9L970.3 504.9L972.1 511.2L972.5 514.4L970.6 511.8L967.3 506.0L963.9 502.4L960.2 504.2L956.3 508.1Z" fill="#636058"/>
<g clip-path="url(#k24)"><path d="M954.4 509.3L955.7 504.9L955.7 526.9L954.4 531.3ZM955.7 504.9L958.9 497.8L958.9 519.8L955.7 526.9ZM958.9 497.8L962.2 492.1L962.2 514.1L958.9 519.8ZM969.6 494.0L970.8 489.5L970.8 511.5L969.6 516.0ZM969.1 498.9L969.6 494.0L969.6 516.0L969.1 520.9ZM962.2 492.1L965.4 488.8L965.4 510.8L962.2 514.1ZM965.4 488.8L968.7 486.9L968.7 508.9L965.4 510.8ZM960.2 504.2L963.9 502.4L963.9 524.4L960.2 526.2ZM956.3 508.1L960.2 504.2L960.2 526.2L956.3 530.1ZM954.4 509.3L956.3 508.1L956.3 530.1L954.4 531.3ZM968.7 486.9L970.8 486.9L970.8 508.9L968.7 508.9ZM969.1 498.9L970.3 504.9L970.3 526.9L969.1 520.9ZM970.3 504.9L972.1 511.2L972.1 533.2L970.3 526.9ZM972.1 511.2L972.5 514.4L972.5 536.4L972.1 533.2ZM970.6 511.8L972.5 514.4L972.5 536.4L970.6 533.8ZM967.3 506.0L970.6 511.8L970.6 533.8L967.3 528.0ZM963.9 502.4L967.3 506.0L967.3 528.0L963.9 524.4Z" fill="#3c3b37" stroke="#3c3b37" stroke-width=".6"/><path d="M954.4 509.3L955.7 504.9L955.7 526.9L954.4 531.3ZM955.7 504.9L958.9 497.8L958.9 519.8L955.7 526.9ZM958.9 497.8L962.2 492.1L962.2 514.1L958.9 519.8ZM969.6 494.0L970.8 489.5L970.8 511.5L969.6 516.0ZM969.1 498.9L969.6 494.0L969.6 516.0L969.1 520.9Z" fill="#302f2b"/><path d="M962.2 492.1L965.4 488.8L965.4 510.8L962.2 514.1ZM965.4 488.8L968.7 486.9L968.7 508.9L965.4 510.8ZM960.2 504.2L963.9 502.4L963.9 524.4L960.2 526.2ZM956.3 508.1L960.2 504.2L960.2 526.2L956.3 530.1ZM954.4 509.3L956.3 508.1L956.3 530.1L954.4 531.3Z" fill="#363531"/><path d="M963.9 502.4L967.3 506.0L967.3 528.0L963.9 524.4Z" fill="#43423d"/><path d="M969.1 498.9L970.3 504.9L970.3 526.9L969.1 520.9ZM970.3 504.9L972.1 511.2L972.1 533.2L970.3 526.9ZM972.1 511.2L972.5 514.4L972.5 536.4L972.1 533.2ZM970.6 511.8L972.5 514.4L972.5 536.4L970.6 533.8ZM967.3 506.0L970.6 511.8L970.6 533.8L967.3 528.0Z" fill="#4a4944"/><path d="M954.4 509.3L955.7 504.9L958.9 497.8L962.2 492.1L965.4 488.8L968.7 486.9L970.8 486.9L970.8 489.5L969.6 494.0L969.1 498.9L970.3 504.9L972.1 511.2L972.5 514.4L970.6 511.8L967.3 506.0L963.9 502.4L960.2 504.2L956.3 508.1Z" fill="none" stroke="#101010" stroke-width=".9" transform="translate(0 22.0)"/></g>
<path d="M954.4 509.3L955.7 504.9L958.9 497.8L962.2 492.1L965.4 488.8L968.7 486.9L970.8 486.9L970.8 489.5L969.6 494.0L969.1 498.9L970.3 504.9L972.1 511.2L972.5 514.4L970.6 511.8L967.3 506.0L963.9 502.4L960.2 504.2L956.3 508.1Z" fill="none" stroke="#101010" stroke-width="1.5" stroke-linejoin="round"/>
<clipPath id="k25"><path d="M914.8 680.1L977.7 641.3L969.1 655.1L1006.1 639.6L967.4 659.4L922.6 686.1Z"/></clipPath>
<path d="M914.8 680.1L977.7 641.3L969.1 655.1L1006.1 639.6L967.4 659.4L922.6 686.1Z" fill="#636058"/>
<g clip-path="url(#k25)"><path d="M914.8 680.1L977.7 641.3L977.7 663.3L914.8 702.1ZM969.1 655.1L1006.1 639.6L1006.1 661.6L969.1 677.1ZM967.4 659.4L1006.1 639.6L1006.1 661.6L967.4 681.4ZM922.6 686.1L967.4 659.4L967.4 681.4L922.6 708.1ZM969.1 655.1L977.7 641.3L977.7 663.3L969.1 677.1ZM914.8 680.1L922.6 686.1L922.6 708.1L914.8 702.1Z" fill="#3c3b37" stroke="#3c3b37" stroke-width=".6"/><path d="M969.1 655.1L977.7 641.3L977.7 663.3L969.1 677.1Z" fill="#302f2b"/><path d="M914.8 680.1L977.7 641.3L977.7 663.3L914.8 702.1ZM969.1 655.1L1006.1 639.6L1006.1 661.6L969.1 677.1ZM967.4 659.4L1006.1 639.6L1006.1 661.6L967.4 681.4ZM922.6 686.1L967.4 659.4L967.4 681.4L922.6 708.1Z" fill="#363531"/><path d="M914.8 680.1L922.6 686.1L922.6 708.1L914.8 702.1Z" fill="#43423d"/><path d="M914.8 680.1L977.7 641.3L969.1 655.1L1006.1 639.6L967.4 659.4L922.6 686.1Z" fill="none" stroke="#101010" stroke-width=".9" transform="translate(0 22.0)"/></g>
<path d="M914.8 680.1L977.7 641.3L969.1 655.1L1006.1 639.6L967.4 659.4L922.6 686.1Z" fill="none" stroke="#101010" stroke-width="1.5" stroke-linejoin="round"/>
<clipPath id="k26"><path d="M943.2 675.8L975.1 672.3L945.0 681.0Z"/></clipPath>
<path d="M943.2 675.8L975.1 672.3L945.0 681.0Z" fill="#636058"/>
<g clip-path="url(#k26)"><path d="M943.2 675.8L975.1 672.3L975.1 694.3L943.2 697.8ZM945.0 681.0L975.1 672.3L975.1 694.3L945.0 703.0ZM943.2 675.8L945.0 681.0L945.0 703.0L943.2 697.8Z" fill="#3c3b37" stroke="#3c3b37" stroke-width=".6"/><path d="M945.0 681.0L975.1 672.3L975.1 694.3L945.0 703.0Z" fill="#363531"/><path d="M943.2 675.8L945.0 681.0L945.0 703.0L943.2 697.8Z" fill="#4a4944"/><path d="M943.2 675.8L975.1 672.3L945.0 681.0Z" fill="none" stroke="#101010" stroke-width=".9" transform="translate(0 22.0)"/></g>
<path d="M943.2 675.8L975.1 672.3L945.0 681.0Z" fill="none" stroke="#101010" stroke-width="1.5" stroke-linejoin="round"/>
<clipPath id="k27"><path d="M938.1 686.1L943.7 686.1L954.1 687.2L963.9 689.6L971.4 693.4L978.4 698.4L984.6 703.3L991.0 709.0L996.6 714.7L998.4 717.1L994.1 713.8L986.0 707.3L977.7 701.6L970.2 698.5L962.4 696.2L955.3 693.9L947.6 690.9L940.4 687.9Z"/></clipPath>
<path d="M938.1 686.1L943.7 686.1L954.1 687.2L963.9 689.6L971.4 693.4L978.4 698.4L984.6 703.3L991.0 709.0L996.6 714.7L998.4 717.1L994.1 713.8L986.0 707.3L977.7 701.6L970.2 698.5L962.4 696.2L955.3 693.9L947.6 690.9L940.4 687.9Z" fill="#636058"/>
<g clip-path="url(#k27)"><path d="M938.1 686.1L943.7 686.1L943.7 708.1L938.1 708.1ZM943.7 686.1L954.1 687.2L954.1 709.2L943.7 708.1ZM954.1 687.2L963.9 689.6L963.9 711.6L954.1 709.2ZM963.9 689.6L971.4 693.4L971.4 715.4L963.9 711.6ZM971.4 693.4L978.4 698.4L978.4 720.4L971.4 715.4ZM978.4 698.4L984.6 703.3L984.6 725.3L978.4 720.4ZM984.6 703.3L991.0 709.0L991.0 731.0L984.6 725.3ZM991.0 709.0L996.6 714.7L996.6 736.7L991.0 731.0ZM994.1 713.8L998.4 717.1L998.4 739.1L994.1 735.8ZM986.0 707.3L994.1 713.8L994.1 735.8L986.0 729.3ZM977.7 701.6L986.0 707.3L986.0 729.3L977.7 723.6ZM970.2 698.5L977.7 701.6L977.7 723.6L970.2 720.5ZM962.4 696.2L970.2 698.5L970.2 720.5L962.4 718.2ZM955.3 693.9L962.4 696.2L962.4 718.2L955.3 715.9ZM947.6 690.9L955.3 693.9L955.3 715.9L947.6 712.9ZM940.4 687.9L947.6 690.9L947.6 712.9L940.4 709.9ZM938.1 686.1L940.4 687.9L940.4 709.9L938.1 708.1ZM996.6 714.7L998.4 717.1L998.4 739.1L996.6 736.7Z" fill="#3c3b37" stroke="#3c3b37" stroke-width=".6"/><path d="M963.9 689.6L971.4 693.4L971.4 715.4L963.9 711.6ZM971.4 693.4L978.4 698.4L978.4 720.4L971.4 715.4ZM978.4 698.4L984.6 703.3L984.6 725.3L978.4 720.4ZM984.6 703.3L991.0 709.0L991.0 731.0L984.6 725.3ZM991.0 709.0L996.6 714.7L996.6 736.7L991.0 731.0ZM994.1 713.8L998.4 717.1L998.4 739.1L994.1 735.8ZM986.0 707.3L994.1 713.8L994.1 735.8L986.0 729.3ZM977.7 701.6L986.0 707.3L986.0 729.3L977.7 723.6ZM970.2 698.5L977.7 701.6L977.7 723.6L970.2 720.5ZM962.4 696.2L970.2 698.5L970.2 720.5L962.4 718.2ZM955.3 693.9L962.4 696.2L962.4 718.2L955.3 715.9ZM947.6 690.9L955.3 693.9L955.3 715.9L947.6 712.9ZM940.4 687.9L947.6 690.9L947.6 712.9L940.4 709.9ZM938.1 686.1L940.4 687.9L940.4 709.9L938.1 708.1Z" fill="#43423d"/><path d="M996.6 714.7L998.4 717.1L998.4 739.1L996.6 736.7Z" fill="#4a4944"/><path d="M938.1 686.1L943.7 686.1L954.1 687.2L963.9 689.6L971.4 693.4L978.4 698.4L984.6 703.3L991.0 709.0L996.6 714.7L998.4 717.1L994.1 713.8L986.0 707.3L977.7 701.6L970.2 698.5L962.4 696.2L955.3 693.9L947.6 690.9L940.4 687.9Z" fill="none" stroke="#101010" stroke-width=".9" transform="translate(0 22.0)"/></g>
<path d="M938.1 686.1L943.7 686.1L954.1 687.2L963.9 689.6L971.4 693.4L978.4 698.4L984.6 703.3L991.0 709.0L996.6 714.7L998.4 717.1L994.1 713.8L986.0 707.3L977.7 701.6L970.2 698.5L962.4 696.2L955.3 693.9L947.6 690.9L940.4 687.9Z" fill="none" stroke="#101010" stroke-width="1.5" stroke-linejoin="round"/>
<clipPath id="k28"><path d="M936.3 701.6L940.6 701.4L948.0 702.0L955.3 703.3L962.1 706.1L968.8 709.6L972.5 712.0L971.9 712.2L968.4 711.3L963.9 710.2L958.5 709.3L952.2 708.1L946.7 706.8L941.6 704.9L937.4 702.9Z"/></clipPath>
<path d="M936.3 701.6L940.6 701.4L948.0 702.0L955.3 703.3L962.1 706.1L968.8 709.6L972.5 712.0L971.9 712.2L968.4 711.3L963.9 710.2L958.5 709.3L952.2 708.1L946.7 706.8L941.6 704.9L937.4 702.9Z" fill="#636058"/>
<g clip-path="url(#k28)"><path d="M936.3 701.6L940.6 701.4L940.6 723.4L936.3 723.6ZM940.6 701.4L948.0 702.0L948.0 724.0L940.6 723.4ZM948.0 702.0L955.3 703.3L955.3 725.3L948.0 724.0ZM968.4 711.3L971.9 712.2L971.9 734.2L968.4 733.3ZM963.9 710.2L968.4 711.3L968.4 733.3L963.9 732.2ZM958.5 709.3L963.9 710.2L963.9 732.2L958.5 731.3ZM952.2 708.1L958.5 709.3L958.5 731.3L952.2 730.1ZM946.7 706.8L952.2 708.1L952.2 730.1L946.7 728.8ZM955.3 703.3L962.1 706.1L962.1 728.1L955.3 725.3ZM962.1 706.1L968.8 709.6L968.8 731.6L962.1 728.1ZM968.8 709.6L972.5 712.0L972.5 734.0L968.8 731.6ZM941.6 704.9L946.7 706.8L946.7 728.8L941.6 726.9ZM937.4 702.9L941.6 704.9L941.6 726.9L937.4 724.9ZM971.9 712.2L972.5 712.0L972.5 734.0L971.9 734.2ZM936.3 701.6L937.4 702.9L937.4 724.9L936.3 723.6Z" fill="#3c3b37" stroke="#3c3b37" stroke-width=".6"/><path d="M971.9 712.2L972.5 712.0L972.5 734.0L971.9 734.2Z" fill="#363531"/><path d="M955.3 703.3L962.1 706.1L962.1 728.1L955.3 725.3ZM962.1 706.1L968.8 709.6L968.8 731.6L962.1 728.1ZM968.8 709.6L972.5 712.0L972.5 734.0L968.8 731.6ZM941.6 704.9L946.7 706.8L946.7 728.8L941.6 726.9ZM937.4 702.9L941.6 704.9L941.6 726.9L937.4 724.9Z" fill="#43423d"/><path d="M936.3 701.6L937.4 702.9L937.4 724.9L936.3 723.6Z" fill="#4a4944"/><path d="M936.3 701.6L940.6 701.4L948.0 702.0L955.3 703.3L962.1 706.1L968.8 709.6L972.5 712.0L971.9 712.2L968.4 711.3L963.9 710.2L958.5 709.3L952.2 708.1L946.7 706.8L941.6 704.9L937.4 702.9Z" fill="none" stroke="#101010" stroke-width=".9" transform="translate(0 22.0)"/></g>
<path d="M936.3 701.6L940.6 701.4L948.0 702.0L955.3 703.3L962.1 706.1L968.8 709.6L972.5 712.0L971.9 712.2L968.4 711.3L963.9 710.2L958.5 709.3L952.2 708.1L946.7 706.8L941.6 704.9L937.4 702.9Z" fill="none" stroke="#101010" stroke-width="1.5" stroke-linejoin="round"/>
</svg>
<svg width="1920" height="842" viewBox="0 140 1920 842" style="position:absolute;left:0;top:140px">
<rect x="4.5" y="144.5" width="299" height="24" fill="#f5f5f5" stroke="#e0e0e0"/>
<path d="M13.5 153.5v6l-3.5-3zM18.5 153.5v6l-3.5-3z" fill="#7a7a7a"/><path d="M283 156.2h8" stroke="#555" stroke-width="1.4"/>
<rect x="40" y="174" width="212" height="20" fill="#f5f5f5"/><rect x="65" y="174" width="162" height="20" fill="#d6d6d6"/>
<path d="M22.2 182l3.8 3.8 3.8-3.8" fill="none" stroke="#333" stroke-width="1.3"/><path d="M43 184Q51 174.5 59 184Q51 193.5 43 184z" fill="#6e6e6e"/><circle cx="51" cy="184" r="3.3" fill="#f5f5f5"/><circle cx="51" cy="184" r="1.7" fill="#6e6e6e"/>
<path d="M70.5 180l2.5-3h9.5v10l-2.5 3h-9.5z" fill="#ececec" stroke="#555" stroke-width="1" stroke-linejoin="round"/><path d="M70.5 180h9.5v10M80 180l2.5-3" fill="none" stroke="#555" stroke-width=".9"/>
<circle cx="237" cy="184.3" r="6" fill="#fff" stroke="#222" stroke-width="1.2"/><circle cx="237" cy="184.3" r="2.6" fill="#222"/>
<rect x="58" y="198.3" width="130" height="20" fill="#f5f5f5" opacity=".96"/>
<path d="M42 204.3l4 4-4 4" fill="none" stroke="#444" stroke-width="1.2"/>
<path d="M76.79 206.48L76.79 210.12L74.31 210.54L74.34 210.47L75.8 212.52L73.22 215.1L71.17 213.64L71.24 213.61L70.82 216.09L67.18 216.09L66.76 213.61L66.83 213.64L64.78 215.1L62.2 212.52L63.66 210.47L63.69 210.54L61.21 210.12L61.21 206.48L63.69 206.06L63.66 206.13L62.2 204.08L64.78 201.5L66.83 202.96L66.76 202.99L67.18 200.51L70.82 200.51L71.24 202.99L71.17 202.96L73.22 201.5L75.8 204.08L74.34 206.13L74.31 206.06z" fill="#6e6e6e"/><circle cx="69" cy="208.3" r="2.6" fill="#f5f5f5"/>
<rect x="58" y="222.3" width="134" height="20" fill="#f5f5f5" opacity=".96"/>
<path d="M42 228.3l4 4-4 4" fill="none" stroke="#444" stroke-width="1.2"/>
<path d="M61.5 225.8h5.5l1.2 1.8h7.8v10.7h-14.5z" fill="none" stroke="#6e6e6e" stroke-width="1.1"/><path d="M61.5 225.8h5.5l1.2 1.8h-6.7z" fill="#6e6e6e" opacity=".5"/>
<rect x="58" y="246.2" width="91" height="20" fill="#f5f5f5" opacity=".96"/>
<path d="M42 252.2l4 4-4 4" fill="none" stroke="#444" stroke-width="1.2"/>
<path d="M61.5 256.2Q69 247.7 76.5 256.2Q69 264.7 61.5 256.2z" fill="none" stroke="#8a8a8a" stroke-width="1"/><circle cx="69" cy="256.2" r="2.6" fill="none" stroke="#8a8a8a" stroke-width="1"/><path d="M63.5 251.2L75 261.7" stroke="#8a8a8a" stroke-width="1.1"/>
<path d="M86.5 249.7h5.5l1.2 1.8h7.8v10.7h-14.5z" fill="none" stroke="#6e6e6e" stroke-width="1.1"/><path d="M86.5 249.7h5.5l1.2 1.8h-6.7z" fill="#6e6e6e" opacity=".5"/>
<rect x="58" y="270.2" width="95" height="20" fill="#f5f5f5" opacity=".96"/>
<path d="M42 276.2l4 4-4 4" fill="none" stroke="#444" stroke-width="1.2"/>
<path d="M61 280.2Q69 270.7 77 280.2Q69 289.7 61 280.2z" fill="#6e6e6e"/><circle cx="69" cy="280.2" r="3.3" fill="#f5f5f5"/><circle cx="69" cy="280.2" r="1.7" fill="#6e6e6e"/>
<path d="M86.5 273.7h5.5l1.2 1.8h7.8v10.7h-14.5z" fill="none" stroke="#6e6e6e" stroke-width="1.1"/><path d="M86.5 273.7h5.5l1.2 1.8h-6.7z" fill="#6e6e6e" opacity=".5"/>
<rect x="58" y="294.2" width="103" height="20" fill="#f5f5f5" opacity=".96"/>
<path d="M42 300.2l4 4-4 4" fill="none" stroke="#444" stroke-width="1.2"/>
<path d="M61 304.2Q69 294.7 77 304.2Q69 313.7 61 304.2z" fill="#6e6e6e"/><circle cx="69" cy="304.2" r="3.3" fill="#f5f5f5"/><circle cx="69" cy="304.2" r="1.7" fill="#6e6e6e"/>
<path d="M86.5 297.7h5.5l1.2 1.8h7.8v10.7h-14.5z" fill="none" stroke="#6e6e6e" stroke-width="1.1"/><path d="M86.5 297.7h5.5l1.2 1.8h-6.7z" fill="#6e6e6e" opacity=".5"/>
<rect x="4.5" y="953.5" width="299" height="24" fill="#f5f5f5" stroke="#e0e0e0"/><path d="M283.5 965.2h7M287 961.7v7" stroke="#555" stroke-width="1.4"/>
<rect x="841" y="952.5" width="239" height="23.3" fill="#f5f5f5"/>
<ellipse cx="852.5" cy="963" rx="3.3" ry="7.5" fill="none" stroke="#444" stroke-width="1.1"/><ellipse cx="852.5" cy="963" rx="7.5" ry="3.3" fill="none" stroke="#444" stroke-width="1.1" transform="rotate(-25 852.5 963)"/><circle cx="852" cy="962.5" r="1.7" fill="#1f8ae0"/><path d="M866 962h5.6l-2.8 3.3z" fill="#6a6a6a"/>
<path d="M879.5 959.5h13v10.5h-13z" fill="#6ab0e6" stroke="#555" stroke-width="1"/><path d="M880 959.5l4-3.5v3.5M886 959.5l3.5-2.5v2.5" fill="#999" stroke="#555" stroke-width=".8"/>
<path d="M906.5 964.5l-1.5-1.8q-1.2-.8-1.800.4l3.3 5.8q.8 1.6 2.5 1.6h4q2.5 0 3.1-2.5l1.3-6q.2-1.4-1.1-1.4t-1.5 1.4v-3.5q0-1.3-1.1-1.3t-1.1 1.3v-1q0-1.3-1.1-1.3t-1.1 1.3v1q0-1.3-1.1-1.3t-1.1 1.3z" fill="#f5f5f5" stroke="#8a8a8a" stroke-width=".8"/>
<circle cx="935.5" cy="963" r="4.8" fill="#dcdcdc" stroke="#555" stroke-width="1.1"/><path d="M939 966.5l4.5 4.5" stroke="#a86a2a" stroke-width="1.6"/><path d="M942 957.3h4.8M944.4 955v4.6M942 961.7h4.8" stroke="#444" stroke-width=".9"/>
<rect x="956.5" y="955.5" width="15.5" height="15.5" fill="none" stroke="#333" stroke-width="1" stroke-dasharray="2.5 1.5"/><circle cx="963" cy="961.5" r="6.3" fill="#dcdcdc" stroke="#555" stroke-width="1.1"/><path d="M968 967l4.5 4.5" stroke="#a86a2a" stroke-width="1.6"/><path d="M978.2 962h5.6l-2.8 3.3z" fill="#6a6a6a"/>
<rect x="990.5" y="957.5" width="15" height="10.5" fill="#b0b0b0" stroke="#555" stroke-width="1.2"/><path d="M993 970.3h10M998 968v2.3" stroke="#555" stroke-width="1.2"/><path d="M1009.2 962h5.6l-2.8 3.3z" fill="#6a6a6a"/>
<path d="M1021 956h13.5v13H1021zM1025.5 956v13M1030 956v13M1021 960.3h13.5M1021 964.7h13.5" fill="#fff" stroke="#555" stroke-width="1.2"/><path d="M1040.2 962h5.6l-2.8 3.3z" fill="#6a6a6a"/>
<rect x="1052.5" y="956.5" width="15.5" height="13" fill="#e4e4e4" stroke="#666" stroke-width="1.2"/><path d="M1060.2 956.5v13M1052.5 963h15.5" stroke="#666" stroke-width="1.2"/><path d="M1055 958.8h3v2h-3zM1062.5 958.8h3v2h-3zM1055 965h3v2h-3zM1062.5 965h3v2h-3z" fill="#fff" stroke="#888" stroke-width=".5"/><path d="M1071.2 962h5.6l-2.8 3.3z" fill="#6a6a6a"/>
<defs><filter id="vs" x="-30%" y="-30%" width="160%" height="160%"><feGaussianBlur stdDeviation="4"/></filter></defs>
<path d="M1826 226l30 22 36-22 8 8-40 26z" fill="#999" opacity=".35" filter="url(#vs)"/>
<path d="M1822 182.5L1853 168.5q3-1 6 0L1891.5 184 1888.5 220.5 1856.5 243.8 1825 222.5z" fill="#eeeeee" opacity=".93"/>
<path d="M1822 182.5L1856.5 203.5 1856.5 243.8 1825 222.5z" fill="#e9e9e9" opacity=".9"/><path d="M1856.5 203.5L1891.5 184 1888.5 220.5 1856.5 243.8z" fill="#e2e2e2" opacity=".9"/>
<path d="M1822 182.5L1853 168.5q3-1 6 0L1891.5 184 1856.5 203.5z" fill="#f2f2f2"/>
<path d="M1822 182.5L1853 168.5q3-1 6 0L1891.5 184 1888.5 220.5 1856.5 243.8 1825 222.5zM1822 182.5L1856.5 203.5 1891.5 184M1856.5 203.5V243.8" fill="none" stroke="#555" stroke-width=".9" stroke-linejoin="round"/>
<path d="M1820.3 177L1824.8 222.4" stroke="#4a4af0" stroke-width="2"/><path d="M1824.8 222.4L1862.5 250.2" stroke="#f08080" stroke-width="2.4" opacity=".9"/>
</svg>
<svg width="160" height="140" viewBox="1760 140 160 140" style="position:absolute;left:1760px;top:140px" font-family='Liberation Sans,Noto Sans CJK JP,sans-serif'><text transform="matrix(.78 .42 -.86 .44 1857 186)" text-anchor="middle" font-size="19" fill="#8a8e96" y="7">上</text><text transform="matrix(.86 .52 -.05 1 1840.3 213)" text-anchor="middle" font-size="20" fill="#8a8e96" y="7">前</text><text transform="matrix(.86 -.5 -.07 1 1873 212)" text-anchor="middle" font-size="20" fill="#8a8e96" y="7">右</text><text x="1813.5" y="174.500" font-size="12.500" fill="#6a6af0">Z</text><text x="1863.500" y="258.500" font-size="12.500" fill="#f08080">X</text></svg>
<svg width="1920" height="98" viewBox="0 982 1920 98" style="position:absolute;left:0;top:982px">
<defs><linearGradient id="tk" x1="0" x2="1"><stop offset="0" stop-color="#d9dccc"/><stop offset=".2" stop-color="#dde0cb"/><stop offset=".42" stop-color="#ece7cd"/><stop offset=".6" stop-color="#ebe8c8"/><stop offset=".8" stop-color="#e3e7c6"/><stop offset="1" stop-color="#e6ebc8"/></linearGradient><linearGradient id="wn" x1="0" y1="0" x2="1" y2="1"><stop offset="0" stop-color="#4cc2f5"/><stop offset="1" stop-color="#0a6fd6"/></linearGradient></defs>
<rect y="982" width="1920" height="50" fill="#f5f5f5"/>
<rect y="1032" width="1920" height="48" fill="url(#tk)"/><rect y="1032" width="1920" height="1" fill="#c9cbc0"/>
<path d="M11 1000v12.5h2.3V1000zM22 1000v12.5l-8.5-6.25z" fill="#6e6e6e"/>
<path d="M44 1001.5v10l-9-5zM45.5 1003.5h2.3v6h-2.3z" fill="#6e6e6e"/>
<path d="M61 999v14.5l12-7.25z" fill="#6e6e6e"/>
<path d="M88 1001.5v10l9-5zM84.2 1003.5h2.3v6h-2.3z" fill="#6e6e6e"/>
<path d="M111 1000v12.5l8.5-6.25zM119.7 1000v12.5h2.3V1000z" fill="#6e6e6e"/>
<rect x="146.5" y="998.5" width="11" height="11" fill="#fff" stroke="#444" stroke-width=".9" stroke-dasharray="4 2"/><rect x="145.5" y="997.5" width="2" height="2" fill="#1f8ae0"/><rect x="156.5" y="997.5" width="2" height="2" fill="#1f8ae0"/><rect x="145.5" y="1008.5" width="2" height="2" fill="#1f8ae0"/><path d="M152 1010l6-6 2.2 2.2-6 6-3 .8z" fill="#f5a51d"/><path d="M158 1004l2.2 2.2 1.3-1.3q0-2.2-2.2-2.2z" fill="#e8443a"/><path d="M170 1010h9l3-3v3l-3 3h-9z" fill="#c4c4c4"/><path d="M170 1000.5h9v10h-9z" fill="#6ab0e6"/><path d="M170 1000.5l3-3h9l-3 3z" fill="#8fcbf7"/><path d="M179 1000.5l3-3v10l-3 3z" fill="#4a90c8"/><path d="M184 1010v-11" stroke="#222" stroke-width=".9"/><path d="M182.4 1000l1.6-3 1.6 3z" fill="#222"/><rect x="194.5" y="998.5" width="11" height="11" fill="#fff" stroke="#444" stroke-width=".9" stroke-dasharray="4 2"/><rect x="193.5" y="997.5" width="2" height="2" fill="#1f8ae0"/><rect x="204.5" y="997.5" width="2" height="2" fill="#1f8ae0"/><rect x="193.5" y="1008.5" width="2" height="2" fill="#1f8ae0"/><path d="M200 1010l6-6 2.2 2.2-6 6-3 .8z" fill="#f5a51d"/><path d="M206 1004l2.2 2.2 1.3-1.3q0-2.2-2.2-2.2z" fill="#e8443a"/><path d="M218 1010h9l3-3v3l-3 3h-9z" fill="#c4c4c4"/><path d="M218 1000.5h9v10h-9z" fill="#6ab0e6"/><path d="M218 1000.5l3-3h9l-3 3z" fill="#8fcbf7"/><path d="M227 1000.5l3-3v10l-3 3z" fill="#4a90c8"/><path d="M232 1010v-11" stroke="#222" stroke-width=".9"/><path d="M230.4 1000l1.6-3 1.6 3z" fill="#222"/>
<path d="M155 1017.5v4.5h72v-4.5M178.5 1017.5v4.5M202.5 1017.5v4.5" fill="none" stroke="#c4c4c4" stroke-width="1.6"/>
<path d="M232 992h12v2.5l-6 6-6-6z" fill="#2a2a2a"/><path d="M238 998v25.5" stroke="#2a2a2a" stroke-width="1.8"/>
<path d="M1906.3 1004.79L1906.3 1008.21L1903.97 1008.6L1904 1008.53L1905.37 1010.45L1902.95 1012.87L1901.03 1011.5L1901.1 1011.47L1900.71 1013.8L1897.29 1013.8L1896.9 1011.47L1896.97 1011.5L1895.05 1012.87L1892.63 1010.45L1894 1008.53L1894.03 1008.6L1891.7 1008.21L1891.7 1004.79L1894.03 1004.4L1894 1004.47L1892.63 1002.55L1895.05 1000.13L1896.97 1001.5L1896.9 1001.53L1897.29 999.2L1900.71 999.2L1901.1 1001.53L1901.03 1001.5L1902.95 1000.13L1905.37 1002.55L1904 1004.47L1903.97 1004.4z" fill="#5a5a5a"/><circle cx="1899" cy="1006.5" r="2.5" fill="#f5f5f5"/>
<circle cx="30" cy="1052" r="8" fill="#f5a623"/><path d="M24 1063.5q-3.5 0-3.5-3t3.5-3q1-3.5 4.8-3.5 3.7 0 4.8 3 2-.8 4 .3 2.700.2 2.7 3t-3 3.2z" fill="#c8d8ee" stroke="#9ab0d8" stroke-width=".6"/>
<circle cx="38" cy="1046" r="8" fill="#c42b1c"/>
<g fill="url(#wn)"><rect x="704.5" y="1044.5" width="11" height="11"/><rect x="716.7" y="1044.5" width="11" height="11"/><rect x="704.5" y="1056.7" width="11" height="11"/><rect x="716.7" y="1056.7" width="11" height="11"/></g>
<rect x="741.5" y="1040.5" width="218.5" height="31" rx="15.5" fill="#f4f2e4" stroke="#d8d6c4"/><circle cx="759" cy="1055" r="5" fill="none" stroke="#222" stroke-width="1.5"/><path d="M762.7 1058.7l4 4" stroke="#222" stroke-width="1.7" stroke-linecap="round"/>
<path d="M914 1064q3-12 14-19-4 10-9 14-1 3-3 4z" fill="#b89a7a"/><path d="M914.5 1065l3-6" stroke="#3a5a9a" stroke-width="1.2"/><rect x="920" y="1058" width="8" height="8" rx="2" fill="#4a4a6a"/><rect x="922" y="1055.5" width="4" height="3" fill="#6a6a8a"/>
<rect x="932" y="1048" width="4.5" height="18" fill="#a0522d"/><rect x="936.5" y="1046" width="4.5" height="20" fill="#c8782a"/><rect x="941" y="1049" width="4" height="17" fill="#8a3a2a"/><rect x="945" y="1050" width="3.5" height="16" fill="#3a7a4a"/><rect x="948.5" y="1052" width="3.5" height="14" fill="#c8a03a"/>
<path d="M979.5 1049v-1.5q0-3 4.5-3t4.5 3v1.5" fill="none" stroke="#2a9ae8" stroke-width="1.8"/><rect x="973" y="1048.5" width="22" height="18.5" rx="3" fill="#1c4a8a"/><rect x="973" y="1048.5" width="22" height="5" rx="2" fill="#2468b8"/><rect x="979.5" y="1054" width="4" height="4" fill="#f25022"/><rect x="984.5" y="1054" width="4" height="4" fill="#7fba00"/><rect x="979.5" y="1059" width="4" height="4" fill="#00a4ef"/><rect x="984.5" y="1059" width="4" height="4" fill="#ffb900"/>
<path d="M1017.5 1048q0-2 2-2h6l2 2.5h11q2 0 2 2v2h-23z" fill="#f5b82e"/><rect x="1017.5" y="1050.5" width="23.5" height="16" rx="2" fill="#fcd55c"/><path d="M1017.5 1061.5h23.5v3q0 2-2 2h-19.5q-2 0-2-2z" fill="#2a8ae0"/><rect x="1024.5" y="1059.5" width="9.5" height="3.5" rx="1.5" fill="#1a6ac0"/>
<rect x="1026" y="1072.5" width="6" height="2.5" rx="1.2" fill="#8a8a80"/>
<circle cx="1073" cy="1056" r="12" fill="#1a7fd4"/><path d="M1061.5 1059q-1-12 11.5-15 11 0 12 11 0 5-5 5.5-4 0-4-3.5 0-3-3.5-3.5-6 0-7 5.5 0 5 5 8-8-1-9-8z" fill="#4fd88a"/><path d="M1066 1060q0-5 6-6 4 0 4.5 3.5 0 3.5 4 3.5-3 7-9 6-5.5-1.5-5.5-7z" fill="#0c4fa8"/><circle cx="1073.5" cy="1056.5" r="3.5" fill="#e8f4fc"/>
<circle cx="1116" cy="1057" r="11.5" fill="#db4437"/><path d="M1116 1057l-10-5.7a11.5 11.5 0 0 0 4.3 15.7z" fill="#0f9d58"/><path d="M1116 1057l-5.7 10a11.5 11.5 0 0 0 17.2-10z" fill="#ffcd40"/><path d="M1116 1057h11.5a11.5 11.5 0 0 0-1.5-5.7z" fill="#db4437"/><circle cx="1116" cy="1057" r="5.3" fill="#fff"/><circle cx="1116" cy="1057" r="4.2" fill="#4285f4"/><circle cx="1126" cy="1047" r="7" fill="#e8407a"/>
<rect x="1114" y="1072.5" width="6" height="2.5" rx="1.2" fill="#8a8a80"/>
<rect x="1142" y="1036" width="39" height="41" rx="4" fill="#f4efe2" stroke="#e4dfd0"/><rect x="1150" y="1045" width="22" height="24" rx="3" fill="#ff6b00"/><path d="M1150 1060h22v6q0 3-3 3h-16q-3 0-3-3z" fill="#a8420a"/><path d="M1172 1050l3 2v14l-3 2z" fill="#c8500a"/><path d="M1157.5 1048.5h7.5v2.3h-5v2.5h4.3v2.2h-4.3v3.5h-2.5z" fill="#fff"/><rect x="1153.5" y="1072.5" width="15" height="3" rx="1.5" fill="#1a7ad4"/>
<rect x="1193" y="1044" width="24" height="24" rx="5" fill="#0db04b"/><path d="M1199 1049h5v8h-5zM1206 1049h5v4.5h-5zM1199 1058.5h5v4.5h-5zM1206 1055h5v8h-5z" fill="#fff"/><rect x="1202" y="1072.5" width="6" height="2.5" rx="1.2" fill="#8a8a80"/>
<path d="M1656.5 1058.5l4.8-4.8 4.8 4.8" fill="none" stroke="#222" stroke-width="1.5"/>
<path d="M1687 1050l12 12M1699 1050l-12 12" stroke="#fff" stroke-width="1.8"/>
<circle cx="1730" cy="1055.5" r="6.8" fill="#1467d8"/><circle cx="1736" cy="1059.5" r="2.8" fill="#e03a2a"/><circle cx="1733.5" cy="1060.8" r="1.8" fill="#f5c518"/>
<rect x="1761.5" y="1048.5" width="11" height="10" rx="1" fill="none" stroke="#222" stroke-width="1.2"/><path d="M1764 1063h6.5M1767 1058.5v4.5M1775 1053v10" stroke="#222" stroke-width="1.2"/><rect x="1773.3" y="1048.5" width="3.4" height="5.5" rx="1.5" fill="#e6e8c8" stroke="#222" stroke-width="1"/>
<path d="M1785.5 1054h2.5l4-3.5v12l-4-3.5h-2.5z" fill="none" stroke="#222" stroke-width="1.1" stroke-linejoin="round"/><path d="M1794.5 1053.5q1.8 2.7 0 5.5M1797 1051.5q3 4.7 0 9.5M1799.5 1049.5q4.2 6.7 0 13.5" fill="none" stroke="#222" stroke-width="1.1"/>
</svg>
<span id="t0" style="left:24.0px;top:2.1px;font-size:12px;color:#111;font-weight:400;transform:scaleX(0.9200);">おじさん、スタンプ　原案 - Autodesk Fusion 個人用(商用利用不可)</span>
<span id="t1" style="left:407.0px;top:33.1px;font-size:12px;color:#2a2a2a;font-weight:400;transform:scaleX(0.8298);">免許、カードケース　本体</span>
<span id="t2" style="left:886.7px;top:33.1px;font-size:12px;color:#2a2a2a;font-weight:400;transform:scaleX(0.8201);">免許、カードケース　蓋*</span>
<span id="t3" style="left:1360.0px;top:33.1px;font-size:12px;color:#2a2a2a;font-weight:400;transform:scaleX(0.8124);">おじさん、スタンプ　原案</span>
<span id="t4" style="left:1887.3px;top:30.8px;font-size:11.5px;color:#333;font-weight:400;transform:scaleX(0.8554);">RY</span>
<span id="t5" style="left:43.0px;top:86.8px;font-size:12px;color:#222;font-weight:700;transform:scaleX(0.7914);">デザイン</span>
<span id="t6" style="left:150.0px;top:57.3px;font-size:12px;color:#111;font-weight:700;transform:scaleX(0.7081);">ソリッド</span>
<span id="t7" style="left:228.0px;top:57.3px;font-size:12px;color:#333;font-weight:400;transform:scaleX(0.7085);">サーフェス</span>
<span id="t8" style="left:316.0px;top:57.3px;font-size:12px;color:#333;font-weight:400;transform:scaleX(0.7081);">メッシュ</span>
<span id="t9" style="left:399.0px;top:57.3px;font-size:12px;color:#333;font-weight:400;transform:scaleX(0.7433);">シート メタル</span>
<span id="t10" style="left:502.0px;top:57.3px;font-size:12px;color:#333;font-weight:400;transform:scaleX(0.7246);">プラスチック</span>
<span id="t11" style="left:600.0px;top:57.3px;font-size:12px;color:#333;font-weight:400;transform:scaleX(0.7025);">ユーティリティ</span>
<span id="t12" style="left:243.0px;top:117.3px;font-size:12px;color:#333;font-weight:400;transform:scaleX(0.9993);">作成</span>
<span id="t13" style="left:511.0px;top:117.3px;font-size:12px;color:#333;font-weight:400;transform:scaleX(0.9993);">修正</span>
<span id="t14" style="left:678.0px;top:117.3px;font-size:12px;color:#333;font-weight:400;transform:scaleX(0.7027);">コンフィギュレーション</span>
<span id="t15" style="left:807.0px;top:117.3px;font-size:12px;color:#333;font-weight:400;transform:scaleX(0.9993);">構築</span>
<span id="t16" style="left:883.0px;top:117.3px;font-size:12px;color:#333;font-weight:400;transform:scaleX(0.9993);">検査</span>
<span id="t17" style="left:1001.0px;top:117.3px;font-size:12px;color:#333;font-weight:400;transform:scaleX(0.9993);">挿入</span>
<span id="t18" style="left:1102.0px;top:117.3px;font-size:12px;color:#333;font-weight:400;transform:scaleX(0.7743);">アセンブリ</span>
<span id="t19" style="left:1182.0px;top:117.3px;font-size:12px;color:#333;font-weight:400;transform:scaleX(0.9993);">選択</span>
<span id="t20" style="left:32.0px;top:147.5px;font-size:12px;color:#333;font-weight:400;transform:scaleX(0.7498);">ブラウザ</span>
<span id="t21" style="left:98.0px;top:175.3px;font-size:12px;color:#222;font-weight:400;transform:scaleX(0.8214);">おじさん、スタンプ　原案</span>
<span id="t22" style="left:91.0px;top:199.3px;font-size:12px;color:#333;font-weight:400;transform:scaleX(0.7730);">ドキュメントの設定</span>
<span id="t23" style="left:92.0px;top:223.3px;font-size:12px;color:#333;font-weight:400;transform:scaleX(0.8008);">名前の付いたビュー</span>
<span id="t24" style="left:116.0px;top:247.1px;font-size:12px;color:#333;font-weight:400;transform:scaleX(0.9785);">原点</span>
<span id="t25" style="left:116.0px;top:271.1px;font-size:12px;color:#333;font-weight:400;transform:scaleX(0.7534);">ボディ</span>
<span id="t26" style="left:116.0px;top:295.1px;font-size:12px;color:#333;font-weight:400;transform:scaleX(0.7289);">スケッチ</span>
<span id="t27" style="left:32.0px;top:956.5px;font-size:12px;color:#333;font-weight:400;transform:scaleX(0.6873);">コメント</span>
<span id="t28" style="left:50.5px;top:1038.8px;font-size:12.5px;color:#111;font-weight:400;transform:scaleX(0.8578);">0°C</span>
<span id="t29" style="left:50.5px;top:1054.3px;font-size:12px;color:#333;font-weight:400;transform:scaleX(0.8391);">くもり時々晴れ</span>
<span id="t30" style="left:35.2px;top:1037.1px;font-size:11.5px;color:#fff;font-weight:400;transform:scaleX(0.9366);">2</span>
<span id="t31" style="left:778.0px;top:1047.1px;font-size:13.5px;color:#5a5a5a;font-weight:400;transform:scaleX(1.0185);">検索</span>
<span id="t32" style="left:1879.0px;top:1038.8px;font-size:12px;color:#111;font-weight:400;transform:scaleX(0.9204);">7:32</span>
<span id="t33" style="left:1817.5px;top:1054.8px;font-size:12px;color:#111;font-weight:400;transform:scaleX(0.9953);">2026/02/21 (土)</span>
<span id="t34" style="left:1122.8px;top:1037.8px;font-size:6.5px;color:#fff;font-weight:400;transform:scaleX(1.0000);">良</span>
<span id="t35" style="left:1157.0px;top:1055.4px;font-size:4.5px;color:#fff;font-weight:700;transform:scaleX(0.9444);">FUS</span>
</body></html>
